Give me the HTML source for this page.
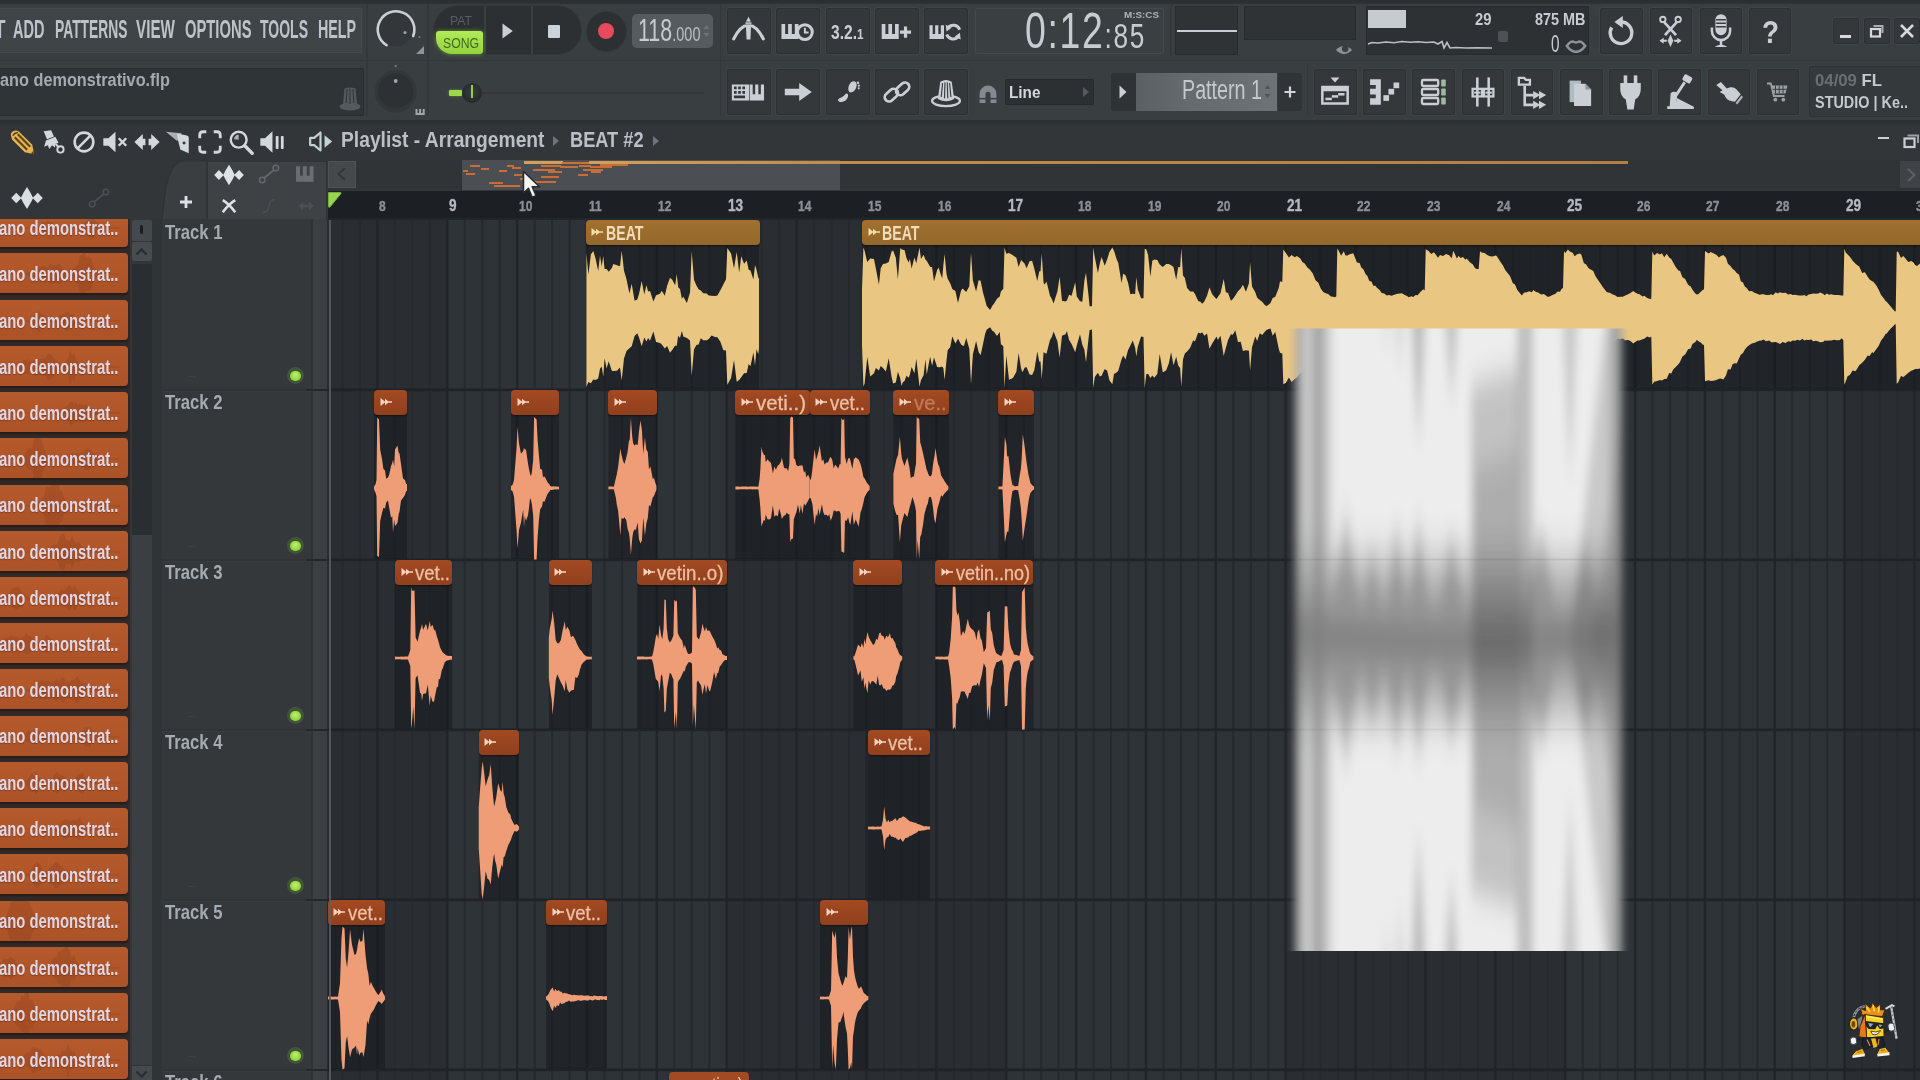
<!DOCTYPE html>
<html lang="en"><head><meta charset="utf-8"><title>FL Studio - Playlist</title>
<style>
html,body{margin:0;padding:0;background:#2e3338;}
body{width:1920px;height:1080px;overflow:hidden;position:relative;font-family:"Liberation Sans",sans-serif;}
#root{position:absolute;left:0;top:0;width:1920px;height:1080px;overflow:hidden;background:#34383b;filter:blur(0.55px);}
.b{position:absolute;display:block;box-sizing:border-box;}
.t{position:absolute;display:block;white-space:nowrap;transform-origin:0 0;}
.tbtn{background:#34383b;border-radius:3px;box-shadow:inset 0 0 0 1px #2d3134, 0 0 0 1px #3f4447;}
.pk{background:linear-gradient(#b65a2c,#ab5227);box-shadow:0 2px 2px rgba(40,15,5,.6);overflow:hidden;}
.ch{border-radius:4px;overflow:hidden;box-shadow:0 1px 1.5px rgba(0,0,0,.45);}
.ch .ca{position:absolute;left:5.5px;top:7.5px;}
</style></head><body><div id="root">
<!-- playlist header -->
<div class="b" style="left:0.0px;top:119.0px;width:1920.0px;height:101.0px;background:#323639;"></div>
<div class="b" style="left:0.0px;top:119.0px;width:1920.0px;height:5.5px;background:linear-gradient(#2a2e31,#2d3134 60%,#323639);"></div>
<svg class="b" style="left:7.5px;top:127.8px" width="28" height="28" viewBox="0 0 30 30" fill="#d3d8dc" stroke="none" color="#d3d8dc"><path d="M3.5 9.5 Q2 5.5 5.5 3.5 Q9.5 1.5 12.5 4.5 L26 18 L28 28 L18 26 L4.5 12.5 Z" fill="#e6b352"/><path d="M7.2 9.8 L20.5 23.2 M10.5 6.8 L23.8 20" stroke="#5c4418" stroke-width="2.3" fill="none"/><path d="M5.2 8.2 Q7 4.6 10.6 5" stroke="#5c4418" stroke-width="1.6" fill="none"/><path d="M28 28 L24.3 27.2 L27.2 24.3Z" fill="#5c4418"/></svg>
<svg class="b" style="left:38.5px;top:127.8px" width="28" height="28" viewBox="0 0 30 30" fill="#d3d8dc" stroke="none" color="#d3d8dc"><path d="M5 3.5 L13 2.5 L16 9 L8.5 12Z"/><path d="M7.5 13.5 L17.5 9.5 L21 16 L18 16.5 L17 21 L14 18.5 L11 22.5 L9.5 18.5 L5.5 20Z"/><circle cx="23" cy="23" r="3.4" fill="none" stroke="currentColor" stroke-width="2"/><path d="M18 17 L21 21" fill="none" stroke="currentColor" stroke-width="2"/></svg>
<svg class="b" style="left:69.5px;top:127.8px" width="28" height="28" viewBox="0 0 30 30" fill="#d3d8dc" stroke="none" color="#d3d8dc"><circle cx="15" cy="15" r="10" fill="none" stroke="currentColor" stroke-width="2.8"/><path d="M8.5 21.5 L21.5 8.5" fill="none" stroke="currentColor" stroke-width="2.8"/></svg>
<svg class="b" style="left:101.0px;top:127.8px" width="28" height="28" viewBox="0 0 30 30" fill="#d3d8dc" stroke="none" color="#d3d8dc"><path d="M2.5 11 H8 L15.5 4 V26 L8 19 H2.5Z"/><path d="M19 11 L27 19 M27 11 L19 19" fill="none" stroke="currentColor" stroke-width="2.6"/></svg>
<svg class="b" style="left:132.5px;top:127.8px" width="28" height="28" viewBox="0 0 30 30" fill="#d3d8dc" stroke="none" color="#d3d8dc"><path d="M1.5 15 L10.5 6.5 V11.5 H19.5 V6.5 L28.5 15 L19.5 23.5 V18.5 H10.5 V23.5Z"/><rect x="13.3" y="8" width="3.4" height="14" fill="#34383b"/></svg>
<svg class="b" style="left:163.5px;top:127.8px" width="28" height="28" viewBox="0 0 30 30" fill="#d3d8dc" stroke="none" color="#d3d8dc"><path d="M2 4 L19 5.5 L14 14Z" fill="#aab0b5"/><path d="M14 6 L24.5 8 Q26.5 8.5 26.5 10.5 V27 L17.5 23 L15 13Z"/><circle cx="21.5" cy="16" r="1.6" fill="#34383b"/></svg>
<svg class="b" style="left:195.5px;top:127.8px" width="28" height="28" viewBox="0 0 30 30" fill="#d3d8dc" stroke="none" color="#d3d8dc"><path d="M4 11 V7.5 Q4 4 7.5 4 H11 M19 4 H22.5 Q26 4 26 7.5 V11 M26 19 V22.5 Q26 26 22.5 26 H19 M11 26 H7.5 Q4 26 4 22.5 V19" fill="none" stroke="currentColor" stroke-width="3"/></svg>
<svg class="b" style="left:226.5px;top:127.8px" width="28" height="28" viewBox="0 0 30 30" fill="#d3d8dc" stroke="none" color="#d3d8dc"><circle cx="12.5" cy="12.5" r="8.5" fill="none" stroke="currentColor" stroke-width="2.6"/><path d="M19 19 L27 27" fill="none" stroke="currentColor" stroke-width="3.6" stroke-linecap="round"/><path d="M7.5 12 A5.2 5.2 0 0 1 12.5 7.3 L12.5 12.5Z" fill="#aab0b5"/></svg>
<svg class="b" style="left:257.5px;top:127.8px" width="28" height="28" viewBox="0 0 30 30" fill="#d3d8dc" stroke="none" color="#d3d8dc"><path d="M2.5 11 H7.5 L15.5 3.5 V26.5 L7.5 19 H2.5Z"/><rect x="19" y="8.5" width="3" height="14" rx="1"/><rect x="24.5" y="8.5" width="3" height="14" rx="1"/></svg>
<svg class="b" style="left:306.5px;top:128.3px" width="27" height="27" viewBox="0 0 30 30" fill="#c3d0d4" stroke="none" color="#c3d0d4"><path d="M3.5 11 H8 L15 5 V25 L8 19 H3.5Z" fill="none" stroke="currentColor" stroke-width="2.4" stroke-linejoin="round"/><path d="M19.5 8 L28 15 L19.5 22Z"/></svg>
<span class="t" style="left:340.5px;top:129.8px;font-size:21.5px;line-height:21.5px;color:#bac0c6;transform:scaleX(0.895);font-weight:bold;">Playlist - Arrangement</span>
<svg class="b" style="left:551px;top:134px" width="10" height="14"><path d="M2 2 L8 7 L2 12Z" fill="#6f757a"/></svg>
<span class="t" style="left:569.5px;top:129.8px;font-size:21.5px;line-height:21.5px;color:#bac0c6;transform:scaleX(0.847);font-weight:bold;">BEAT #2</span>
<svg class="b" style="left:651px;top:134px" width="10" height="14"><path d="M2 2 L8 7 L2 12Z" fill="#6f757a"/></svg>
<div class="b" style="left:1878.0px;top:136.5px;width:11.0px;height:2.6px;background:#c9cfd4;"></div>
<svg class="b" style="left:1901px;top:131px" width="20" height="20" viewBox="0 0 20 20"><path d="M6.5 4.5 H17 V12" fill="none" stroke="#9aa0a5" stroke-width="2"/><rect x="3.5" y="7.5" width="10" height="8.5" fill="none" stroke="#c9cfd4" stroke-width="2.2"/></svg>
<svg class="b" style="left:10.7px;top:181.6px" width="32" height="32" viewBox="0 0 30 30" fill="#d9dee2" stroke="none" color="#d9dee2"><path d="M15 4.8 Q18.5 10 20.8 15 Q18.5 20 15 25.2 Q11.5 20 9.2 15 Q11.5 10 15 4.8Z M4.9 10 L9.8 15 L4.9 20 L0.2 15Z M25.1 10 L29.8 15 L25.1 20 L20.2 15Z"/></svg>
<svg class="b" style="left:86.5px;top:185.5px" width="24" height="24" viewBox="0 0 30 30" fill="#4b5054" stroke="none" color="#4b5054"><circle cx="6.5" cy="22.5" r="3.4" fill="none" stroke="currentColor" stroke-width="2"/><circle cx="23.5" cy="7.5" r="3.4" fill="none" stroke="currentColor" stroke-width="2"/><path d="M9 20 L21 10" fill="none" stroke="currentColor" stroke-width="2.2"/></svg>
<svg class="b" style="left:160px;top:158px" width="50" height="64" viewBox="160 158 50 64"><path d="M162 222 L163.5 205 Q166 178 174 166 Q178 160.5 186 160.5 H207 V222Z" fill="#3a3e41" stroke="#2e3235" stroke-width="1.3"/></svg>
<svg class="b" style="left:176.0px;top:192.0px" width="20" height="20" viewBox="0 0 30 30" fill="#dde2e6" stroke="none" color="#dde2e6"><path d="M15 6 V24 M6 15 H24" fill="none" stroke="currentColor" stroke-width="4.2"/></svg>
<div class="b" style="left:207.0px;top:160.5px;width:120.0px;height:59.0px;background:#3e4245;box-shadow:inset 0 0 0 1px #303437"></div>
<svg class="b" style="left:214.0px;top:159.5px" width="30" height="30" viewBox="0 0 30 30" fill="#dde2e6" stroke="none" color="#dde2e6"><path d="M15 4.8 Q18.5 10 20.8 15 Q18.5 20 15 25.2 Q11.5 20 9.2 15 Q11.5 10 15 4.8Z M4.9 10 L9.8 15 L4.9 20 L0.2 15Z M25.1 10 L29.8 15 L25.1 20 L20.2 15Z"/></svg>
<svg class="b" style="left:257.0px;top:162.0px" width="24" height="24" viewBox="0 0 30 30" fill="#63686c" stroke="none" color="#63686c"><circle cx="6.5" cy="22.5" r="3.4" fill="none" stroke="currentColor" stroke-width="2"/><circle cx="23.5" cy="7.5" r="3.4" fill="none" stroke="currentColor" stroke-width="2"/><path d="M9 20 L21 10" fill="none" stroke="currentColor" stroke-width="2.2"/></svg>
<svg class="b" style="left:293.0px;top:160.5px" width="26" height="26" viewBox="0 0 30 30" fill="#696e72" stroke="none" color="#696e72"><path d="M3 6 h4.6 v11 h3.2 v-11 h4.6 v11 h3.2 v-11 h4.6 v18 h-20.2z" transform="translate(0.5 0)"/></svg>
<svg class="b" style="left:218.0px;top:194.5px" width="22" height="22" viewBox="0 0 30 30" fill="#dde2e6" stroke="none" color="#dde2e6"><path d="M6.5 7 Q15 12 23.5 23.5 M23.5 7 Q15 12 6.5 23.5" fill="none" stroke="currentColor" stroke-width="3.6"/></svg>
<svg class="b" style="left:258.5px;top:195.5px" width="20" height="20" viewBox="0 0 30 30" fill="#4b5054" stroke="none" color="#4b5054"><path d="M6 25 Q14 24 15 15 Q16 6 24 5" fill="none" stroke="currentColor" stroke-width="2.2"/></svg>
<svg class="b" style="left:297.0px;top:197.0px" width="18" height="18" viewBox="0 0 30 30" fill="#4b5054" stroke="none" color="#4b5054"><path d="M2 15 L10 8 V12.8 H20 V8 L28 15 L20 22 V17.2 H10 V22Z"/></svg>
<div class="b" style="left:327.5px;top:159.5px;width:1593.0px;height:30.5px;background:#303437;"></div>
<div class="b" style="left:327.5px;top:160.5px;width:28.5px;height:27.0px;background:#45494c;box-shadow:inset 0 0 0 1px #4e5255"></div>
<svg class="b" style="left:334px;top:165px" width="16" height="18" viewBox="0 0 16 18"><path d="M11 3 L4.5 9 L11 15" fill="none" stroke="#33373a" stroke-width="2.2"/></svg>
<div class="b" style="left:462.0px;top:160.0px;width:378.0px;height:29.5px;background:#4b4f53;"></div>
<div class="b" style="left:1900.0px;top:161.0px;width:20.0px;height:27.0px;background:#3f4346;"></div>
<svg class="b" style="left:1903px;top:166px" width="16" height="18" viewBox="0 0 16 18"><path d="M5 3 L11.5 9 L5 15" fill="none" stroke="#5d6165" stroke-width="2.2"/></svg>
<div class="b" style="left:523.5px;top:161.0px;width:39.0px;height:3.0px;background:#d2a05c;"></div>
<div class="b" style="left:562.0px;top:161.5px;width:27.0px;height:2.4px;background:#c8742f;"></div>
<div class="b" style="left:589.0px;top:161.0px;width:1039.0px;height:3.0px;background:linear-gradient(90deg,#d2a05c,#bf8c4a 25%,#b07f42);"></div>
<div class="b" style="left:470.0px;top:165.0px;width:10.0px;height:2.4px;background:#c86d35;"></div>
<div class="b" style="left:481.0px;top:167.5px;width:8.0px;height:2.4px;background:#c86d35;"></div>
<div class="b" style="left:466.0px;top:173.0px;width:9.0px;height:2.4px;background:#c86d35;"></div>
<div class="b" style="left:463.0px;top:169.5px;width:5.0px;height:2.4px;background:#c86d35;"></div>
<div class="b" style="left:489.0px;top:181.5px;width:14.0px;height:2.4px;background:#c86d35;"></div>
<div class="b" style="left:494.0px;top:184.5px;width:26.0px;height:2.4px;background:#c86d35;"></div>
<div class="b" style="left:507.0px;top:164.5px;width:7.0px;height:2.4px;background:#c86d35;"></div>
<div class="b" style="left:499.0px;top:169.5px;width:8.0px;height:2.4px;background:#c86d35;"></div>
<div class="b" style="left:512.0px;top:167.0px;width:9.0px;height:2.4px;background:#c86d35;"></div>
<div class="b" style="left:514.0px;top:173.5px;width:8.0px;height:2.4px;background:#c86d35;"></div>
<div class="b" style="left:541.0px;top:165.0px;width:20.0px;height:2.4px;background:#c86d35;"></div>
<div class="b" style="left:533.0px;top:168.5px;width:22.0px;height:2.4px;background:#c86d35;"></div>
<div class="b" style="left:548.0px;top:170.5px;width:14.0px;height:2.4px;background:#c86d35;"></div>
<div class="b" style="left:541.0px;top:176.0px;width:18.0px;height:2.4px;background:#c86d35;"></div>
<div class="b" style="left:579.0px;top:164.5px;width:12.0px;height:2.4px;background:#c86d35;"></div>
<div class="b" style="left:590.0px;top:165.5px;width:22.0px;height:2.4px;background:#c86d35;"></div>
<div class="b" style="left:583.0px;top:168.5px;width:20.0px;height:2.4px;background:#c86d35;"></div>
<div class="b" style="left:591.0px;top:170.5px;width:10.0px;height:2.4px;background:#c86d35;"></div>
<div class="b" style="left:578.0px;top:174.0px;width:10.0px;height:2.4px;background:#c86d35;"></div>
<div class="b" style="left:534.0px;top:181.0px;width:22.0px;height:2.4px;background:#c86d35;"></div>
<div class="b" style="left:520.0px;top:178.0px;width:8.0px;height:2.4px;background:#c86d35;"></div>
<div class="b" style="left:560.0px;top:166.0px;width:18.0px;height:2.4px;background:#c86d35;"></div>
<div class="b" style="left:600.0px;top:163.8px;width:28.0px;height:2.4px;background:#c86d35;"></div>
<!-- left -->
<div class="b" style="left:0.0px;top:219.0px;width:130.0px;height:861.0px;background:#2f2b2b;"></div>
<div class="b pk" style="left:-4px;top:219.0px;width:132px;height:28.2px;border-radius:0 0 4px 0"><svg class="b" style="left:4px;top:-11.8px" width="124" height="40"><path d="M0.0 20.5 L2.0 20.5 L4.0 20.3 L6.0 20.5 L8.0 20.3 L10.0 20.3 L12.0 20.5 L14.0 20.5 L16.0 20.3 L18.0 20.2 L20.0 20.2 L22.0 20.5 L24.0 20.3 L26.0 20.4 L28.0 20.4 L30.0 20.3 L32.0 20.4 L34.0 20.2 L36.0 20.1 L38.0 19.0 L40.0 18.6 L42.0 16.2 L44.0 15.1 L46.0 15.7 L48.0 13.6 L50.0 15.8 L52.0 14.5 L54.0 17.9 L56.0 18.9 L58.0 19.8 L60.0 19.8 L62.0 20.0 L64.0 20.2 L66.0 20.2 L68.0 20.4 L70.0 20.3 L72.0 20.2 L74.0 20.4 L76.0 20.1 L78.0 19.4 L80.0 18.2 L82.0 17.1 L84.0 15.5 L86.0 15.1 L88.0 12.2 L90.0 12.1 L92.0 10.1 L94.0 11.0 L96.0 15.1 L98.0 17.6 L100.0 18.6 L102.0 19.2 L104.0 19.7 L106.0 20.2 L108.0 20.1 L110.0 20.3 L112.0 20.4 L114.0 20.3 L116.0 20.3 L118.0 20.3 L120.0 20.5 L120.0 21.5 L118.0 21.7 L116.0 21.7 L114.0 21.7 L112.0 21.6 L110.0 21.7 L108.0 21.9 L106.0 21.8 L104.0 22.3 L102.0 22.8 L100.0 23.4 L98.0 24.4 L96.0 26.9 L94.0 31.0 L92.0 31.9 L90.0 29.9 L88.0 29.8 L86.0 26.9 L84.0 26.5 L82.0 24.9 L80.0 23.8 L78.0 22.6 L76.0 21.9 L74.0 21.6 L72.0 21.8 L70.0 21.7 L68.0 21.6 L66.0 21.8 L64.0 21.8 L62.0 22.0 L60.0 22.2 L58.0 22.2 L56.0 23.1 L54.0 24.1 L52.0 27.5 L50.0 26.2 L48.0 28.4 L46.0 26.3 L44.0 26.9 L42.0 25.8 L40.0 23.4 L38.0 23.0 L36.0 21.9 L34.0 21.8 L32.0 21.6 L30.0 21.7 L28.0 21.6 L26.0 21.6 L24.0 21.7 L22.0 21.5 L20.0 21.8 L18.0 21.8 L16.0 21.7 L14.0 21.5 L12.0 21.5 L10.0 21.7 L8.0 21.7 L6.0 21.5 L4.0 21.7 L2.0 21.5 L0.0 21.5Z" fill="#97441e" fill-opacity="0.45"/></svg></div>
<span class="t" style="left:-1.5px;top:217.0px;font-size:21px;line-height:21px;color:#e2d6e3;transform:scaleX(0.706);font-weight:bold;text-shadow:0 1px 1px rgba(90,40,20,.5);">ano demonstrat..</span>
<div class="b pk" style="left:-4px;top:253.4px;width:132px;height:40.0px;border-radius:0 4px 4px 0"><svg class="b" style="left:4px;top:0.0px" width="124" height="40"><path d="M0.0 20.5 L2.0 20.5 L4.0 20.4 L6.0 20.4 L8.0 20.5 L10.0 20.3 L12.0 20.5 L14.0 20.3 L16.0 20.4 L18.0 20.6 L20.0 20.4 L22.0 20.4 L24.0 20.1 L26.0 19.9 L28.0 19.6 L30.0 18.3 L32.0 18.2 L34.0 15.8 L36.0 16.3 L38.0 16.1 L40.0 12.8 L42.0 14.0 L44.0 11.8 L46.0 14.5 L48.0 14.8 L50.0 10.5 L52.0 12.2 L54.0 12.0 L56.0 12.7 L58.0 10.4 L60.0 11.0 L62.0 14.9 L64.0 16.8 L66.0 16.8 L68.0 18.3 L70.0 17.6 L72.0 17.1 L74.0 14.7 L76.0 12.7 L78.0 11.6 L80.0 2.1 L82.0 2.1 L84.0 -3.7 L86.0 5.1 L88.0 3.3 L90.0 3.8 L92.0 7.8 L94.0 15.8 L96.0 16.4 L98.0 18.3 L100.0 19.3 L102.0 20.0 L104.0 20.1 L106.0 20.3 L108.0 20.3 L110.0 20.4 L112.0 20.4 L114.0 20.4 L116.0 20.3 L118.0 20.2 L120.0 20.5 L120.0 21.5 L118.0 21.8 L116.0 21.7 L114.0 21.6 L112.0 21.6 L110.0 21.6 L108.0 21.7 L106.0 21.7 L104.0 21.9 L102.0 22.0 L100.0 22.7 L98.0 23.7 L96.0 25.6 L94.0 26.2 L92.0 34.2 L90.0 38.2 L88.0 38.7 L86.0 36.9 L84.0 45.7 L82.0 39.9 L80.0 39.9 L78.0 30.4 L76.0 29.3 L74.0 27.3 L72.0 24.9 L70.0 24.4 L68.0 23.7 L66.0 25.2 L64.0 25.2 L62.0 27.1 L60.0 31.0 L58.0 31.6 L56.0 29.3 L54.0 30.0 L52.0 29.8 L50.0 31.5 L48.0 27.2 L46.0 27.5 L44.0 30.2 L42.0 28.0 L40.0 29.2 L38.0 25.9 L36.0 25.7 L34.0 26.2 L32.0 23.8 L30.0 23.7 L28.0 22.4 L26.0 22.1 L24.0 21.9 L22.0 21.6 L20.0 21.6 L18.0 21.4 L16.0 21.6 L14.0 21.7 L12.0 21.5 L10.0 21.7 L8.0 21.5 L6.0 21.6 L4.0 21.6 L2.0 21.5 L0.0 21.5Z" fill="#97441e" fill-opacity="0.45"/></svg></div>
<span class="t" style="left:-1.5px;top:263.2px;font-size:21px;line-height:21px;color:#e2d6e3;transform:scaleX(0.706);font-weight:bold;text-shadow:0 1px 1px rgba(90,40,20,.5);">ano demonstrat..</span>
<div class="b pk" style="left:-4px;top:299.6px;width:132px;height:40.0px;border-radius:0 4px 4px 0"><svg class="b" style="left:4px;top:0.0px" width="124" height="40"><path d="M0.0 20.4 L2.0 20.4 L4.0 20.3 L6.0 20.4 L8.0 20.3 L10.0 20.3 L12.0 20.5 L14.0 20.3 L16.0 20.4 L18.0 20.4 L20.0 20.5 L22.0 20.6 L24.0 20.5 L26.0 20.3 L28.0 19.8 L30.0 18.9 L32.0 17.4 L34.0 15.5 L36.0 13.1 L38.0 11.8 L40.0 11.3 L42.0 14.9 L44.0 14.8 L46.0 16.8 L48.0 19.2 L50.0 20.1 L52.0 20.2 L54.0 19.9 L56.0 19.1 L58.0 18.9 L60.0 15.5 L62.0 14.6 L64.0 14.1 L66.0 12.0 L68.0 11.7 L70.0 14.0 L72.0 13.9 L74.0 15.5 L76.0 18.1 L78.0 19.8 L80.0 20.2 L82.0 20.2 L84.0 20.3 L86.0 20.4 L88.0 20.3 L90.0 20.2 L92.0 20.4 L94.0 20.5 L96.0 20.5 L98.0 20.5 L100.0 20.4 L102.0 20.4 L104.0 20.5 L106.0 20.3 L108.0 20.4 L110.0 20.6 L112.0 20.5 L114.0 20.4 L116.0 20.3 L118.0 20.5 L120.0 20.3 L120.0 21.7 L118.0 21.5 L116.0 21.7 L114.0 21.6 L112.0 21.5 L110.0 21.4 L108.0 21.6 L106.0 21.7 L104.0 21.5 L102.0 21.6 L100.0 21.6 L98.0 21.5 L96.0 21.5 L94.0 21.5 L92.0 21.6 L90.0 21.8 L88.0 21.7 L86.0 21.6 L84.0 21.7 L82.0 21.8 L80.0 21.8 L78.0 22.2 L76.0 23.9 L74.0 26.5 L72.0 28.1 L70.0 28.0 L68.0 30.3 L66.0 30.0 L64.0 27.9 L62.0 27.4 L60.0 26.5 L58.0 23.1 L56.0 22.9 L54.0 22.1 L52.0 21.8 L50.0 21.9 L48.0 22.8 L46.0 25.2 L44.0 27.2 L42.0 27.1 L40.0 30.7 L38.0 30.2 L36.0 28.9 L34.0 26.5 L32.0 24.6 L30.0 23.1 L28.0 22.2 L26.0 21.7 L24.0 21.5 L22.0 21.4 L20.0 21.5 L18.0 21.6 L16.0 21.6 L14.0 21.7 L12.0 21.5 L10.0 21.7 L8.0 21.7 L6.0 21.6 L4.0 21.7 L2.0 21.6 L0.0 21.6Z" fill="#97441e" fill-opacity="0.45"/></svg></div>
<span class="t" style="left:-1.5px;top:309.5px;font-size:21px;line-height:21px;color:#e2d6e3;transform:scaleX(0.706);font-weight:bold;text-shadow:0 1px 1px rgba(90,40,20,.5);">ano demonstrat..</span>
<div class="b pk" style="left:-4px;top:345.9px;width:132px;height:40.0px;border-radius:0 4px 4px 0"><svg class="b" style="left:4px;top:0.0px" width="124" height="40"><path d="M0.0 20.5 L2.0 20.2 L4.0 20.5 L6.0 20.3 L8.0 20.3 L10.0 20.1 L12.0 19.4 L14.0 19.2 L16.0 18.3 L18.0 16.8 L20.0 15.8 L22.0 15.9 L24.0 14.0 L26.0 14.3 L28.0 13.1 L30.0 15.5 L32.0 15.1 L34.0 14.3 L36.0 12.5 L38.0 13.3 L40.0 13.1 L42.0 13.3 L44.0 12.4 L46.0 12.3 L48.0 7.3 L50.0 8.6 L52.0 9.8 L54.0 13.1 L56.0 14.0 L58.0 16.8 L60.0 17.3 L62.0 18.2 L64.0 16.7 L66.0 15.0 L68.0 12.8 L70.0 3.7 L72.0 10.1 L74.0 6.9 L76.0 12.2 L78.0 17.8 L80.0 19.0 L82.0 19.7 L84.0 20.1 L86.0 20.4 L88.0 20.3 L90.0 20.3 L92.0 20.5 L94.0 20.4 L96.0 20.4 L98.0 20.4 L100.0 20.3 L102.0 20.4 L104.0 20.3 L106.0 20.6 L108.0 20.4 L110.0 20.6 L112.0 20.3 L114.0 20.3 L116.0 20.4 L118.0 20.4 L120.0 20.4 L120.0 21.6 L118.0 21.6 L116.0 21.6 L114.0 21.7 L112.0 21.7 L110.0 21.4 L108.0 21.6 L106.0 21.4 L104.0 21.7 L102.0 21.6 L100.0 21.7 L98.0 21.6 L96.0 21.6 L94.0 21.6 L92.0 21.5 L90.0 21.7 L88.0 21.7 L86.0 21.6 L84.0 21.9 L82.0 22.3 L80.0 23.0 L78.0 24.2 L76.0 29.8 L74.0 35.1 L72.0 31.9 L70.0 38.3 L68.0 29.2 L66.0 27.0 L64.0 25.3 L62.0 23.8 L60.0 24.7 L58.0 25.2 L56.0 28.0 L54.0 28.9 L52.0 32.2 L50.0 33.4 L48.0 34.7 L46.0 29.7 L44.0 29.6 L42.0 28.7 L40.0 28.9 L38.0 28.7 L36.0 29.5 L34.0 27.7 L32.0 26.9 L30.0 26.5 L28.0 28.9 L26.0 27.7 L24.0 28.0 L22.0 26.1 L20.0 26.2 L18.0 25.2 L16.0 23.7 L14.0 22.8 L12.0 22.6 L10.0 21.9 L8.0 21.7 L6.0 21.7 L4.0 21.5 L2.0 21.8 L0.0 21.5Z" fill="#97441e" fill-opacity="0.45"/></svg></div>
<span class="t" style="left:-1.5px;top:355.7px;font-size:21px;line-height:21px;color:#e2d6e3;transform:scaleX(0.706);font-weight:bold;text-shadow:0 1px 1px rgba(90,40,20,.5);">ano demonstrat..</span>
<div class="b pk" style="left:-4px;top:392.1px;width:132px;height:40.0px;border-radius:0 4px 4px 0"><svg class="b" style="left:4px;top:0.0px" width="124" height="40"><path d="M0.0 20.6 L2.0 20.5 L4.0 20.3 L6.0 20.5 L8.0 20.3 L10.0 20.5 L12.0 20.3 L14.0 20.3 L16.0 20.4 L18.0 20.4 L20.0 20.5 L22.0 20.4 L24.0 20.4 L26.0 20.4 L28.0 20.4 L30.0 20.4 L32.0 20.5 L34.0 20.5 L36.0 20.4 L38.0 20.5 L40.0 20.4 L42.0 20.3 L44.0 20.3 L46.0 20.5 L48.0 20.4 L50.0 20.2 L52.0 20.3 L54.0 19.8 L56.0 20.0 L58.0 19.0 L60.0 19.3 L62.0 17.3 L64.0 15.5 L66.0 14.8 L68.0 13.0 L70.0 10.2 L72.0 8.5 L74.0 12.7 L76.0 10.2 L78.0 13.2 L80.0 11.1 L82.0 12.8 L84.0 13.2 L86.0 11.5 L88.0 15.3 L90.0 16.0 L92.0 17.5 L94.0 16.6 L96.0 18.7 L98.0 19.6 L100.0 19.5 L102.0 19.8 L104.0 20.1 L106.0 20.3 L108.0 20.3 L110.0 20.3 L112.0 20.5 L114.0 20.3 L116.0 20.3 L118.0 20.3 L120.0 20.3 L120.0 21.7 L118.0 21.7 L116.0 21.7 L114.0 21.7 L112.0 21.5 L110.0 21.7 L108.0 21.7 L106.0 21.7 L104.0 21.9 L102.0 22.2 L100.0 22.5 L98.0 22.4 L96.0 23.3 L94.0 25.4 L92.0 24.5 L90.0 26.0 L88.0 26.7 L86.0 30.5 L84.0 28.8 L82.0 29.2 L80.0 30.9 L78.0 28.8 L76.0 31.8 L74.0 29.3 L72.0 33.5 L70.0 31.8 L68.0 29.0 L66.0 27.2 L64.0 26.5 L62.0 24.7 L60.0 22.7 L58.0 23.0 L56.0 22.0 L54.0 22.2 L52.0 21.7 L50.0 21.8 L48.0 21.6 L46.0 21.5 L44.0 21.7 L42.0 21.7 L40.0 21.6 L38.0 21.5 L36.0 21.6 L34.0 21.5 L32.0 21.5 L30.0 21.6 L28.0 21.6 L26.0 21.6 L24.0 21.6 L22.0 21.6 L20.0 21.5 L18.0 21.6 L16.0 21.6 L14.0 21.7 L12.0 21.7 L10.0 21.5 L8.0 21.7 L6.0 21.5 L4.0 21.7 L2.0 21.5 L0.0 21.4Z" fill="#97441e" fill-opacity="0.45"/></svg></div>
<span class="t" style="left:-1.5px;top:401.9px;font-size:21px;line-height:21px;color:#e2d6e3;transform:scaleX(0.706);font-weight:bold;text-shadow:0 1px 1px rgba(90,40,20,.5);">ano demonstrat..</span>
<div class="b pk" style="left:-4px;top:438.3px;width:132px;height:40.0px;border-radius:0 4px 4px 0"><svg class="b" style="left:4px;top:0.0px" width="124" height="40"><path d="M0.0 20.5 L2.0 20.4 L4.0 20.4 L6.0 20.4 L8.0 20.3 L10.0 20.2 L12.0 20.4 L14.0 20.0 L16.0 20.0 L18.0 19.4 L20.0 18.8 L22.0 18.2 L24.0 17.6 L26.0 13.8 L28.0 10.8 L30.0 9.9 L32.0 10.8 L34.0 1.7 L36.0 -0.2 L38.0 -1.8 L40.0 -0.4 L42.0 4.2 L44.0 10.6 L46.0 15.6 L48.0 17.4 L50.0 18.8 L52.0 19.4 L54.0 19.9 L56.0 20.0 L58.0 20.2 L60.0 20.0 L62.0 19.5 L64.0 19.0 L66.0 18.0 L68.0 17.3 L70.0 17.6 L72.0 15.7 L74.0 15.4 L76.0 15.0 L78.0 15.4 L80.0 15.5 L82.0 13.8 L84.0 12.1 L86.0 10.9 L88.0 9.5 L90.0 11.3 L92.0 14.8 L94.0 15.0 L96.0 17.0 L98.0 16.5 L100.0 18.9 L102.0 19.4 L104.0 20.1 L106.0 20.2 L108.0 20.2 L110.0 20.3 L112.0 20.6 L114.0 20.4 L116.0 20.5 L118.0 20.2 L120.0 20.5 L120.0 21.5 L118.0 21.8 L116.0 21.5 L114.0 21.6 L112.0 21.4 L110.0 21.7 L108.0 21.8 L106.0 21.8 L104.0 21.9 L102.0 22.6 L100.0 23.1 L98.0 25.5 L96.0 25.0 L94.0 27.0 L92.0 27.2 L90.0 30.7 L88.0 32.5 L86.0 31.1 L84.0 29.9 L82.0 28.2 L80.0 26.5 L78.0 26.6 L76.0 27.0 L74.0 26.6 L72.0 26.3 L70.0 24.4 L68.0 24.7 L66.0 24.0 L64.0 23.0 L62.0 22.5 L60.0 22.0 L58.0 21.8 L56.0 22.0 L54.0 22.1 L52.0 22.6 L50.0 23.2 L48.0 24.6 L46.0 26.4 L44.0 31.4 L42.0 37.8 L40.0 42.4 L38.0 43.8 L36.0 42.2 L34.0 40.3 L32.0 31.2 L30.0 32.1 L28.0 31.2 L26.0 28.2 L24.0 24.4 L22.0 23.8 L20.0 23.2 L18.0 22.6 L16.0 22.0 L14.0 22.0 L12.0 21.6 L10.0 21.8 L8.0 21.7 L6.0 21.6 L4.0 21.6 L2.0 21.6 L0.0 21.5Z" fill="#97441e" fill-opacity="0.45"/></svg></div>
<span class="t" style="left:-1.5px;top:448.1px;font-size:21px;line-height:21px;color:#e2d6e3;transform:scaleX(0.706);font-weight:bold;text-shadow:0 1px 1px rgba(90,40,20,.5);">ano demonstrat..</span>
<div class="b pk" style="left:-4px;top:484.5px;width:132px;height:40.0px;border-radius:0 4px 4px 0"><svg class="b" style="left:4px;top:0.0px" width="124" height="40"><path d="M0.0 20.5 L2.0 20.5 L4.0 20.4 L6.0 20.3 L8.0 20.3 L10.0 20.5 L12.0 20.4 L14.0 20.5 L16.0 20.5 L18.0 20.5 L20.0 20.3 L22.0 20.5 L24.0 20.5 L26.0 20.5 L28.0 20.3 L30.0 20.0 L32.0 19.6 L34.0 19.5 L36.0 18.3 L38.0 17.7 L40.0 16.4 L42.0 13.3 L44.0 11.6 L46.0 2.3 L48.0 1.6 L50.0 2.4 L52.0 -0.4 L54.0 -7.3 L56.0 -5.5 L58.0 -7.5 L60.0 5.7 L62.0 5.6 L64.0 12.7 L66.0 15.1 L68.0 17.8 L70.0 19.3 L72.0 20.0 L74.0 19.8 L76.0 20.0 L78.0 20.0 L80.0 19.4 L82.0 18.5 L84.0 18.2 L86.0 16.4 L88.0 16.4 L90.0 13.8 L92.0 14.2 L94.0 16.2 L96.0 16.9 L98.0 16.5 L100.0 16.9 L102.0 17.4 L104.0 18.3 L106.0 19.1 L108.0 19.8 L110.0 20.0 L112.0 20.4 L114.0 20.2 L116.0 20.6 L118.0 20.2 L120.0 20.5 L120.0 21.5 L118.0 21.8 L116.0 21.4 L114.0 21.8 L112.0 21.6 L110.0 22.0 L108.0 22.2 L106.0 22.9 L104.0 23.7 L102.0 24.6 L100.0 25.1 L98.0 25.5 L96.0 25.1 L94.0 25.8 L92.0 27.8 L90.0 28.2 L88.0 25.6 L86.0 25.6 L84.0 23.8 L82.0 23.5 L80.0 22.6 L78.0 22.0 L76.0 22.0 L74.0 22.2 L72.0 22.0 L70.0 22.7 L68.0 24.2 L66.0 26.9 L64.0 29.3 L62.0 36.4 L60.0 36.3 L58.0 49.5 L56.0 47.5 L54.0 49.3 L52.0 42.4 L50.0 39.6 L48.0 40.4 L46.0 39.7 L44.0 30.4 L42.0 28.7 L40.0 25.6 L38.0 24.3 L36.0 23.7 L34.0 22.5 L32.0 22.4 L30.0 22.0 L28.0 21.7 L26.0 21.5 L24.0 21.5 L22.0 21.5 L20.0 21.7 L18.0 21.5 L16.0 21.5 L14.0 21.5 L12.0 21.6 L10.0 21.5 L8.0 21.7 L6.0 21.7 L4.0 21.6 L2.0 21.5 L0.0 21.5Z" fill="#97441e" fill-opacity="0.45"/></svg></div>
<span class="t" style="left:-1.5px;top:494.3px;font-size:21px;line-height:21px;color:#e2d6e3;transform:scaleX(0.706);font-weight:bold;text-shadow:0 1px 1px rgba(90,40,20,.5);">ano demonstrat..</span>
<div class="b pk" style="left:-4px;top:530.7px;width:132px;height:40.0px;border-radius:0 4px 4px 0"><svg class="b" style="left:4px;top:0.0px" width="124" height="40"><path d="M0.0 20.4 L2.0 20.4 L4.0 20.5 L6.0 20.5 L8.0 20.6 L10.0 20.3 L12.0 20.2 L14.0 20.3 L16.0 20.5 L18.0 20.3 L20.0 20.5 L22.0 20.5 L24.0 20.4 L26.0 20.5 L28.0 20.5 L30.0 20.2 L32.0 20.6 L34.0 20.5 L36.0 20.4 L38.0 20.5 L40.0 20.4 L42.0 20.2 L44.0 19.6 L46.0 19.8 L48.0 18.9 L50.0 16.5 L52.0 15.0 L54.0 12.2 L56.0 14.4 L58.0 10.7 L60.0 4.5 L62.0 2.9 L64.0 2.5 L66.0 9.2 L68.0 9.1 L70.0 10.7 L72.0 4.4 L74.0 9.7 L76.0 12.3 L78.0 11.0 L80.0 11.5 L82.0 15.6 L84.0 16.5 L86.0 17.1 L88.0 17.6 L90.0 18.8 L92.0 19.1 L94.0 19.9 L96.0 20.4 L98.0 20.1 L100.0 20.1 L102.0 20.5 L104.0 20.2 L106.0 20.3 L108.0 20.5 L110.0 20.4 L112.0 20.5 L114.0 20.5 L116.0 20.5 L118.0 20.2 L120.0 20.3 L120.0 21.7 L118.0 21.8 L116.0 21.5 L114.0 21.5 L112.0 21.5 L110.0 21.6 L108.0 21.5 L106.0 21.7 L104.0 21.8 L102.0 21.5 L100.0 21.9 L98.0 21.9 L96.0 21.6 L94.0 22.1 L92.0 22.9 L90.0 23.2 L88.0 24.4 L86.0 24.9 L84.0 25.5 L82.0 26.4 L80.0 30.5 L78.0 31.0 L76.0 29.7 L74.0 32.3 L72.0 37.6 L70.0 31.3 L68.0 32.9 L66.0 32.8 L64.0 39.5 L62.0 39.1 L60.0 37.5 L58.0 31.3 L56.0 27.6 L54.0 29.8 L52.0 27.0 L50.0 25.5 L48.0 23.1 L46.0 22.2 L44.0 22.4 L42.0 21.8 L40.0 21.6 L38.0 21.5 L36.0 21.6 L34.0 21.5 L32.0 21.4 L30.0 21.8 L28.0 21.5 L26.0 21.5 L24.0 21.6 L22.0 21.5 L20.0 21.5 L18.0 21.7 L16.0 21.5 L14.0 21.7 L12.0 21.8 L10.0 21.7 L8.0 21.4 L6.0 21.5 L4.0 21.5 L2.0 21.6 L0.0 21.6Z" fill="#97441e" fill-opacity="0.45"/></svg></div>
<span class="t" style="left:-1.5px;top:540.6px;font-size:21px;line-height:21px;color:#e2d6e3;transform:scaleX(0.706);font-weight:bold;text-shadow:0 1px 1px rgba(90,40,20,.5);">ano demonstrat..</span>
<div class="b pk" style="left:-4px;top:577.0px;width:132px;height:40.0px;border-radius:0 4px 4px 0"><svg class="b" style="left:4px;top:0.0px" width="124" height="40"><path d="M0.0 20.3 L2.0 20.1 L4.0 19.1 L6.0 18.4 L8.0 17.4 L10.0 15.8 L12.0 11.6 L14.0 10.9 L16.0 10.0 L18.0 10.3 L20.0 11.6 L22.0 16.5 L24.0 16.7 L26.0 18.8 L28.0 19.4 L30.0 20.0 L32.0 20.3 L34.0 20.2 L36.0 20.6 L38.0 20.3 L40.0 20.4 L42.0 20.3 L44.0 20.4 L46.0 20.2 L48.0 19.8 L50.0 20.0 L52.0 19.9 L54.0 19.3 L56.0 17.1 L58.0 16.0 L60.0 15.1 L62.0 11.6 L64.0 13.9 L66.0 11.9 L68.0 8.7 L70.0 8.0 L72.0 13.1 L74.0 8.8 L76.0 10.4 L78.0 14.6 L80.0 15.4 L82.0 17.3 L84.0 18.2 L86.0 18.5 L88.0 19.3 L90.0 19.8 L92.0 20.3 L94.0 20.1 L96.0 20.5 L98.0 20.2 L100.0 20.5 L102.0 20.4 L104.0 20.5 L106.0 20.6 L108.0 20.3 L110.0 20.3 L112.0 20.5 L114.0 20.4 L116.0 20.6 L118.0 20.3 L120.0 20.5 L120.0 21.5 L118.0 21.7 L116.0 21.4 L114.0 21.6 L112.0 21.5 L110.0 21.7 L108.0 21.7 L106.0 21.4 L104.0 21.5 L102.0 21.6 L100.0 21.5 L98.0 21.8 L96.0 21.5 L94.0 21.9 L92.0 21.7 L90.0 22.2 L88.0 22.7 L86.0 23.5 L84.0 23.8 L82.0 24.7 L80.0 26.6 L78.0 27.4 L76.0 31.6 L74.0 33.2 L72.0 28.9 L70.0 34.0 L68.0 33.3 L66.0 30.1 L64.0 28.1 L62.0 30.4 L60.0 26.9 L58.0 26.0 L56.0 24.9 L54.0 22.7 L52.0 22.1 L50.0 22.0 L48.0 22.2 L46.0 21.8 L44.0 21.6 L42.0 21.7 L40.0 21.6 L38.0 21.7 L36.0 21.4 L34.0 21.8 L32.0 21.7 L30.0 22.0 L28.0 22.6 L26.0 23.2 L24.0 25.3 L22.0 25.5 L20.0 30.4 L18.0 31.7 L16.0 32.0 L14.0 31.1 L12.0 30.4 L10.0 26.2 L8.0 24.6 L6.0 23.6 L4.0 22.9 L2.0 21.9 L0.0 21.7Z" fill="#97441e" fill-opacity="0.45"/></svg></div>
<span class="t" style="left:-1.5px;top:586.8px;font-size:21px;line-height:21px;color:#e2d6e3;transform:scaleX(0.706);font-weight:bold;text-shadow:0 1px 1px rgba(90,40,20,.5);">ano demonstrat..</span>
<div class="b pk" style="left:-4px;top:623.2px;width:132px;height:40.0px;border-radius:0 4px 4px 0"><svg class="b" style="left:4px;top:0.0px" width="124" height="40"><path d="M0.0 18.5 L2.0 17.9 L4.0 16.3 L6.0 14.4 L8.0 15.5 L10.0 13.1 L12.0 12.0 L14.0 14.4 L16.0 13.8 L18.0 13.9 L20.0 16.4 L22.0 14.6 L24.0 13.8 L26.0 9.9 L28.0 12.3 L30.0 12.4 L32.0 14.1 L34.0 16.5 L36.0 19.2 L38.0 19.1 L40.0 18.5 L42.0 15.8 L44.0 16.3 L46.0 11.4 L48.0 12.5 L50.0 15.8 L52.0 15.0 L54.0 18.3 L56.0 19.5 L58.0 19.9 L60.0 20.2 L62.0 20.2 L64.0 20.5 L66.0 20.3 L68.0 20.5 L70.0 20.5 L72.0 20.3 L74.0 20.4 L76.0 20.6 L78.0 20.6 L80.0 20.6 L82.0 20.5 L84.0 20.2 L86.0 20.5 L88.0 20.3 L90.0 20.5 L92.0 20.5 L94.0 20.6 L96.0 20.4 L98.0 20.4 L100.0 20.5 L102.0 20.2 L104.0 20.4 L106.0 20.4 L108.0 20.3 L110.0 20.5 L112.0 20.5 L114.0 20.4 L116.0 20.6 L118.0 20.3 L120.0 20.5 L120.0 21.5 L118.0 21.7 L116.0 21.4 L114.0 21.6 L112.0 21.5 L110.0 21.5 L108.0 21.7 L106.0 21.6 L104.0 21.6 L102.0 21.8 L100.0 21.5 L98.0 21.6 L96.0 21.6 L94.0 21.4 L92.0 21.5 L90.0 21.5 L88.0 21.7 L86.0 21.5 L84.0 21.8 L82.0 21.5 L80.0 21.4 L78.0 21.4 L76.0 21.4 L74.0 21.6 L72.0 21.7 L70.0 21.5 L68.0 21.5 L66.0 21.7 L64.0 21.5 L62.0 21.8 L60.0 21.8 L58.0 22.1 L56.0 22.5 L54.0 23.7 L52.0 27.0 L50.0 26.2 L48.0 29.5 L46.0 30.6 L44.0 25.7 L42.0 26.2 L40.0 23.5 L38.0 22.9 L36.0 22.8 L34.0 25.5 L32.0 27.9 L30.0 29.6 L28.0 29.7 L26.0 32.1 L24.0 28.2 L22.0 27.4 L20.0 25.6 L18.0 28.1 L16.0 28.2 L14.0 27.6 L12.0 30.0 L10.0 28.9 L8.0 26.5 L6.0 27.6 L4.0 25.7 L2.0 24.1 L0.0 23.5Z" fill="#97441e" fill-opacity="0.45"/></svg></div>
<span class="t" style="left:-1.5px;top:633.0px;font-size:21px;line-height:21px;color:#e2d6e3;transform:scaleX(0.706);font-weight:bold;text-shadow:0 1px 1px rgba(90,40,20,.5);">ano demonstrat..</span>
<div class="b pk" style="left:-4px;top:669.4px;width:132px;height:40.0px;border-radius:0 4px 4px 0"><svg class="b" style="left:4px;top:0.0px" width="124" height="40"><path d="M0.0 20.5 L2.0 20.4 L4.0 20.6 L6.0 20.4 L8.0 20.6 L10.0 20.3 L12.0 20.2 L14.0 20.3 L16.0 20.5 L18.0 20.5 L20.0 20.4 L22.0 20.5 L24.0 20.4 L26.0 20.2 L28.0 19.7 L30.0 19.7 L32.0 18.0 L34.0 16.9 L36.0 16.7 L38.0 14.5 L40.0 11.6 L42.0 12.2 L44.0 11.3 L46.0 12.5 L48.0 11.6 L50.0 12.9 L52.0 13.0 L54.0 13.3 L56.0 9.0 L58.0 11.4 L60.0 11.6 L62.0 8.7 L64.0 8.4 L66.0 13.8 L68.0 11.9 L70.0 12.9 L72.0 10.7 L74.0 11.3 L76.0 8.2 L78.0 6.9 L80.0 11.5 L82.0 13.0 L84.0 14.2 L86.0 15.4 L88.0 18.1 L90.0 18.4 L92.0 19.6 L94.0 20.0 L96.0 20.0 L98.0 20.0 L100.0 20.5 L102.0 20.4 L104.0 20.6 L106.0 20.6 L108.0 20.3 L110.0 20.3 L112.0 20.3 L114.0 20.5 L116.0 20.3 L118.0 20.2 L120.0 20.2 L120.0 21.8 L118.0 21.8 L116.0 21.7 L114.0 21.5 L112.0 21.7 L110.0 21.7 L108.0 21.7 L106.0 21.4 L104.0 21.4 L102.0 21.6 L100.0 21.5 L98.0 22.0 L96.0 22.0 L94.0 22.0 L92.0 22.4 L90.0 23.6 L88.0 23.9 L86.0 26.6 L84.0 27.8 L82.0 29.0 L80.0 30.5 L78.0 35.1 L76.0 33.8 L74.0 30.7 L72.0 31.3 L70.0 29.1 L68.0 30.1 L66.0 28.2 L64.0 33.6 L62.0 33.3 L60.0 30.4 L58.0 30.6 L56.0 33.0 L54.0 28.7 L52.0 29.0 L50.0 29.1 L48.0 30.4 L46.0 29.5 L44.0 30.7 L42.0 29.8 L40.0 30.4 L38.0 27.5 L36.0 25.3 L34.0 25.1 L32.0 24.0 L30.0 22.3 L28.0 22.3 L26.0 21.8 L24.0 21.6 L22.0 21.5 L20.0 21.6 L18.0 21.5 L16.0 21.5 L14.0 21.7 L12.0 21.8 L10.0 21.7 L8.0 21.4 L6.0 21.6 L4.0 21.4 L2.0 21.6 L0.0 21.5Z" fill="#97441e" fill-opacity="0.45"/></svg></div>
<span class="t" style="left:-1.5px;top:679.2px;font-size:21px;line-height:21px;color:#e2d6e3;transform:scaleX(0.706);font-weight:bold;text-shadow:0 1px 1px rgba(90,40,20,.5);">ano demonstrat..</span>
<div class="b pk" style="left:-4px;top:715.6px;width:132px;height:40.0px;border-radius:0 4px 4px 0"><svg class="b" style="left:4px;top:0.0px" width="124" height="40"><path d="M0.0 20.3 L2.0 20.4 L4.0 20.5 L6.0 20.4 L8.0 20.3 L10.0 20.3 L12.0 20.4 L14.0 20.2 L16.0 20.1 L18.0 19.8 L20.0 19.6 L22.0 19.6 L24.0 18.1 L26.0 17.0 L28.0 15.3 L30.0 15.5 L32.0 16.2 L34.0 14.3 L36.0 13.8 L38.0 15.0 L40.0 15.5 L42.0 14.7 L44.0 17.3 L46.0 17.2 L48.0 18.7 L50.0 19.1 L52.0 19.7 L54.0 20.1 L56.0 20.2 L58.0 20.3 L60.0 20.2 L62.0 20.5 L64.0 20.4 L66.0 20.2 L68.0 20.1 L70.0 20.2 L72.0 19.8 L74.0 19.3 L76.0 18.7 L78.0 16.9 L80.0 17.8 L82.0 15.0 L84.0 12.8 L86.0 10.6 L88.0 11.9 L90.0 10.1 L92.0 15.6 L94.0 14.0 L96.0 16.4 L98.0 18.3 L100.0 18.1 L102.0 19.4 L104.0 19.9 L106.0 20.1 L108.0 20.3 L110.0 20.6 L112.0 20.3 L114.0 20.4 L116.0 20.3 L118.0 20.5 L120.0 20.3 L120.0 21.7 L118.0 21.5 L116.0 21.7 L114.0 21.6 L112.0 21.7 L110.0 21.4 L108.0 21.7 L106.0 21.9 L104.0 22.1 L102.0 22.6 L100.0 23.9 L98.0 23.7 L96.0 25.6 L94.0 28.0 L92.0 26.4 L90.0 31.9 L88.0 30.1 L86.0 31.4 L84.0 29.2 L82.0 27.0 L80.0 24.2 L78.0 25.1 L76.0 23.3 L74.0 22.7 L72.0 22.2 L70.0 21.8 L68.0 21.9 L66.0 21.8 L64.0 21.6 L62.0 21.5 L60.0 21.8 L58.0 21.7 L56.0 21.8 L54.0 21.9 L52.0 22.3 L50.0 22.9 L48.0 23.3 L46.0 24.8 L44.0 24.7 L42.0 27.3 L40.0 26.5 L38.0 27.0 L36.0 28.2 L34.0 27.7 L32.0 25.8 L30.0 26.5 L28.0 26.7 L26.0 25.0 L24.0 23.9 L22.0 22.4 L20.0 22.4 L18.0 22.2 L16.0 21.9 L14.0 21.8 L12.0 21.6 L10.0 21.7 L8.0 21.7 L6.0 21.6 L4.0 21.5 L2.0 21.6 L0.0 21.7Z" fill="#97441e" fill-opacity="0.45"/></svg></div>
<span class="t" style="left:-1.5px;top:725.4px;font-size:21px;line-height:21px;color:#e2d6e3;transform:scaleX(0.706);font-weight:bold;text-shadow:0 1px 1px rgba(90,40,20,.5);">ano demonstrat..</span>
<div class="b pk" style="left:-4px;top:761.8px;width:132px;height:40.0px;border-radius:0 4px 4px 0"><svg class="b" style="left:4px;top:0.0px" width="124" height="40"><path d="M0.0 20.4 L2.0 20.5 L4.0 20.4 L6.0 20.5 L8.0 20.5 L10.0 20.3 L12.0 20.3 L14.0 20.3 L16.0 20.3 L18.0 20.3 L20.0 20.2 L22.0 19.8 L24.0 19.5 L26.0 18.5 L28.0 16.6 L30.0 14.3 L32.0 10.8 L34.0 14.0 L36.0 9.8 L38.0 12.4 L40.0 17.2 L42.0 16.4 L44.0 18.8 L46.0 18.5 L48.0 17.4 L50.0 16.1 L52.0 16.3 L54.0 12.7 L56.0 11.0 L58.0 9.9 L60.0 13.4 L62.0 13.6 L64.0 14.7 L66.0 16.1 L68.0 18.6 L70.0 18.6 L72.0 19.3 L74.0 17.5 L76.0 15.0 L78.0 12.5 L80.0 11.9 L82.0 9.7 L84.0 12.9 L86.0 17.5 L88.0 18.9 L90.0 20.3 L92.0 20.5 L94.0 20.5 L96.0 20.3 L98.0 20.5 L100.0 20.2 L102.0 20.4 L104.0 20.5 L106.0 20.6 L108.0 20.3 L110.0 20.6 L112.0 20.5 L114.0 20.3 L116.0 20.5 L118.0 20.4 L120.0 20.3 L120.0 21.7 L118.0 21.6 L116.0 21.5 L114.0 21.7 L112.0 21.5 L110.0 21.4 L108.0 21.7 L106.0 21.4 L104.0 21.5 L102.0 21.6 L100.0 21.8 L98.0 21.5 L96.0 21.7 L94.0 21.5 L92.0 21.5 L90.0 21.7 L88.0 23.1 L86.0 24.5 L84.0 29.1 L82.0 32.3 L80.0 30.1 L78.0 29.5 L76.0 27.0 L74.0 24.5 L72.0 22.7 L70.0 23.4 L68.0 23.4 L66.0 25.9 L64.0 27.3 L62.0 28.4 L60.0 28.6 L58.0 32.1 L56.0 31.0 L54.0 29.3 L52.0 25.7 L50.0 25.9 L48.0 24.6 L46.0 23.5 L44.0 23.2 L42.0 25.6 L40.0 24.8 L38.0 29.6 L36.0 32.2 L34.0 28.0 L32.0 31.2 L30.0 27.7 L28.0 25.4 L26.0 23.5 L24.0 22.5 L22.0 22.2 L20.0 21.8 L18.0 21.7 L16.0 21.7 L14.0 21.7 L12.0 21.7 L10.0 21.7 L8.0 21.5 L6.0 21.5 L4.0 21.6 L2.0 21.5 L0.0 21.6Z" fill="#97441e" fill-opacity="0.45"/></svg></div>
<span class="t" style="left:-1.5px;top:771.7px;font-size:21px;line-height:21px;color:#e2d6e3;transform:scaleX(0.706);font-weight:bold;text-shadow:0 1px 1px rgba(90,40,20,.5);">ano demonstrat..</span>
<div class="b pk" style="left:-4px;top:808.1px;width:132px;height:40.0px;border-radius:0 4px 4px 0"><svg class="b" style="left:4px;top:0.0px" width="124" height="40"><path d="M0.0 20.6 L2.0 20.6 L4.0 20.5 L6.0 20.5 L8.0 20.2 L10.0 20.5 L12.0 20.5 L14.0 20.5 L16.0 20.4 L18.0 20.5 L20.0 20.3 L22.0 20.4 L24.0 20.5 L26.0 20.4 L28.0 20.5 L30.0 20.5 L32.0 20.4 L34.0 20.4 L36.0 20.5 L38.0 20.3 L40.0 20.3 L42.0 20.5 L44.0 20.6 L46.0 20.4 L48.0 20.5 L50.0 20.2 L52.0 19.9 L54.0 19.5 L56.0 18.5 L58.0 18.1 L60.0 17.2 L62.0 12.7 L64.0 11.7 L66.0 11.1 L68.0 12.7 L70.0 13.0 L72.0 12.6 L74.0 11.0 L76.0 13.3 L78.0 11.1 L80.0 9.6 L82.0 13.9 L84.0 16.4 L86.0 16.7 L88.0 17.8 L90.0 18.7 L92.0 19.8 L94.0 20.3 L96.0 20.3 L98.0 20.4 L100.0 20.5 L102.0 20.3 L104.0 20.3 L106.0 20.5 L108.0 20.5 L110.0 20.5 L112.0 20.5 L114.0 20.6 L116.0 20.5 L118.0 20.5 L120.0 20.5 L120.0 21.5 L118.0 21.5 L116.0 21.5 L114.0 21.4 L112.0 21.5 L110.0 21.5 L108.0 21.5 L106.0 21.5 L104.0 21.7 L102.0 21.7 L100.0 21.5 L98.0 21.6 L96.0 21.7 L94.0 21.7 L92.0 22.2 L90.0 23.3 L88.0 24.2 L86.0 25.3 L84.0 25.6 L82.0 28.1 L80.0 32.4 L78.0 30.9 L76.0 28.7 L74.0 31.0 L72.0 29.4 L70.0 29.0 L68.0 29.3 L66.0 30.9 L64.0 30.3 L62.0 29.3 L60.0 24.8 L58.0 23.9 L56.0 23.5 L54.0 22.5 L52.0 22.1 L50.0 21.8 L48.0 21.5 L46.0 21.6 L44.0 21.4 L42.0 21.5 L40.0 21.7 L38.0 21.7 L36.0 21.5 L34.0 21.6 L32.0 21.6 L30.0 21.5 L28.0 21.5 L26.0 21.6 L24.0 21.5 L22.0 21.6 L20.0 21.7 L18.0 21.5 L16.0 21.6 L14.0 21.5 L12.0 21.5 L10.0 21.5 L8.0 21.8 L6.0 21.5 L4.0 21.5 L2.0 21.4 L0.0 21.4Z" fill="#97441e" fill-opacity="0.45"/></svg></div>
<span class="t" style="left:-1.5px;top:817.9px;font-size:21px;line-height:21px;color:#e2d6e3;transform:scaleX(0.706);font-weight:bold;text-shadow:0 1px 1px rgba(90,40,20,.5);">ano demonstrat..</span>
<div class="b pk" style="left:-4px;top:854.3px;width:132px;height:40.0px;border-radius:0 4px 4px 0"><svg class="b" style="left:4px;top:0.0px" width="124" height="40"><path d="M0.0 20.4 L2.0 20.4 L4.0 20.4 L6.0 20.4 L8.0 20.3 L10.0 20.4 L12.0 20.3 L14.0 20.3 L16.0 20.5 L18.0 20.3 L20.0 20.4 L22.0 20.4 L24.0 20.2 L26.0 20.2 L28.0 19.5 L30.0 18.4 L32.0 14.0 L34.0 10.7 L36.0 8.9 L38.0 8.2 L40.0 10.6 L42.0 13.6 L44.0 17.5 L46.0 16.9 L48.0 16.6 L50.0 13.6 L52.0 12.3 L54.0 9.2 L56.0 7.6 L58.0 8.2 L60.0 11.1 L62.0 12.6 L64.0 15.8 L66.0 16.4 L68.0 18.0 L70.0 19.7 L72.0 20.0 L74.0 20.2 L76.0 20.5 L78.0 20.2 L80.0 20.6 L82.0 20.4 L84.0 20.5 L86.0 20.5 L88.0 20.5 L90.0 20.4 L92.0 20.5 L94.0 20.4 L96.0 20.4 L98.0 20.4 L100.0 20.5 L102.0 20.4 L104.0 20.3 L106.0 20.6 L108.0 20.4 L110.0 20.4 L112.0 20.4 L114.0 20.6 L116.0 20.5 L118.0 20.5 L120.0 20.3 L120.0 21.7 L118.0 21.5 L116.0 21.5 L114.0 21.4 L112.0 21.6 L110.0 21.6 L108.0 21.6 L106.0 21.4 L104.0 21.7 L102.0 21.6 L100.0 21.5 L98.0 21.6 L96.0 21.6 L94.0 21.6 L92.0 21.5 L90.0 21.6 L88.0 21.5 L86.0 21.5 L84.0 21.5 L82.0 21.6 L80.0 21.4 L78.0 21.8 L76.0 21.5 L74.0 21.8 L72.0 22.0 L70.0 22.3 L68.0 24.0 L66.0 25.6 L64.0 26.2 L62.0 29.4 L60.0 30.9 L58.0 33.8 L56.0 34.4 L54.0 32.8 L52.0 29.7 L50.0 28.4 L48.0 25.4 L46.0 25.1 L44.0 24.5 L42.0 28.4 L40.0 31.4 L38.0 33.8 L36.0 33.1 L34.0 31.3 L32.0 28.0 L30.0 23.6 L28.0 22.5 L26.0 21.8 L24.0 21.8 L22.0 21.6 L20.0 21.6 L18.0 21.7 L16.0 21.5 L14.0 21.7 L12.0 21.7 L10.0 21.6 L8.0 21.7 L6.0 21.6 L4.0 21.6 L2.0 21.6 L0.0 21.6Z" fill="#97441e" fill-opacity="0.45"/></svg></div>
<span class="t" style="left:-1.5px;top:864.1px;font-size:21px;line-height:21px;color:#e2d6e3;transform:scaleX(0.706);font-weight:bold;text-shadow:0 1px 1px rgba(90,40,20,.5);">ano demonstrat..</span>
<div class="b pk" style="left:-4px;top:900.5px;width:132px;height:40.0px;border-radius:0 4px 4px 0"><svg class="b" style="left:4px;top:0.0px" width="124" height="40"><path d="M0.0 19.7 L2.0 18.8 L4.0 18.1 L6.0 16.7 L8.0 9.7 L10.0 4.9 L12.0 -2.8 L14.0 -6.1 L16.0 -8.6 L18.0 -3.9 L20.0 -18.3 L22.0 -10.8 L24.0 -13.8 L26.0 -7.6 L28.0 -2.3 L30.0 4.5 L32.0 7.9 L34.0 13.7 L36.0 15.3 L38.0 17.8 L40.0 18.9 L42.0 19.3 L44.0 19.8 L46.0 20.2 L48.0 20.3 L50.0 20.5 L52.0 20.3 L54.0 20.4 L56.0 20.4 L58.0 20.3 L60.0 20.4 L62.0 20.3 L64.0 20.5 L66.0 20.3 L68.0 20.2 L70.0 20.4 L72.0 20.3 L74.0 20.4 L76.0 20.3 L78.0 20.4 L80.0 20.5 L82.0 20.2 L84.0 20.3 L86.0 20.2 L88.0 20.5 L90.0 20.5 L92.0 20.4 L94.0 20.4 L96.0 20.6 L98.0 20.6 L100.0 20.4 L102.0 20.6 L104.0 20.5 L106.0 20.2 L108.0 20.2 L110.0 20.3 L112.0 20.5 L114.0 20.2 L116.0 20.4 L118.0 20.3 L120.0 20.5 L120.0 21.5 L118.0 21.7 L116.0 21.6 L114.0 21.8 L112.0 21.5 L110.0 21.7 L108.0 21.8 L106.0 21.8 L104.0 21.5 L102.0 21.4 L100.0 21.6 L98.0 21.4 L96.0 21.4 L94.0 21.6 L92.0 21.6 L90.0 21.5 L88.0 21.5 L86.0 21.8 L84.0 21.7 L82.0 21.8 L80.0 21.5 L78.0 21.6 L76.0 21.7 L74.0 21.6 L72.0 21.7 L70.0 21.6 L68.0 21.8 L66.0 21.7 L64.0 21.5 L62.0 21.7 L60.0 21.6 L58.0 21.7 L56.0 21.6 L54.0 21.6 L52.0 21.7 L50.0 21.5 L48.0 21.7 L46.0 21.8 L44.0 22.2 L42.0 22.7 L40.0 23.1 L38.0 24.2 L36.0 26.7 L34.0 28.3 L32.0 34.1 L30.0 37.5 L28.0 44.3 L26.0 49.6 L24.0 55.8 L22.0 52.8 L20.0 60.3 L18.0 45.9 L16.0 50.6 L14.0 48.1 L12.0 44.8 L10.0 37.1 L8.0 32.3 L6.0 25.3 L4.0 23.9 L2.0 23.2 L0.0 22.3Z" fill="#97441e" fill-opacity="0.45"/></svg></div>
<span class="t" style="left:-1.5px;top:910.3px;font-size:21px;line-height:21px;color:#e2d6e3;transform:scaleX(0.706);font-weight:bold;text-shadow:0 1px 1px rgba(90,40,20,.5);">ano demonstrat..</span>
<div class="b pk" style="left:-4px;top:946.7px;width:132px;height:40.0px;border-radius:0 4px 4px 0"><svg class="b" style="left:4px;top:0.0px" width="124" height="40"><path d="M0.0 17.4 L2.0 15.8 L4.0 11.6 L6.0 11.9 L8.0 12.6 L10.0 9.4 L12.0 11.1 L14.0 11.9 L16.0 15.9 L18.0 17.3 L20.0 19.2 L22.0 19.8 L24.0 20.4 L26.0 20.3 L28.0 20.5 L30.0 20.4 L32.0 20.5 L34.0 20.3 L36.0 20.4 L38.0 20.4 L40.0 20.3 L42.0 20.0 L44.0 19.8 L46.0 18.7 L48.0 17.5 L50.0 16.6 L52.0 13.5 L54.0 10.0 L56.0 11.5 L58.0 5.5 L60.0 4.6 L62.0 2.4 L64.0 1.4 L66.0 -5.0 L68.0 -0.9 L70.0 6.0 L72.0 10.5 L74.0 7.6 L76.0 12.7 L78.0 16.4 L80.0 17.2 L82.0 18.8 L84.0 18.7 L86.0 20.0 L88.0 20.1 L90.0 20.5 L92.0 20.2 L94.0 20.4 L96.0 20.6 L98.0 20.4 L100.0 20.3 L102.0 20.4 L104.0 20.4 L106.0 20.2 L108.0 20.4 L110.0 20.4 L112.0 20.3 L114.0 20.3 L116.0 20.4 L118.0 20.5 L120.0 20.4 L120.0 21.6 L118.0 21.5 L116.0 21.6 L114.0 21.7 L112.0 21.7 L110.0 21.6 L108.0 21.6 L106.0 21.8 L104.0 21.6 L102.0 21.6 L100.0 21.7 L98.0 21.6 L96.0 21.4 L94.0 21.6 L92.0 21.8 L90.0 21.5 L88.0 21.9 L86.0 22.0 L84.0 23.3 L82.0 23.2 L80.0 24.8 L78.0 25.6 L76.0 29.3 L74.0 34.4 L72.0 31.5 L70.0 36.0 L68.0 42.9 L66.0 47.0 L64.0 40.6 L62.0 39.6 L60.0 37.4 L58.0 36.5 L56.0 30.5 L54.0 32.0 L52.0 28.5 L50.0 25.4 L48.0 24.5 L46.0 23.3 L44.0 22.2 L42.0 22.0 L40.0 21.7 L38.0 21.6 L36.0 21.6 L34.0 21.7 L32.0 21.5 L30.0 21.6 L28.0 21.5 L26.0 21.7 L24.0 21.6 L22.0 22.2 L20.0 22.8 L18.0 24.7 L16.0 26.1 L14.0 30.1 L12.0 30.9 L10.0 32.6 L8.0 29.4 L6.0 30.1 L4.0 30.4 L2.0 26.2 L0.0 24.6Z" fill="#97441e" fill-opacity="0.45"/></svg></div>
<span class="t" style="left:-1.5px;top:956.5px;font-size:21px;line-height:21px;color:#e2d6e3;transform:scaleX(0.706);font-weight:bold;text-shadow:0 1px 1px rgba(90,40,20,.5);">ano demonstrat..</span>
<div class="b pk" style="left:-4px;top:992.9px;width:132px;height:40.0px;border-radius:0 4px 4px 0"><svg class="b" style="left:4px;top:0.0px" width="124" height="40"><path d="M0.0 20.2 L2.0 20.4 L4.0 20.1 L6.0 19.7 L8.0 19.5 L10.0 18.2 L12.0 17.5 L14.0 14.1 L16.0 9.9 L18.0 7.9 L20.0 7.3 L22.0 2.0 L24.0 3.7 L26.0 -3.3 L28.0 -3.5 L30.0 7.8 L32.0 5.9 L34.0 11.5 L36.0 14.6 L38.0 17.2 L40.0 18.4 L42.0 19.1 L44.0 20.1 L46.0 20.1 L48.0 20.5 L50.0 20.2 L52.0 20.4 L54.0 20.3 L56.0 20.5 L58.0 20.4 L60.0 20.5 L62.0 20.5 L64.0 20.5 L66.0 20.4 L68.0 20.5 L70.0 20.4 L72.0 20.6 L74.0 20.4 L76.0 20.6 L78.0 20.4 L80.0 20.6 L82.0 20.2 L84.0 20.3 L86.0 20.4 L88.0 20.5 L90.0 20.6 L92.0 20.4 L94.0 20.4 L96.0 20.2 L98.0 20.4 L100.0 20.3 L102.0 20.2 L104.0 20.4 L106.0 20.6 L108.0 20.3 L110.0 20.5 L112.0 20.4 L114.0 20.5 L116.0 20.3 L118.0 20.3 L120.0 20.5 L120.0 21.5 L118.0 21.7 L116.0 21.7 L114.0 21.5 L112.0 21.6 L110.0 21.5 L108.0 21.7 L106.0 21.4 L104.0 21.6 L102.0 21.8 L100.0 21.7 L98.0 21.6 L96.0 21.8 L94.0 21.6 L92.0 21.6 L90.0 21.4 L88.0 21.5 L86.0 21.6 L84.0 21.7 L82.0 21.8 L80.0 21.4 L78.0 21.6 L76.0 21.4 L74.0 21.6 L72.0 21.4 L70.0 21.6 L68.0 21.5 L66.0 21.6 L64.0 21.5 L62.0 21.5 L60.0 21.5 L58.0 21.6 L56.0 21.5 L54.0 21.7 L52.0 21.6 L50.0 21.8 L48.0 21.5 L46.0 21.9 L44.0 21.9 L42.0 22.9 L40.0 23.6 L38.0 24.8 L36.0 27.4 L34.0 30.5 L32.0 36.1 L30.0 34.2 L28.0 45.5 L26.0 45.3 L24.0 38.3 L22.0 40.0 L20.0 34.7 L18.0 34.1 L16.0 32.1 L14.0 27.9 L12.0 24.5 L10.0 23.8 L8.0 22.5 L6.0 22.3 L4.0 21.9 L2.0 21.6 L0.0 21.8Z" fill="#97441e" fill-opacity="0.45"/></svg></div>
<span class="t" style="left:-1.5px;top:1002.8px;font-size:21px;line-height:21px;color:#e2d6e3;transform:scaleX(0.706);font-weight:bold;text-shadow:0 1px 1px rgba(90,40,20,.5);">ano demonstrat..</span>
<div class="b pk" style="left:-4px;top:1039.2px;width:132px;height:40.0px;border-radius:0 4px 4px 0"><svg class="b" style="left:4px;top:0.0px" width="124" height="40"><path d="M0.0 20.4 L2.0 20.3 L4.0 20.3 L6.0 20.2 L8.0 20.3 L10.0 20.2 L12.0 20.0 L14.0 19.9 L16.0 20.0 L18.0 19.2 L20.0 18.8 L22.0 17.4 L24.0 16.8 L26.0 14.3 L28.0 13.9 L30.0 12.0 L32.0 8.4 L34.0 8.3 L36.0 8.3 L38.0 11.0 L40.0 9.6 L42.0 13.3 L44.0 14.6 L46.0 17.5 L48.0 18.2 L50.0 19.1 L52.0 18.7 L54.0 18.1 L56.0 17.1 L58.0 14.8 L60.0 15.9 L62.0 11.4 L64.0 12.3 L66.0 11.4 L68.0 3.9 L70.0 10.2 L72.0 12.7 L74.0 12.2 L76.0 17.5 L78.0 18.1 L80.0 19.3 L82.0 20.0 L84.0 20.1 L86.0 20.2 L88.0 20.3 L90.0 20.4 L92.0 20.5 L94.0 20.5 L96.0 20.5 L98.0 20.4 L100.0 20.3 L102.0 20.3 L104.0 20.3 L106.0 20.3 L108.0 20.3 L110.0 20.3 L112.0 20.5 L114.0 20.5 L116.0 20.3 L118.0 20.3 L120.0 20.3 L120.0 21.7 L118.0 21.7 L116.0 21.7 L114.0 21.5 L112.0 21.5 L110.0 21.7 L108.0 21.7 L106.0 21.7 L104.0 21.7 L102.0 21.7 L100.0 21.7 L98.0 21.6 L96.0 21.5 L94.0 21.5 L92.0 21.5 L90.0 21.6 L88.0 21.7 L86.0 21.8 L84.0 21.9 L82.0 22.0 L80.0 22.7 L78.0 23.9 L76.0 24.5 L74.0 29.8 L72.0 29.3 L70.0 31.8 L68.0 38.1 L66.0 30.6 L64.0 29.7 L62.0 30.6 L60.0 26.1 L58.0 27.2 L56.0 24.9 L54.0 23.9 L52.0 23.3 L50.0 22.9 L48.0 23.8 L46.0 24.5 L44.0 27.4 L42.0 28.7 L40.0 32.4 L38.0 31.0 L36.0 33.7 L34.0 33.7 L32.0 33.6 L30.0 30.0 L28.0 28.1 L26.0 27.7 L24.0 25.2 L22.0 24.6 L20.0 23.2 L18.0 22.8 L16.0 22.0 L14.0 22.1 L12.0 22.0 L10.0 21.8 L8.0 21.7 L6.0 21.8 L4.0 21.7 L2.0 21.7 L0.0 21.6Z" fill="#97441e" fill-opacity="0.45"/></svg></div>
<span class="t" style="left:-1.5px;top:1049.0px;font-size:21px;line-height:21px;color:#e2d6e3;transform:scaleX(0.706);font-weight:bold;text-shadow:0 1px 1px rgba(90,40,20,.5);">ano demonstrat..</span>
<div class="b" style="left:130.0px;top:219.0px;width:22.0px;height:861.0px;background:#33373a;"></div>
<div class="b" style="left:131.5px;top:220.0px;width:20.0px;height:20.5px;background:#45494c;border-radius:2px"></div>
<div class="b" style="left:139.5px;top:225.0px;width:3.2px;height:9.0px;background:#1a1c1e;border-radius:2px"></div>
<div class="b" style="left:131.5px;top:241.8px;width:20.0px;height:19.5px;background:#484c4f;border-radius:2px"></div>
<svg class="b" style="left:134px;top:245.5px" width="15" height="12" viewBox="0 0 15 12"><path d="M2.5 8.5 L7.5 3.5 L12.5 8.5" fill="none" stroke="#2a2d30" stroke-width="2.4"/></svg>
<div class="b" style="left:131.5px;top:264.0px;width:20.0px;height:271.0px;background:#2a2e31;"></div>
<div class="b" style="left:131.5px;top:535.0px;width:20.0px;height:530.0px;background:#3b3f42;"></div>
<div class="b" style="left:131.5px;top:1066.0px;width:20.0px;height:14.0px;background:#45494c;"></div>
<svg class="b" style="left:134px;top:1068px" width="15" height="12" viewBox="0 0 15 12"><path d="M2.5 3.5 L7.5 8.5 L12.5 3.5" fill="none" stroke="#2a2d30" stroke-width="2.4"/></svg>
<div class="b" style="left:152.0px;top:219.0px;width:10.0px;height:861.0px;background:#2f3437;"></div>
<div class="b" style="left:161.5px;top:219.0px;width:151.0px;height:861.0px;background:#35383b;"></div>
<div class="b" style="left:312.0px;top:219.0px;width:16.0px;height:861.0px;background:#3b3f42;"></div>
<div class="b" style="left:311.0px;top:219.0px;width:1.5px;height:861.0px;background:#2e3235;"></div>
<div class="b" style="left:326.5px;top:219.0px;width:1.5px;height:861.0px;background:#2a2d30;"></div>
<span class="t" style="left:164.5px;top:221.4px;font-size:21px;line-height:21px;color:#a4abb1;transform:scaleX(0.794);font-weight:bold;">Track 1</span>
<div class="b" style="left:287.9px;top:368.3px;width:15px;height:15px;border-radius:50%;background:#3d5a2c;box-shadow:0 0 0 1px #4a4f4c"></div>
<div class="b" style="left:290.2px;top:370.6px;width:10.4px;height:10.4px;border-radius:50%;background:radial-gradient(circle at 50% 40%,#c0f070,#8ed03c 70%,#78b832)"></div>
<span class="t" style="left:188.0px;top:370.4px;font-size:9px;line-height:9px;color:#4a4f53;transform:scaleX(1.000);">...</span>
<div class="b" style="left:161.5px;top:388.5px;width:150.0px;height:2.2px;background:#2e3134;opacity:.6"></div>
<div class="b" style="left:306.0px;top:388.5px;width:22.0px;height:2.4px;background:#24272a;"></div>
<div class="b" style="left:161.5px;top:390.7px;width:150.0px;height:1.2px;background:#3c3f42;opacity:.6"></div>
<span class="t" style="left:164.5px;top:391.4px;font-size:21px;line-height:21px;color:#a4abb1;transform:scaleX(0.794);font-weight:bold;">Track 2</span>
<div class="b" style="left:287.9px;top:538.3px;width:15px;height:15px;border-radius:50%;background:#3d5a2c;box-shadow:0 0 0 1px #4a4f4c"></div>
<div class="b" style="left:290.2px;top:540.6px;width:10.4px;height:10.4px;border-radius:50%;background:radial-gradient(circle at 50% 40%,#c0f070,#8ed03c 70%,#78b832)"></div>
<span class="t" style="left:188.0px;top:540.4px;font-size:9px;line-height:9px;color:#4a4f53;transform:scaleX(1.000);">...</span>
<div class="b" style="left:161.5px;top:558.5px;width:150.0px;height:2.2px;background:#2e3134;opacity:.6"></div>
<div class="b" style="left:306.0px;top:558.5px;width:22.0px;height:2.4px;background:#24272a;"></div>
<div class="b" style="left:161.5px;top:560.7px;width:150.0px;height:1.2px;background:#3c3f42;opacity:.6"></div>
<span class="t" style="left:164.5px;top:561.4px;font-size:21px;line-height:21px;color:#a4abb1;transform:scaleX(0.794);font-weight:bold;">Track 3</span>
<div class="b" style="left:287.9px;top:708.3px;width:15px;height:15px;border-radius:50%;background:#3d5a2c;box-shadow:0 0 0 1px #4a4f4c"></div>
<div class="b" style="left:290.2px;top:710.6px;width:10.4px;height:10.4px;border-radius:50%;background:radial-gradient(circle at 50% 40%,#c0f070,#8ed03c 70%,#78b832)"></div>
<span class="t" style="left:188.0px;top:710.4px;font-size:9px;line-height:9px;color:#4a4f53;transform:scaleX(1.000);">...</span>
<div class="b" style="left:161.5px;top:728.5px;width:150.0px;height:2.2px;background:#2e3134;opacity:.6"></div>
<div class="b" style="left:306.0px;top:728.5px;width:22.0px;height:2.4px;background:#24272a;"></div>
<div class="b" style="left:161.5px;top:730.7px;width:150.0px;height:1.2px;background:#3c3f42;opacity:.6"></div>
<span class="t" style="left:164.5px;top:731.4px;font-size:21px;line-height:21px;color:#a4abb1;transform:scaleX(0.794);font-weight:bold;">Track 4</span>
<div class="b" style="left:287.9px;top:878.3px;width:15px;height:15px;border-radius:50%;background:#3d5a2c;box-shadow:0 0 0 1px #4a4f4c"></div>
<div class="b" style="left:290.2px;top:880.6px;width:10.4px;height:10.4px;border-radius:50%;background:radial-gradient(circle at 50% 40%,#c0f070,#8ed03c 70%,#78b832)"></div>
<span class="t" style="left:188.0px;top:880.4px;font-size:9px;line-height:9px;color:#4a4f53;transform:scaleX(1.000);">...</span>
<div class="b" style="left:161.5px;top:898.5px;width:150.0px;height:2.2px;background:#2e3134;opacity:.6"></div>
<div class="b" style="left:306.0px;top:898.5px;width:22.0px;height:2.4px;background:#24272a;"></div>
<div class="b" style="left:161.5px;top:900.7px;width:150.0px;height:1.2px;background:#3c3f42;opacity:.6"></div>
<span class="t" style="left:164.5px;top:901.4px;font-size:21px;line-height:21px;color:#a4abb1;transform:scaleX(0.794);font-weight:bold;">Track 5</span>
<div class="b" style="left:287.9px;top:1048.3px;width:15px;height:15px;border-radius:50%;background:#3d5a2c;box-shadow:0 0 0 1px #4a4f4c"></div>
<div class="b" style="left:290.2px;top:1050.6px;width:10.4px;height:10.4px;border-radius:50%;background:radial-gradient(circle at 50% 40%,#c0f070,#8ed03c 70%,#78b832)"></div>
<span class="t" style="left:188.0px;top:1050.4px;font-size:9px;line-height:9px;color:#4a4f53;transform:scaleX(1.000);">...</span>
<div class="b" style="left:161.5px;top:1068.5px;width:150.0px;height:2.2px;background:#2e3134;opacity:.6"></div>
<div class="b" style="left:306.0px;top:1068.5px;width:22.0px;height:2.4px;background:#24272a;"></div>
<div class="b" style="left:161.5px;top:1070.7px;width:150.0px;height:1.2px;background:#3c3f42;opacity:.6"></div>
<span class="t" style="left:164.5px;top:1071.4px;font-size:21px;line-height:21px;color:#a4abb1;transform:scaleX(0.794);font-weight:bold;">Track 6</span>
<span class="t" style="left:188.0px;top:1220.4px;font-size:9px;line-height:9px;color:#4a4f53;transform:scaleX(1.000);">...</span>
<!-- grid -->
<svg class="b" style="left:328px;top:220px" width="1592" height="860" viewBox="328 220 1592 860"><rect x="328" y="220" width="1592" height="860" fill="#2e3338"/><rect x="328.0" y="220" width="119.3" height="860" fill="#000" fill-opacity="0.085"/><rect x="726.8" y="220" width="279.5" height="860" fill="#000" fill-opacity="0.085"/><rect x="1285.7" y="220" width="279.5" height="860" fill="#000" fill-opacity="0.085"/><rect x="1844.7" y="220" width="75.3" height="860" fill="#000" fill-opacity="0.085"/><rect x="341.46" y="220" width="2" height="860" fill="#262a2e"/><rect x="358.93" y="220" width="2" height="860" fill="#262a2e"/><rect x="393.87" y="220" width="2" height="860" fill="#262a2e"/><rect x="411.33" y="220" width="2" height="860" fill="#262a2e"/><rect x="428.80" y="220" width="2" height="860" fill="#262a2e"/><rect x="463.74" y="220" width="2" height="860" fill="#262a2e"/><rect x="481.20" y="220" width="2" height="860" fill="#262a2e"/><rect x="498.67" y="220" width="2" height="860" fill="#262a2e"/><rect x="533.61" y="220" width="2" height="860" fill="#262a2e"/><rect x="551.08" y="220" width="2" height="860" fill="#262a2e"/><rect x="568.54" y="220" width="2" height="860" fill="#262a2e"/><rect x="603.48" y="220" width="2" height="860" fill="#262a2e"/><rect x="620.94" y="220" width="2" height="860" fill="#262a2e"/><rect x="638.41" y="220" width="2" height="860" fill="#262a2e"/><rect x="673.35" y="220" width="2" height="860" fill="#262a2e"/><rect x="690.82" y="220" width="2" height="860" fill="#262a2e"/><rect x="708.28" y="220" width="2" height="860" fill="#262a2e"/><rect x="743.22" y="220" width="2" height="860" fill="#262a2e"/><rect x="760.68" y="220" width="2" height="860" fill="#262a2e"/><rect x="778.15" y="220" width="2" height="860" fill="#262a2e"/><rect x="813.09" y="220" width="2" height="860" fill="#262a2e"/><rect x="830.56" y="220" width="2" height="860" fill="#262a2e"/><rect x="848.02" y="220" width="2" height="860" fill="#262a2e"/><rect x="882.96" y="220" width="2" height="860" fill="#262a2e"/><rect x="900.42" y="220" width="2" height="860" fill="#262a2e"/><rect x="917.89" y="220" width="2" height="860" fill="#262a2e"/><rect x="952.83" y="220" width="2" height="860" fill="#262a2e"/><rect x="970.30" y="220" width="2" height="860" fill="#262a2e"/><rect x="987.76" y="220" width="2" height="860" fill="#262a2e"/><rect x="1022.70" y="220" width="2" height="860" fill="#262a2e"/><rect x="1040.16" y="220" width="2" height="860" fill="#262a2e"/><rect x="1057.63" y="220" width="2" height="860" fill="#262a2e"/><rect x="1092.57" y="220" width="2" height="860" fill="#262a2e"/><rect x="1110.03" y="220" width="2" height="860" fill="#262a2e"/><rect x="1127.50" y="220" width="2" height="860" fill="#262a2e"/><rect x="1162.44" y="220" width="2" height="860" fill="#262a2e"/><rect x="1179.90" y="220" width="2" height="860" fill="#262a2e"/><rect x="1197.37" y="220" width="2" height="860" fill="#262a2e"/><rect x="1232.31" y="220" width="2" height="860" fill="#262a2e"/><rect x="1249.78" y="220" width="2" height="860" fill="#262a2e"/><rect x="1267.24" y="220" width="2" height="860" fill="#262a2e"/><rect x="1302.18" y="220" width="2" height="860" fill="#262a2e"/><rect x="1319.64" y="220" width="2" height="860" fill="#262a2e"/><rect x="1337.11" y="220" width="2" height="860" fill="#262a2e"/><rect x="1372.05" y="220" width="2" height="860" fill="#262a2e"/><rect x="1389.51" y="220" width="2" height="860" fill="#262a2e"/><rect x="1406.98" y="220" width="2" height="860" fill="#262a2e"/><rect x="1441.92" y="220" width="2" height="860" fill="#262a2e"/><rect x="1459.39" y="220" width="2" height="860" fill="#262a2e"/><rect x="1476.85" y="220" width="2" height="860" fill="#262a2e"/><rect x="1511.79" y="220" width="2" height="860" fill="#262a2e"/><rect x="1529.26" y="220" width="2" height="860" fill="#262a2e"/><rect x="1546.72" y="220" width="2" height="860" fill="#262a2e"/><rect x="1581.66" y="220" width="2" height="860" fill="#262a2e"/><rect x="1599.12" y="220" width="2" height="860" fill="#262a2e"/><rect x="1616.59" y="220" width="2" height="860" fill="#262a2e"/><rect x="1651.53" y="220" width="2" height="860" fill="#262a2e"/><rect x="1668.99" y="220" width="2" height="860" fill="#262a2e"/><rect x="1686.46" y="220" width="2" height="860" fill="#262a2e"/><rect x="1721.40" y="220" width="2" height="860" fill="#262a2e"/><rect x="1738.87" y="220" width="2" height="860" fill="#262a2e"/><rect x="1756.33" y="220" width="2" height="860" fill="#262a2e"/><rect x="1791.27" y="220" width="2" height="860" fill="#262a2e"/><rect x="1808.74" y="220" width="2" height="860" fill="#262a2e"/><rect x="1826.20" y="220" width="2" height="860" fill="#262a2e"/><rect x="1861.14" y="220" width="2" height="860" fill="#262a2e"/><rect x="1878.61" y="220" width="2" height="860" fill="#262a2e"/><rect x="1896.07" y="220" width="2" height="860" fill="#262a2e"/><rect x="376.20" y="220" width="2.4" height="860" fill="#212529"/><rect x="446.07" y="220" width="2.4" height="860" fill="#212529"/><rect x="515.94" y="220" width="2.4" height="860" fill="#212529"/><rect x="585.81" y="220" width="2.4" height="860" fill="#212529"/><rect x="655.68" y="220" width="2.4" height="860" fill="#212529"/><rect x="725.55" y="220" width="2.4" height="860" fill="#212529"/><rect x="795.42" y="220" width="2.4" height="860" fill="#212529"/><rect x="865.29" y="220" width="2.4" height="860" fill="#212529"/><rect x="935.16" y="220" width="2.4" height="860" fill="#212529"/><rect x="1005.03" y="220" width="2.4" height="860" fill="#212529"/><rect x="1074.90" y="220" width="2.4" height="860" fill="#212529"/><rect x="1144.77" y="220" width="2.4" height="860" fill="#212529"/><rect x="1214.64" y="220" width="2.4" height="860" fill="#212529"/><rect x="1284.51" y="220" width="2.4" height="860" fill="#212529"/><rect x="1354.38" y="220" width="2.4" height="860" fill="#212529"/><rect x="1424.25" y="220" width="2.4" height="860" fill="#212529"/><rect x="1494.12" y="220" width="2.4" height="860" fill="#212529"/><rect x="1563.99" y="220" width="2.4" height="860" fill="#212529"/><rect x="1633.86" y="220" width="2.4" height="860" fill="#212529"/><rect x="1703.73" y="220" width="2.4" height="860" fill="#212529"/><rect x="1773.60" y="220" width="2.4" height="860" fill="#212529"/><rect x="1843.47" y="220" width="2.4" height="860" fill="#212529"/><rect x="1913.34" y="220" width="2.4" height="860" fill="#212529"/><rect x="328" y="388.5" width="1592" height="2.6" fill="#1f2226"/><rect x="328" y="558.5" width="1592" height="2.6" fill="#1f2226"/><rect x="328" y="728.5" width="1592" height="2.6" fill="#1f2226"/><rect x="328" y="898.5" width="1592" height="2.6" fill="#1f2226"/><rect x="328" y="1068.5" width="1592" height="2.6" fill="#1f2226"/><rect x="586.4" y="244" width="172.6" height="145" fill="#14161a" fill-opacity="0.5"/><rect x="862.0" y="244" width="1059.0" height="145" fill="#14161a" fill-opacity="0.5"/><rect x="374.0" y="414" width="33.0" height="145" fill="#14161a" fill-opacity="0.5"/><rect x="511.0" y="414" width="48.0" height="145" fill="#14161a" fill-opacity="0.5"/><rect x="608.4" y="414" width="48.6" height="145" fill="#14161a" fill-opacity="0.5"/><rect x="735.4" y="414" width="74.2" height="145" fill="#14161a" fill-opacity="0.5"/><rect x="809.6" y="414" width="60.4" height="145" fill="#14161a" fill-opacity="0.5"/><rect x="893.4" y="414" width="55.6" height="145" fill="#14161a" fill-opacity="0.5"/><rect x="998.4" y="414" width="35.6" height="145" fill="#14161a" fill-opacity="0.5"/><rect x="395.0" y="584" width="57.2" height="145" fill="#14161a" fill-opacity="0.5"/><rect x="548.8" y="584" width="43.2" height="145" fill="#14161a" fill-opacity="0.5"/><rect x="637.0" y="584" width="90.0" height="145" fill="#14161a" fill-opacity="0.5"/><rect x="853.4" y="584" width="48.8" height="145" fill="#14161a" fill-opacity="0.5"/><rect x="935.4" y="584" width="98.1" height="145" fill="#14161a" fill-opacity="0.5"/><rect x="478.7" y="754" width="40.3" height="145" fill="#14161a" fill-opacity="0.5"/><rect x="868.0" y="754" width="62.0" height="145" fill="#14161a" fill-opacity="0.5"/><rect x="327.5" y="924" width="57.5" height="145" fill="#14161a" fill-opacity="0.5"/><rect x="546.0" y="924" width="61.0" height="145" fill="#14161a" fill-opacity="0.5"/><rect x="820.0" y="924" width="48.3" height="145" fill="#14161a" fill-opacity="0.5"/><path d="M586.4 253.0 L588.4 274.5 L590.9 254.6 L593.3 251.0 L595.6 258.8 L598.2 271.0 L600.0 255.8 L601.7 266.4 L603.3 256.2 L604.6 269.1 L606.6 269.1 L608.7 271.8 L611.8 268.1 L613.3 264.1 L617.0 265.2 L620.0 266.3 L621.7 250.7 L624.0 270.7 L626.5 279.3 L629.4 293.4 L631.7 283.8 L634.6 300.7 L637.3 299.4 L639.0 293.9 L641.7 281.0 L644.3 294.5 L646.4 285.3 L648.1 291.4 L650.0 291.1 L653.4 301.5 L656.1 295.3 L660.0 293.7 L661.8 290.8 L664.8 295.8 L667.1 285.8 L670.0 277.8 L672.2 279.7 L675.2 285.2 L676.7 273.9 L678.2 287.3 L680.0 288.9 L681.9 298.8 L683.3 296.8 L686.9 302.9 L690.0 292.4 L691.7 251.0 L694.0 279.7 L696.4 285.4 L698.6 289.2 L700.8 290.4 L703.3 293.3 L706.7 293.5 L708.8 295.5 L711.5 295.7 L715.0 296.0 L717.4 295.5 L720.5 290.0 L723.3 284.4 L726.0 279.2 L727.3 248.0 L731.1 253.4 L734.0 268.3 L736.7 252.0 L739.2 272.5 L741.2 256.3 L744.1 263.7 L746.7 260.6 L748.7 269.8 L750.5 270.5 L753.4 279.5 L755.0 265.0 L756.5 269.6 L758.3 277.7 L759.0 278.8 L759.0 347.9 L758.3 354.2 L756.5 349.3 L755.0 365.3 L753.4 352.4 L750.5 366.3 L748.7 363.9 L746.7 372.9 L744.1 373.2 L741.2 377.2 L739.2 380.1 L736.7 381.7 L734.0 360.1 L731.1 377.9 L727.3 384.8 L726.0 350.4 L723.3 350.2 L720.5 342.1 L717.4 337.2 L715.0 337.1 L711.5 335.6 L708.8 338.9 L706.7 340.3 L703.3 340.3 L700.8 338.2 L698.6 344.4 L696.4 345.1 L694.0 349.6 L691.7 375.8 L690.0 340.6 L686.9 337.9 L683.3 336.6 L681.9 330.9 L680.0 338.0 L678.2 335.7 L676.7 346.0 L675.2 345.5 L672.2 350.0 L670.0 352.8 L667.1 346.1 L664.8 348.4 L661.8 344.5 L660.0 343.0 L656.1 342.1 L653.4 331.4 L650.0 340.8 L648.1 338.0 L646.4 341.6 L644.3 337.6 L641.7 346.2 L639.0 337.4 L637.3 333.3 L634.6 336.0 L631.7 346.3 L629.4 348.2 L626.5 351.0 L624.0 358.4 L621.7 380.4 L620.0 367.6 L617.0 370.8 L613.3 371.0 L611.8 370.7 L608.7 361.3 L606.6 368.6 L604.6 358.2 L603.3 376.7 L601.7 366.4 L600.0 368.8 L598.2 378.5 L595.6 379.9 L593.3 379.5 L590.9 383.3 L588.4 382.1 L586.4 386.9Z" fill="#e9c682"/><path d="M862.0 289.1 L863.4 247.6 L864.6 250.7 L867.3 262.0 L870.2 258.4 L874.0 259.0 L875.9 268.7 L878.9 284.8 L880.7 268.2 L883.0 263.9 L885.9 263.5 L888.7 262.0 L891.6 251.4 L893.1 250.6 L895.8 257.8 L897.9 279.3 L900.3 247.9 L901.5 249.2 L902.8 249.7 L904.5 250.0 L906.5 257.9 L908.6 262.5 L909.9 259.1 L911.6 268.6 L914.4 257.6 L916.3 263.2 L919.5 247.5 L921.0 259.0 L923.6 254.8 L925.5 259.8 L926.7 260.7 L930.1 266.8 L932.1 267.3 L934.0 281.5 L937.1 269.9 L938.6 267.5 L940.1 272.6 L942.2 278.4 L943.4 265.1 L944.6 253.9 L946.5 274.0 L947.7 278.7 L950.3 283.4 L952.3 289.1 L955.4 290.9 L958.0 302.9 L961.1 290.4 L962.6 288.6 L964.1 289.9 L966.2 291.9 L969.3 286.2 L971.0 252.4 L972.9 280.4 L976.1 291.4 L978.6 280.3 L980.6 280.8 L983.0 292.6 L985.1 299.9 L986.6 305.7 L990.1 310.1 L992.5 305.6 L993.8 304.0 L997.0 298.7 L999.7 296.4 L1000.9 291.4 L1003.3 288.7 L1004.5 247.5 L1006.3 253.7 L1009.0 253.1 L1012.9 255.3 L1016.4 257.8 L1018.6 266.9 L1021.1 260.1 L1022.5 261.5 L1024.6 263.4 L1026.5 268.3 L1029.6 261.2 L1032.1 260.7 L1034.3 268.8 L1037.3 281.0 L1039.3 271.2 L1040.5 271.3 L1041.7 253.4 L1043.6 282.9 L1044.7 284.6 L1046.5 281.6 L1050.0 295.8 L1051.8 298.9 L1053.6 303.4 L1057.4 291.6 L1059.6 276.8 L1062.0 300.7 L1065.6 301.6 L1066.9 300.5 L1069.1 294.8 L1071.6 295.8 L1075.2 282.2 L1076.8 296.6 L1080.0 301.2 L1082.3 301.8 L1084.4 280.4 L1086.0 272.8 L1088.5 295.2 L1089.6 306.2 L1092.0 306.3 L1093.2 247.5 L1094.8 257.3 L1097.9 273.1 L1099.9 263.0 L1101.6 257.1 L1104.7 265.7 L1107.2 259.2 L1109.4 252.0 L1112.3 247.5 L1114.0 250.7 L1116.9 259.9 L1118.3 263.1 L1121.5 283.1 L1123.2 273.7 L1125.5 275.2 L1128.0 282.6 L1130.4 294.2 L1132.7 293.7 L1135.1 294.1 L1136.3 277.3 L1137.8 289.5 L1141.1 298.3 L1143.5 298.3 L1144.7 248.8 L1146.3 249.3 L1148.1 255.0 L1150.4 276.8 L1152.3 260.7 L1154.3 259.4 L1157.3 260.0 L1159.7 264.4 L1162.8 267.1 L1166.2 264.0 L1168.8 263.9 L1171.1 265.3 L1173.5 267.1 L1176.2 279.7 L1178.2 267.1 L1180.1 267.2 L1181.3 248.0 L1183.0 275.4 L1184.8 277.8 L1187.1 288.0 L1190.2 291.6 L1193.2 291.5 L1195.0 294.1 L1198.2 301.0 L1200.4 301.7 L1202.2 303.7 L1204.3 301.6 L1207.1 295.6 L1209.4 287.6 L1212.2 294.3 L1215.0 297.4 L1216.5 299.1 L1217.8 296.9 L1220.5 293.2 L1223.7 279.0 L1225.9 292.2 L1228.1 293.1 L1230.9 300.8 L1232.9 299.1 L1235.3 295.5 L1238.0 291.3 L1240.7 288.6 L1242.9 284.8 L1245.9 291.8 L1248.9 283.6 L1250.1 262.1 L1252.0 286.6 L1255.2 292.1 L1257.2 297.8 L1259.8 299.9 L1262.2 301.7 L1265.0 305.2 L1266.9 305.9 L1270.5 303.0 L1272.7 298.0 L1275.3 296.7 L1278.8 287.8 L1280.0 281.3 L1282.3 282.0 L1283.3 249.6 L1286.0 253.2 L1288.9 257.6 L1291.6 254.9 L1294.7 257.2 L1296.7 256.0 L1300.1 258.2 L1302.6 262.2 L1304.5 263.2 L1307.4 267.4 L1310.0 269.8 L1312.8 273.4 L1315.5 280.2 L1318.2 282.6 L1320.9 288.8 L1323.3 292.1 L1325.6 293.3 L1328.2 293.9 L1330.8 296.5 L1333.1 296.7 L1335.0 297.3 L1336.3 296.2 L1337.3 248.5 L1338.5 250.3 L1341.1 255.8 L1343.8 251.3 L1345.5 255.4 L1347.4 255.5 L1349.7 254.2 L1353.3 253.3 L1357.0 262.4 L1359.6 263.0 L1361.3 267.4 L1363.3 269.3 L1365.7 274.2 L1367.4 276.0 L1369.3 281.1 L1371.5 281.4 L1373.3 285.7 L1375.4 285.8 L1377.1 287.9 L1379.4 289.7 L1381.7 292.9 L1384.2 293.6 L1386.7 295.6 L1388.8 294.9 L1391.8 295.7 L1393.4 295.1 L1395.7 294.2 L1397.8 293.8 L1400.0 293.5 L1401.9 293.3 L1404.8 294.9 L1407.0 295.9 L1408.7 297.3 L1411.3 296.3 L1413.3 296.9 L1415.6 295.0 L1417.7 295.3 L1420.3 291.9 L1423.3 289.3 L1424.7 290.5 L1425.7 249.3 L1428.5 251.0 L1431.3 254.0 L1433.9 252.3 L1436.1 254.9 L1438.0 257.7 L1440.0 255.1 L1443.0 256.1 L1446.1 254.0 L1449.2 255.3 L1451.7 258.3 L1453.3 250.7 L1456.9 258.4 L1458.6 255.8 L1460.4 257.9 L1462.9 257.0 L1465.5 259.7 L1466.7 258.5 L1469.9 262.2 L1472.9 264.4 L1475.1 268.3 L1476.7 268.9 L1478.7 269.1 L1480.0 251.2 L1481.5 252.4 L1484.6 253.1 L1486.8 254.8 L1489.9 256.2 L1492.9 256.6 L1495.4 255.6 L1496.7 256.1 L1500.6 262.0 L1503.0 265.4 L1505.2 270.0 L1507.4 272.8 L1510.0 276.1 L1512.9 283.2 L1515.0 284.4 L1517.3 290.0 L1520.0 293.3 L1521.8 295.4 L1524.1 292.5 L1526.2 292.6 L1529.0 291.2 L1531.9 292.2 L1533.3 290.0 L1536.0 291.9 L1538.1 292.5 L1541.1 294.6 L1543.9 294.0 L1545.9 295.5 L1548.0 296.9 L1550.0 296.3 L1553.0 294.7 L1555.1 294.0 L1557.7 291.4 L1560.0 291.7 L1561.7 288.7 L1563.0 288.0 L1564.0 250.7 L1565.2 253.2 L1567.9 249.5 L1569.8 251.6 L1572.6 252.8 L1574.7 256.3 L1577.1 254.3 L1580.0 253.6 L1581.4 254.8 L1583.8 262.9 L1586.2 264.4 L1588.4 268.1 L1591.1 269.8 L1593.3 270.9 L1595.4 275.9 L1597.5 279.2 L1599.8 282.6 L1602.8 287.0 L1606.7 292.0 L1608.2 292.5 L1609.9 292.8 L1612.7 294.6 L1615.0 295.3 L1617.5 297.0 L1620.0 296.7 L1622.8 296.8 L1625.2 295.4 L1628.2 294.3 L1630.4 293.0 L1633.3 291.0 L1635.6 292.8 L1637.5 293.8 L1639.6 294.3 L1642.5 296.5 L1644.3 295.8 L1647.2 297.9 L1650.0 298.9 L1651.3 298.4 L1652.3 251.5 L1654.2 255.5 L1657.1 252.9 L1660.0 254.6 L1661.9 253.2 L1664.3 257.2 L1666.7 253.7 L1669.2 257.4 L1671.3 259.1 L1673.2 262.5 L1675.7 267.0 L1678.6 270.8 L1680.0 270.7 L1682.4 277.3 L1685.2 278.9 L1688.1 284.8 L1690.7 286.5 L1692.4 289.5 L1695.1 293.3 L1696.7 294.4 L1698.2 294.2 L1701.3 291.3 L1703.3 289.6 L1704.0 289.6 L1705.0 250.9 L1708.7 253.4 L1710.7 252.1 L1713.3 253.2 L1716.3 254.7 L1719.0 257.5 L1720.9 256.1 L1723.3 255.0 L1726.0 257.8 L1727.9 263.8 L1730.5 266.1 L1732.7 269.1 L1734.7 270.4 L1736.7 272.9 L1739.0 274.5 L1740.8 281.3 L1743.0 282.4 L1744.8 286.4 L1746.7 288.1 L1749.1 291.2 L1751.8 291.1 L1754.8 293.1 L1756.7 293.4 L1760.0 294.9 L1761.1 294.3 L1763.6 294.2 L1766.0 295.0 L1769.1 295.1 L1771.3 294.2 L1773.0 295.2 L1775.7 292.3 L1777.6 293.5 L1780.0 292.2 L1782.6 293.1 L1785.6 292.8 L1788.1 294.4 L1790.7 294.0 L1792.7 295.0 L1795.2 294.8 L1797.2 295.2 L1800.0 295.4 L1802.4 295.5 L1804.3 294.9 L1806.3 296.3 L1808.5 294.4 L1811.3 294.1 L1813.2 293.6 L1815.9 293.8 L1818.5 293.6 L1820.0 292.6 L1823.0 293.8 L1824.8 295.2 L1826.7 293.6 L1829.2 294.8 L1831.2 294.3 L1834.2 295.0 L1836.5 294.9 L1838.7 294.9 L1840.0 295.2 L1841.5 295.5 L1843.3 295.5 L1844.3 248.7 L1845.9 252.7 L1847.7 254.6 L1849.6 256.5 L1852.7 260.7 L1855.3 263.5 L1856.7 264.8 L1859.2 266.4 L1862.2 272.9 L1864.9 272.2 L1867.7 276.7 L1869.6 279.5 L1872.2 281.2 L1873.3 281.8 L1876.4 285.6 L1878.6 289.6 L1881.1 294.9 L1883.3 297.7 L1885.6 300.9 L1886.7 301.7 L1890.3 306.0 L1892.9 309.3 L1895.0 311.5 L1895.7 311.3 L1896.7 251.8 L1898.1 251.7 L1901.0 258.0 L1903.4 256.1 L1906.7 260.0 L1908.4 262.1 L1911.2 261.0 L1913.4 262.4 L1915.2 264.9 L1917.0 266.1 L1920.0 263.4 L1920.0 368.6 L1917.0 369.1 L1915.2 369.1 L1913.4 369.9 L1911.2 370.8 L1908.4 372.8 L1906.7 374.3 L1903.4 376.9 L1901.0 376.0 L1898.1 382.6 L1896.7 383.8 L1895.7 324.2 L1895.0 324.2 L1892.9 326.4 L1890.3 329.0 L1886.7 333.6 L1885.6 334.1 L1883.3 337.8 L1881.1 340.6 L1878.6 346.1 L1876.4 349.1 L1873.3 353.3 L1872.2 351.9 L1869.6 355.9 L1867.7 355.4 L1864.9 359.7 L1862.2 362.8 L1859.2 365.2 L1856.7 369.4 L1855.3 371.2 L1852.7 370.5 L1849.6 375.2 L1847.7 376.1 L1845.9 381.1 L1844.3 384.7 L1843.3 339.9 L1841.5 338.2 L1840.0 340.0 L1838.7 340.3 L1836.5 340.3 L1834.2 339.8 L1831.2 340.6 L1829.2 340.4 L1826.7 340.7 L1824.8 340.6 L1823.0 341.9 L1820.0 342.3 L1818.5 341.4 L1815.9 340.7 L1813.2 341.2 L1811.3 339.6 L1808.5 339.9 L1806.3 339.7 L1804.3 340.5 L1802.4 338.8 L1800.0 340.6 L1797.2 339.7 L1795.2 340.7 L1792.7 340.4 L1790.7 341.7 L1788.1 341.3 L1785.6 342.9 L1782.6 342.1 L1780.0 343.9 L1777.6 342.7 L1775.7 342.0 L1773.0 342.3 L1771.3 342.3 L1769.1 340.6 L1766.0 341.2 L1763.6 339.5 L1761.1 340.7 L1760.0 340.5 L1756.7 341.8 L1754.8 342.8 L1751.8 343.6 L1749.1 345.3 L1746.7 347.3 L1744.8 349.7 L1743.0 353.0 L1740.8 354.8 L1739.0 358.6 L1736.7 363.4 L1734.7 363.3 L1732.7 364.0 L1730.5 369.6 L1727.9 369.3 L1726.0 375.5 L1723.3 379.6 L1720.9 378.6 L1719.0 378.7 L1716.3 380.0 L1713.3 380.8 L1710.7 380.9 L1708.7 380.3 L1705.0 381.3 L1704.0 344.4 L1703.3 345.3 L1701.3 343.1 L1698.2 341.0 L1696.7 340.1 L1695.1 342.3 L1692.4 344.0 L1690.7 348.5 L1688.1 349.3 L1685.2 354.4 L1682.4 356.5 L1680.0 361.9 L1678.6 363.9 L1675.7 367.0 L1673.2 369.5 L1671.3 373.4 L1669.2 373.1 L1666.7 378.8 L1664.3 379.0 L1661.9 380.6 L1660.0 380.1 L1657.1 381.0 L1654.2 381.7 L1652.3 384.6 L1651.3 336.6 L1650.0 337.4 L1647.2 336.6 L1644.3 338.8 L1642.5 339.2 L1639.6 340.6 L1637.5 340.5 L1635.6 341.8 L1633.3 343.6 L1630.4 341.0 L1628.2 340.1 L1625.2 340.3 L1622.8 338.4 L1620.0 339.0 L1617.5 338.6 L1615.0 340.7 L1612.7 341.7 L1609.9 341.2 L1608.2 340.5 L1606.7 343.3 L1602.8 348.4 L1599.8 351.9 L1597.5 355.6 L1595.4 360.7 L1593.3 361.8 L1591.1 366.1 L1588.4 367.9 L1586.2 372.1 L1583.8 374.9 L1581.4 377.4 L1580.0 378.2 L1577.1 380.8 L1574.7 381.9 L1572.6 379.5 L1569.8 381.0 L1567.9 380.7 L1565.2 381.7 L1564.0 382.3 L1563.0 346.6 L1561.7 346.1 L1560.0 344.1 L1557.7 342.6 L1555.1 340.7 L1553.0 340.5 L1550.0 338.3 L1548.0 338.7 L1545.9 339.7 L1543.9 339.9 L1541.1 342.0 L1538.1 342.7 L1536.0 343.0 L1533.3 345.2 L1531.9 343.8 L1529.0 343.0 L1526.2 342.7 L1524.1 342.3 L1521.8 341.1 L1520.0 342.1 L1517.3 345.8 L1515.0 349.3 L1512.9 352.1 L1510.0 358.9 L1507.4 361.8 L1505.2 364.3 L1503.0 366.2 L1500.6 371.6 L1496.7 376.2 L1495.4 375.9 L1492.9 377.6 L1489.9 379.3 L1486.8 379.2 L1484.6 382.2 L1481.5 380.6 L1480.0 383.9 L1478.7 364.3 L1476.7 364.7 L1475.1 366.4 L1472.9 368.4 L1469.9 372.9 L1466.7 374.0 L1465.5 373.8 L1462.9 377.4 L1460.4 379.5 L1458.6 379.9 L1456.9 375.2 L1453.3 383.3 L1451.7 378.4 L1449.2 379.0 L1446.1 373.3 L1443.0 376.0 L1440.0 375.3 L1438.0 376.2 L1436.1 377.1 L1433.9 380.8 L1431.3 379.8 L1428.5 380.7 L1425.7 383.6 L1424.7 345.4 L1423.3 344.7 L1420.3 342.7 L1417.7 340.9 L1415.6 339.6 L1413.3 338.7 L1411.3 338.3 L1408.7 337.6 L1407.0 339.1 L1404.8 339.2 L1401.9 340.7 L1400.0 341.6 L1397.8 340.8 L1395.7 339.5 L1393.4 340.6 L1391.8 340.2 L1388.8 339.4 L1386.7 339.9 L1384.2 340.7 L1381.7 342.7 L1379.4 344.4 L1377.1 345.9 L1375.4 348.0 L1373.3 349.7 L1371.5 353.0 L1369.3 355.1 L1367.4 358.4 L1365.7 358.7 L1363.3 365.5 L1361.3 366.4 L1359.6 371.3 L1357.0 368.7 L1353.3 379.7 L1349.7 377.7 L1347.4 379.0 L1345.5 375.4 L1343.8 379.1 L1341.1 379.7 L1338.5 383.4 L1337.3 384.3 L1336.3 338.7 L1335.0 338.4 L1333.1 338.8 L1330.8 340.3 L1328.2 341.0 L1325.6 341.6 L1323.3 342.6 L1320.9 344.7 L1318.2 351.7 L1315.5 355.8 L1312.8 361.3 L1310.0 366.4 L1307.4 369.2 L1304.5 368.6 L1302.6 373.0 L1300.1 373.3 L1296.7 377.7 L1294.7 379.0 L1291.6 382.0 L1288.9 377.4 L1286.0 382.7 L1283.3 384.3 L1282.3 353.4 L1280.0 352.7 L1278.8 349.0 L1275.3 332.0 L1272.7 335.8 L1270.5 328.6 L1266.9 329.7 L1265.0 331.4 L1262.2 335.1 L1259.8 333.2 L1257.2 340.9 L1255.2 336.5 L1252.0 347.6 L1250.1 370.6 L1248.9 350.7 L1245.9 350.2 L1242.9 351.1 L1240.7 341.8 L1238.0 341.9 L1235.3 330.3 L1232.9 334.8 L1230.9 334.2 L1228.1 340.1 L1225.9 347.7 L1223.7 356.1 L1220.5 335.7 L1217.8 339.9 L1216.5 336.5 L1215.0 338.9 L1212.2 343.6 L1209.4 348.7 L1207.1 333.5 L1204.3 335.8 L1202.2 332.2 L1200.4 333.6 L1198.2 332.6 L1195.0 341.5 L1193.2 340.3 L1190.2 347.8 L1187.1 351.6 L1184.8 353.5 L1183.0 359.4 L1181.3 386.7 L1180.1 368.0 L1178.2 365.6 L1176.2 356.8 L1173.5 365.3 L1171.1 352.3 L1168.8 363.5 L1166.2 370.3 L1162.8 372.6 L1159.7 354.0 L1157.3 374.0 L1154.3 377.7 L1152.3 375.4 L1150.4 378.1 L1148.1 373.8 L1146.3 374.3 L1144.7 388.3 L1143.5 337.1 L1141.1 336.4 L1137.8 346.7 L1136.3 356.4 L1135.1 347.4 L1132.7 340.6 L1130.4 345.4 L1128.0 350.2 L1125.5 359.5 L1123.2 355.6 L1121.5 359.4 L1118.3 370.7 L1116.9 372.3 L1114.0 374.1 L1112.3 384.2 L1109.4 380.2 L1107.2 370.8 L1104.7 369.1 L1101.6 375.8 L1099.9 376.4 L1097.9 372.7 L1094.8 376.9 L1093.2 388.1 L1092.0 329.5 L1089.6 329.9 L1088.5 339.1 L1086.0 362.2 L1084.4 349.7 L1082.3 344.8 L1080.0 334.2 L1076.8 345.6 L1075.2 352.3 L1071.6 343.9 L1069.1 339.9 L1066.9 331.0 L1065.6 334.2 L1062.0 335.8 L1059.6 357.5 L1057.4 341.3 L1053.6 331.6 L1051.8 336.9 L1050.0 340.0 L1046.5 353.7 L1044.7 353.1 L1043.6 352.1 L1041.7 379.2 L1040.5 361.4 L1039.3 361.7 L1037.3 351.5 L1034.3 370.3 L1032.1 375.1 L1029.6 374.5 L1026.5 367.1 L1024.6 367.8 L1022.5 372.3 L1021.1 368.6 L1018.6 353.0 L1016.4 371.7 L1012.9 378.0 L1009.0 379.8 L1006.3 355.5 L1004.5 388.2 L1003.3 346.3 L1000.9 344.3 L999.7 332.1 L997.0 335.9 L993.8 331.6 L992.5 331.1 L990.1 327.2 L986.6 329.8 L985.1 333.9 L983.0 344.2 L980.6 355.2 L978.6 351.9 L976.1 341.0 L972.9 354.3 L971.0 384.3 L969.3 348.8 L966.2 337.9 L964.1 345.7 L962.6 345.7 L961.1 344.5 L958.0 338.7 L955.4 343.6 L952.3 336.6 L950.3 347.1 L947.7 350.3 L946.5 360.4 L944.6 380.1 L943.4 368.3 L942.2 366.6 L940.1 367.2 L938.6 367.3 L937.1 367.1 L934.0 357.5 L932.1 365.7 L930.1 356.8 L926.7 374.7 L925.5 359.3 L923.6 375.3 L921.0 380.1 L919.5 386.7 L916.3 358.8 L914.4 373.3 L911.6 366.9 L909.9 374.4 L908.6 377.7 L906.5 375.8 L904.5 381.1 L902.8 382.3 L901.5 386.1 L900.3 378.6 L897.9 371.7 L895.8 382.6 L893.1 383.6 L891.6 377.0 L888.7 358.3 L885.9 371.4 L883.0 368.1 L880.7 365.9 L878.9 370.6 L875.9 367.9 L874.0 373.3 L870.2 376.6 L867.3 356.9 L864.6 383.7 L863.4 386.4 L862.0 345.3Z" fill="#e9c682"/><path d="M374.0 486.8 L375.6 484.0 L376.5 480.1 L377.2 417.5 L379.0 419.4 L380.2 450.0 L382.0 459.0 L383.4 469.1 L385.0 470.6 L386.2 478.8 L388.0 477.4 L389.1 475.1 L391.0 466.3 L392.3 462.7 L393.0 459.8 L394.2 466.5 L395.0 449.6 L397.5 445.4 L398.7 452.7 L399.5 453.3 L401.0 464.1 L403.0 478.6 L405.0 480.0 L406.2 483.9 L407.0 484.1 L407.0 490.9 L406.2 490.9 L405.0 495.0 L403.0 498.0 L401.0 500.5 L399.5 511.8 L398.7 514.1 L397.5 522.7 L395.0 526.3 L394.2 519.5 L393.0 532.5 L392.3 516.3 L391.0 517.8 L389.1 506.9 L388.0 500.5 L386.2 502.4 L385.0 508.6 L383.4 507.7 L382.0 513.1 L380.2 521.0 L379.0 557.0 L377.2 555.9 L376.5 496.3 L375.6 493.1 L374.0 489.2Z" fill="#ef9d76"/><path d="M511.0 486.0 L512.5 485.1 L514.0 480.3 L516.5 448.5 L517.5 426.8 L519.0 443.5 L521.0 453.8 L523.2 451.0 L524.0 447.8 L524.8 449.6 L526.0 449.5 L528.0 463.6 L529.0 469.0 L530.1 474.1 L531.0 476.3 L531.9 471.9 L533.2 459.7 L534.1 417.1 L536.6 419.5 L537.6 439.6 L539.0 456.6 L540.2 469.0 L542.0 469.6 L543.0 477.6 L544.0 476.3 L545.0 477.2 L546.7 480.6 L548.0 483.1 L549.2 484.0 L550.2 485.9 L551.0 485.9 L551.7 486.8 L553.1 486.2 L555.0 486.5 L556.5 486.4 L558.1 486.8 L559.0 486.5 L559.0 489.5 L558.1 489.2 L556.5 489.5 L555.0 489.3 L553.1 489.7 L551.7 489.9 L551.0 490.0 L550.2 490.0 L549.2 491.9 L548.0 493.0 L546.7 496.1 L545.0 500.5 L544.0 502.3 L543.0 500.7 L542.0 506.5 L540.2 509.2 L539.0 519.1 L537.6 537.1 L536.6 559.5 L534.1 559.5 L533.2 515.6 L531.9 504.4 L531.0 500.3 L530.1 498.1 L529.0 508.0 L528.0 515.2 L526.0 520.7 L524.8 516.3 L524.0 527.1 L523.2 509.6 L521.0 522.5 L519.0 530.1 L517.5 548.4 L516.5 529.8 L514.0 496.2 L512.5 491.2 L511.0 490.1Z" fill="#ef9d76"/><path d="M608.4 486.5 L609.9 486.6 L611.5 486.6 L613.2 486.8 L613.9 486.5 L615.9 478.1 L616.8 474.3 L618.1 467.0 L620.4 448.6 L621.5 455.1 L623.1 461.0 L624.4 464.1 L626.3 457.5 L627.5 452.3 L629.0 440.4 L629.7 440.3 L630.9 418.0 L632.2 436.3 L633.1 442.9 L634.4 445.4 L636.0 444.3 L637.7 445.0 L638.9 432.0 L640.4 420.5 L641.9 429.7 L643.3 453.7 L644.9 437.6 L646.3 449.5 L647.8 452.0 L649.0 469.5 L650.4 466.3 L652.8 479.3 L653.9 477.7 L655.4 483.0 L656.4 486.0 L656.4 490.0 L655.4 492.3 L653.9 496.3 L652.8 497.2 L650.4 506.6 L649.0 505.0 L647.8 518.0 L646.3 523.5 L644.9 535.4 L643.3 517.5 L641.9 540.6 L640.4 543.5 L638.9 539.0 L637.7 522.5 L636.0 529.7 L634.4 529.5 L633.1 532.6 L632.2 538.7 L630.9 554.7 L629.7 538.6 L629.0 532.9 L627.5 528.5 L626.3 520.3 L624.4 517.3 L623.1 519.1 L621.5 518.0 L620.4 535.2 L618.1 510.8 L616.8 504.8 L615.9 498.0 L613.9 489.5 L613.2 489.2 L611.5 489.3 L609.9 489.2 L608.4 489.4Z" fill="#ef9d76"/><path d="M735.4 486.6 L736.7 486.6 L738.3 486.4 L740.0 486.8 L741.8 486.6 L743.0 486.6 L744.3 486.5 L745.5 486.5 L746.7 486.5 L748.5 486.7 L749.6 486.6 L751.1 486.5 L752.4 486.5 L753.7 486.6 L755.1 486.6 L756.9 486.7 L758.4 486.5 L759.6 478.9 L760.4 468.5 L761.4 446.6 L762.1 450.8 L763.9 454.9 L765.0 455.1 L765.7 462.3 L767.5 459.3 L769.4 461.5 L771.0 463.0 L772.9 473.5 L774.4 466.4 L775.9 469.8 L777.8 465.6 L779.2 464.4 L781.0 461.5 L781.9 457.6 L784.0 467.7 L785.4 468.4 L786.8 468.2 L788.1 471.2 L789.4 464.2 L790.2 418.5 L791.1 416.5 L793.0 417.4 L793.8 458.5 L795.0 459.0 L796.4 465.1 L798.0 466.3 L799.7 465.5 L800.9 465.6 L802.4 465.2 L804.0 472.5 L805.2 471.1 L806.4 477.4 L808.1 474.4 L809.6 478.3 L809.6 498.0 L808.1 500.7 L806.4 503.7 L805.2 505.8 L804.0 503.3 L802.4 514.0 L800.9 505.1 L799.7 513.4 L798.0 504.7 L796.4 512.2 L795.0 515.8 L793.8 519.3 L793.0 538.4 L791.1 539.2 L790.2 542.4 L789.4 514.3 L788.1 514.3 L786.8 512.6 L785.4 515.2 L784.0 515.5 L781.9 519.0 L781.0 514.8 L779.2 508.5 L777.8 516.2 L775.9 514.9 L774.4 517.1 L772.9 505.2 L771.0 518.2 L769.4 519.6 L767.5 519.2 L765.7 514.5 L765.0 520.9 L763.9 519.8 L762.1 524.4 L761.4 526.4 L760.4 508.4 L759.6 499.6 L758.4 489.5 L756.9 489.2 L755.1 489.4 L753.7 489.2 L752.4 489.4 L751.1 489.2 L749.6 489.3 L748.5 489.2 L746.7 489.4 L745.5 489.2 L744.3 489.3 L743.0 489.2 L741.8 489.3 L740.0 489.2 L738.3 489.4 L736.7 489.4 L735.4 489.5Z" fill="#ef9d76"/><path d="M809.6 478.0 L810.7 480.3 L811.6 475.6 L812.4 469.1 L814.6 449.2 L816.0 460.0 L817.1 456.7 L818.5 451.5 L819.6 445.3 L821.9 461.3 L823.2 459.3 L824.6 464.5 L826.3 462.6 L828.0 462.4 L829.2 459.2 L830.6 456.7 L832.3 459.9 L833.7 468.6 L835.0 464.7 L836.2 465.8 L838.4 468.4 L839.5 464.6 L840.6 463.9 L841.4 417.9 L842.7 420.2 L844.2 419.0 L845.0 456.7 L846.7 464.1 L848.1 458.6 L849.6 457.9 L850.4 460.4 L852.4 468.7 L853.8 459.3 L855.7 457.2 L857.2 458.6 L858.6 459.5 L860.6 464.2 L861.6 468.1 L863.4 476.9 L864.6 478.6 L866.6 482.3 L867.8 484.1 L869.6 486.0 L869.6 489.9 L867.8 491.5 L866.6 493.6 L864.6 497.0 L863.4 502.7 L861.6 509.7 L860.6 512.0 L858.6 526.8 L857.2 523.0 L855.7 519.5 L853.8 524.9 L852.4 511.5 L850.4 524.5 L849.6 523.5 L848.1 517.3 L846.7 520.8 L845.0 520.5 L844.2 552.9 L842.7 552.1 L841.4 551.5 L840.6 513.7 L839.5 511.3 L838.4 511.0 L836.2 511.4 L835.0 510.8 L833.7 510.5 L832.3 516.7 L830.6 520.8 L829.2 514.1 L828.0 516.4 L826.3 514.5 L824.6 515.3 L823.2 511.8 L821.9 504.3 L819.6 515.6 L818.5 508.2 L817.1 516.7 L816.0 514.0 L814.6 524.9 L812.4 504.0 L811.6 501.3 L810.7 498.0 L809.6 497.7Z" fill="#ef9d76"/><path d="M893.4 473.5 L894.9 466.5 L896.4 459.2 L898.1 454.8 L899.9 436.8 L901.2 452.8 L901.9 458.2 L904.4 466.1 L905.8 462.1 L907.4 457.5 L909.6 468.2 L910.8 478.0 L912.4 476.7 L913.9 476.4 L915.2 468.0 L916.0 463.8 L916.7 416.5 L917.7 418.2 L919.2 418.8 L920.2 442.2 L921.4 446.2 L923.1 453.5 L924.4 459.6 L926.4 468.8 L927.8 472.5 L929.0 475.8 L930.9 476.6 L931.9 473.7 L933.1 463.9 L933.9 459.0 L934.6 455.4 L935.4 447.9 L937.5 461.2 L938.4 465.0 L939.4 466.9 L941.1 475.3 L942.5 477.8 L943.4 478.9 L944.3 480.8 L946.3 483.8 L948.4 486.6 L948.4 489.5 L946.3 491.5 L944.3 493.7 L943.4 495.0 L942.5 496.7 L941.1 495.2 L939.4 501.9 L938.4 505.2 L937.5 508.2 L935.4 523.6 L934.6 520.6 L933.9 516.6 L933.1 508.3 L931.9 500.4 L930.9 497.1 L929.0 497.3 L927.8 503.5 L926.4 506.7 L924.4 514.3 L923.1 524.5 L921.4 534.2 L920.2 537.1 L919.2 559.5 L917.7 540.0 L916.7 559.5 L916.0 511.5 L915.2 506.5 L913.9 501.4 L912.4 497.1 L910.8 503.4 L909.6 507.5 L907.4 517.1 L905.8 514.9 L904.4 513.0 L901.9 522.5 L901.2 525.8 L899.9 542.2 L898.1 515.0 L896.4 514.7 L894.9 510.0 L893.4 503.7Z" fill="#ef9d76"/><path d="M998.4 486.5 L999.8 486.6 L1001.3 486.5 L1002.4 486.6 L1003.9 457.4 L1004.9 437.0 L1006.4 444.2 L1007.2 456.6 L1008.4 455.9 L1010.4 474.0 L1011.2 478.9 L1012.4 485.1 L1013.8 485.6 L1015.0 486.5 L1016.7 485.9 L1018.1 486.1 L1019.8 474.7 L1020.9 468.6 L1021.7 458.3 L1022.8 434.2 L1024.4 444.4 L1026.4 460.9 L1028.4 474.4 L1029.4 478.6 L1030.4 483.1 L1032.4 485.5 L1034.0 486.5 L1034.0 489.5 L1032.4 490.5 L1030.4 493.0 L1029.4 496.5 L1028.4 501.9 L1026.4 516.5 L1024.4 529.5 L1022.8 540.7 L1021.7 519.4 L1020.9 508.3 L1019.8 500.3 L1018.1 490.0 L1016.7 490.2 L1015.0 489.8 L1013.8 490.4 L1012.4 490.9 L1011.2 499.0 L1010.4 506.8 L1008.4 531.7 L1007.2 531.5 L1006.4 534.5 L1004.9 542.2 L1003.9 518.7 L1002.4 489.5 L1001.3 489.3 L999.8 489.2 L998.4 489.5Z" fill="#ef9d76"/><path d="M395.0 656.5 L396.5 656.8 L398.3 656.7 L400.2 656.8 L401.5 656.6 L403.3 656.8 L404.9 656.5 L406.6 656.6 L408.0 656.5 L408.8 654.4 L410.3 649.9 L411.2 586.5 L411.9 590.7 L413.2 590.7 L414.5 590.2 L415.6 637.3 L417.5 641.7 L420.0 630.7 L421.2 627.5 L422.0 623.9 L423.1 629.8 L424.2 627.7 L426.0 623.7 L427.8 630.5 L429.7 621.1 L430.7 627.0 L432.3 625.0 L433.0 626.0 L434.2 630.7 L435.0 629.3 L437.0 636.7 L438.0 639.8 L438.8 642.4 L440.0 647.3 L441.7 650.7 L442.9 652.5 L444.7 653.9 L446.2 655.3 L447.0 655.6 L448.2 655.9 L449.4 655.8 L451.1 656.1 L452.0 655.9 L452.0 660.1 L451.1 659.5 L449.4 660.1 L448.2 660.2 L447.0 660.6 L446.2 660.9 L444.7 662.2 L442.9 667.9 L441.7 670.5 L440.0 679.3 L438.8 678.9 L438.0 687.4 L437.0 686.4 L435.0 695.9 L434.2 701.0 L433.0 702.2 L432.3 701.0 L430.7 695.5 L429.7 706.0 L427.8 684.5 L426.0 693.4 L424.2 693.5 L423.1 694.2 L422.0 700.8 L421.2 693.8 L420.0 692.8 L417.5 675.2 L415.6 678.3 L414.5 729.5 L413.2 706.6 L411.9 724.6 L411.2 728.2 L410.3 665.9 L408.8 661.9 L408.0 659.5 L406.6 659.5 L404.9 659.5 L403.3 659.5 L401.5 659.5 L400.2 659.2 L398.3 659.3 L396.5 659.3 L395.0 659.4Z" fill="#ef9d76"/><path d="M548.8 637.8 L549.8 628.6 L551.7 619.0 L552.5 610.4 L554.3 624.1 L555.7 639.9 L557.2 642.9 L558.7 643.4 L560.8 640.3 L562.8 629.5 L564.8 621.3 L565.7 630.1 L567.4 626.8 L569.4 630.6 L571.0 637.3 L572.9 635.8 L573.8 636.9 L575.4 640.1 L577.1 644.3 L578.8 647.4 L579.9 649.5 L581.6 650.9 L583.5 654.0 L585.2 655.4 L586.8 656.5 L587.8 656.5 L588.8 656.7 L590.8 656.8 L591.8 656.5 L591.8 659.5 L590.8 659.2 L588.8 659.4 L587.8 659.4 L586.8 659.5 L585.2 660.7 L583.5 662.2 L581.6 664.4 L579.9 669.7 L578.8 674.4 L577.1 678.1 L575.4 676.9 L573.8 689.9 L572.9 690.0 L571.0 690.5 L569.4 692.7 L567.4 689.6 L565.7 680.0 L564.8 691.2 L562.8 686.1 L560.8 682.3 L558.7 677.5 L557.2 674.3 L555.7 680.3 L554.3 696.4 L552.5 715.0 L551.7 700.0 L549.8 686.8 L548.8 678.1Z" fill="#ef9d76"/><path d="M637.0 656.5 L638.7 656.5 L640.4 656.5 L641.9 656.5 L643.4 656.5 L644.8 656.8 L646.8 656.7 L648.1 656.8 L649.3 656.7 L650.6 656.5 L652.0 656.5 L653.2 652.2 L654.0 647.9 L655.8 637.1 L657.0 633.7 L658.3 638.9 L659.5 624.6 L661.1 635.3 L662.3 639.2 L663.6 628.4 L664.4 599.4 L665.8 600.0 L666.8 628.0 L668.1 639.1 L669.8 642.5 L671.3 640.6 L672.4 637.9 L673.4 635.6 L674.2 599.7 L675.9 601.7 L676.9 600.2 L677.8 633.1 L678.9 635.5 L680.0 637.8 L682.1 640.6 L683.9 648.2 L684.8 644.6 L685.7 647.7 L687.6 652.9 L688.5 654.0 L690.4 653.7 L692.0 652.3 L692.8 586.8 L693.9 586.5 L695.8 589.5 L696.8 636.7 L698.1 638.6 L699.0 639.6 L700.9 632.9 L702.6 623.4 L703.4 627.2 L704.9 631.4 L706.0 627.0 L707.5 630.9 L709.0 630.3 L710.0 631.4 L712.3 636.5 L714.1 639.4 L715.8 643.7 L717.2 648.4 L718.3 647.3 L719.7 650.1 L721.0 650.2 L722.5 654.3 L724.0 655.0 L725.0 655.7 L726.3 655.9 L727.0 656.0 L727.0 660.0 L726.3 660.1 L725.0 660.1 L724.0 660.9 L722.5 662.8 L721.0 665.2 L719.7 666.4 L718.3 672.7 L717.2 673.3 L715.8 679.1 L714.1 671.9 L712.3 682.2 L710.0 691.5 L709.0 690.4 L707.5 685.1 L706.0 693.4 L704.9 684.3 L703.4 689.8 L702.6 695.0 L700.9 685.3 L699.0 682.2 L698.1 680.5 L696.8 682.3 L695.8 729.5 L693.9 705.1 L692.8 725.9 L692.0 663.7 L690.4 662.2 L688.5 662.2 L687.6 663.7 L685.7 667.0 L684.8 671.6 L683.9 670.6 L682.1 674.5 L680.0 679.1 L678.9 679.9 L677.8 683.1 L676.9 729.1 L675.9 712.1 L674.2 728.6 L673.4 679.5 L672.4 677.2 L671.3 674.3 L669.8 672.7 L668.1 681.6 L666.8 689.1 L665.8 710.9 L664.4 712.5 L663.6 688.3 L662.3 676.1 L661.1 674.2 L659.5 691.6 L658.3 682.0 L657.0 680.2 L655.8 679.0 L654.0 668.2 L653.2 663.7 L652.0 659.4 L650.6 659.2 L649.3 659.3 L648.1 659.2 L646.8 659.4 L644.8 659.2 L643.4 659.4 L641.9 659.2 L640.4 659.5 L638.7 659.5 L637.0 659.5Z" fill="#ef9d76"/><path d="M853.4 656.5 L854.4 656.1 L855.3 653.5 L856.4 649.9 L858.1 644.4 L860.5 647.3 L861.8 643.0 L863.4 647.8 L864.4 638.4 L865.3 644.4 L867.4 632.1 L868.7 636.7 L870.4 640.4 L871.3 641.8 L873.1 645.0 L874.4 644.0 L876.4 638.5 L877.7 640.1 L879.1 633.6 L880.4 632.5 L881.7 635.8 L883.4 636.0 L884.9 639.7 L886.2 635.6 L888.0 637.2 L889.9 633.2 L891.2 638.8 L892.4 637.8 L893.9 640.8 L895.4 643.2 L896.1 647.1 L897.4 649.2 L899.4 654.2 L900.3 655.0 L902.2 656.5 L902.2 659.4 L900.3 662.2 L899.4 666.7 L897.4 673.7 L896.1 676.6 L895.4 681.4 L893.9 684.9 L892.4 685.6 L891.2 688.6 L889.9 689.7 L888.0 689.4 L886.2 691.1 L884.9 688.6 L883.4 688.7 L881.7 684.1 L880.4 685.6 L879.1 685.0 L877.7 675.4 L876.4 684.5 L874.4 682.2 L873.1 681.1 L871.3 681.8 L870.4 684.7 L868.7 680.6 L867.4 693.4 L865.3 682.8 L864.4 688.7 L863.4 677.2 L861.8 681.8 L860.5 670.4 L858.1 675.6 L856.4 668.1 L855.3 663.5 L854.4 660.0 L853.4 659.6Z" fill="#ef9d76"/><path d="M935.4 656.5 L936.6 656.8 L938.3 656.6 L939.9 656.7 L941.4 656.6 L942.6 656.8 L944.4 656.7 L946.2 656.6 L948.1 656.5 L949.2 652.2 L950.7 638.9 L952.1 617.0 L952.8 586.8 L954.4 586.5 L955.5 587.5 L956.4 609.8 L957.3 615.5 L958.4 612.4 L959.8 621.4 L960.9 636.2 L963.1 631.0 L964.6 634.1 L966.4 625.5 L967.8 618.8 L969.1 625.0 L970.4 627.4 L972.0 629.3 L973.4 630.3 L975.0 633.1 L976.4 640.2 L977.6 631.9 L979.1 629.3 L980.5 637.9 L981.9 640.8 L983.8 652.3 L986.0 648.0 L987.2 612.2 L988.3 611.9 L989.8 610.6 L990.8 629.2 L992.2 633.1 L993.7 644.9 L995.9 652.5 L996.7 653.4 L998.6 654.8 L1000.4 655.7 L1001.4 656.0 L1002.2 653.9 L1003.6 649.9 L1004.8 606.3 L1007.3 606.6 L1008.4 628.8 L1010.0 643.3 L1011.6 649.2 L1012.8 651.0 L1013.8 654.2 L1014.7 654.8 L1016.6 655.1 L1018.0 655.5 L1019.4 656.1 L1021.0 649.8 L1022.0 592.3 L1024.7 587.3 L1025.8 627.1 L1026.9 638.4 L1027.8 644.2 L1029.5 651.3 L1030.4 654.1 L1031.4 654.8 L1033.4 656.4 L1033.4 659.5 L1031.4 661.0 L1030.4 661.8 L1029.5 665.9 L1027.8 671.8 L1026.9 676.7 L1025.8 688.3 L1024.7 729.5 L1022.0 729.5 L1021.0 666.3 L1019.4 660.0 L1018.0 660.6 L1016.6 660.8 L1014.7 661.6 L1013.8 662.0 L1012.8 664.1 L1011.6 668.0 L1010.0 672.5 L1008.4 683.9 L1007.3 705.5 L1004.8 706.6 L1003.6 665.8 L1002.2 660.4 L1001.4 660.0 L1000.4 660.4 L998.6 661.8 L996.7 662.1 L995.9 663.8 L993.7 670.2 L992.2 682.7 L990.8 687.9 L989.8 720.9 L988.3 705.3 L987.2 720.6 L986.0 667.9 L983.8 663.3 L981.9 674.5 L980.5 680.0 L979.1 686.9 L977.6 682.5 L976.4 685.4 L975.0 685.3 L973.4 685.5 L972.0 686.5 L970.4 692.9 L969.1 692.7 L967.8 699.0 L966.4 695.7 L964.6 691.8 L963.1 691.2 L960.9 691.7 L959.8 697.0 L958.4 700.4 L957.3 703.7 L956.4 703.0 L955.5 729.5 L954.4 727.0 L952.8 729.5 L952.1 697.9 L950.7 677.7 L949.2 666.7 L948.1 659.5 L946.2 659.4 L944.4 659.4 L942.6 659.2 L941.4 659.5 L939.9 659.5 L938.3 659.3 L936.6 659.2 L935.4 659.5Z" fill="#ef9d76"/><path d="M478.7 807.6 L480.1 788.8 L481.7 768.2 L482.7 761.2 L484.2 773.0 L485.7 786.3 L487.4 780.0 L489.2 775.1 L490.7 763.9 L492.2 786.2 L493.3 798.5 L494.1 806.4 L495.2 802.2 L496.2 797.4 L498.2 783.2 L500.2 789.9 L501.7 792.1 L502.7 781.7 L503.6 793.4 L504.7 797.1 L506.3 807.0 L508.2 812.3 L510.4 814.8 L511.1 818.3 L512.3 821.0 L514.5 825.1 L515.7 824.5 L516.7 824.1 L517.6 825.1 L519.0 826.5 L519.0 829.4 L517.6 831.0 L516.7 831.8 L515.7 831.2 L514.5 831.0 L512.3 835.4 L511.1 839.3 L510.4 841.0 L508.2 845.2 L506.3 851.0 L504.7 856.5 L503.6 857.1 L502.7 867.2 L501.7 864.5 L500.2 870.4 L498.2 878.8 L496.2 864.3 L495.2 861.2 L494.1 853.6 L493.3 858.7 L492.2 868.0 L490.7 884.6 L489.2 880.1 L487.4 878.5 L485.7 871.2 L484.2 886.1 L482.7 899.5 L481.7 894.1 L480.1 869.1 L478.7 848.2Z" fill="#ef9d76"/><path d="M868.0 826.6 L869.9 826.8 L871.8 826.5 L873.6 826.6 L874.8 826.7 L876.3 826.8 L877.8 826.6 L879.3 826.8 L880.5 826.6 L881.5 826.5 L883.0 819.7 L884.2 806.2 L885.5 818.2 L886.9 822.4 L888.3 819.8 L889.7 822.3 L891.2 820.8 L892.0 821.3 L892.7 820.5 L895.0 818.4 L895.8 818.6 L896.9 821.0 L899.0 818.3 L900.2 817.9 L901.8 817.4 L903.0 816.2 L905.4 817.5 L907.0 818.9 L908.5 820.2 L909.9 821.4 L911.0 821.4 L913.1 822.2 L914.4 822.8 L916.0 822.8 L917.0 823.7 L918.7 824.2 L920.3 824.8 L922.0 825.4 L923.4 825.9 L924.6 826.6 L925.8 825.9 L927.1 826.4 L928.9 826.5 L930.0 826.5 L930.0 829.5 L928.9 829.5 L927.1 829.4 L925.8 830.0 L924.6 830.2 L923.4 830.4 L922.0 830.6 L920.3 831.0 L918.7 830.7 L917.0 832.6 L916.0 832.9 L914.4 833.7 L913.1 834.6 L911.0 835.8 L909.9 835.8 L908.5 837.3 L907.0 837.8 L905.4 838.0 L903.0 842.0 L901.8 840.4 L900.2 838.2 L899.0 840.2 L896.9 839.2 L895.8 837.6 L895.0 838.0 L892.7 836.4 L892.0 837.1 L891.2 836.6 L889.7 833.9 L888.3 836.9 L886.9 837.3 L885.5 839.9 L884.2 850.2 L883.0 836.4 L881.5 829.4 L880.5 829.3 L879.3 829.2 L877.8 829.5 L876.3 829.2 L874.8 829.5 L873.6 829.5 L871.8 829.5 L869.9 829.2 L868.0 829.5Z" fill="#ef9d76"/><path d="M327.5 996.4 L329.2 996.8 L331.0 996.5 L332.2 996.8 L334.2 996.7 L335.4 996.6 L337.0 996.7 L338.0 996.5 L340.0 983.2 L341.5 938.3 L342.5 926.5 L344.5 928.6 L345.8 958.8 L347.1 967.6 L348.5 952.1 L350.1 929.6 L352.0 944.8 L354.5 954.9 L356.0 954.0 L357.0 950.3 L357.7 945.2 L359.2 938.3 L360.5 942.0 L361.5 940.9 L362.4 941.3 L363.5 928.8 L365.5 954.7 L367.1 968.4 L368.3 973.4 L369.6 986.0 L370.9 981.8 L372.5 985.8 L373.9 988.0 L375.5 991.1 L377.6 994.3 L378.5 994.9 L380.8 991.5 L381.5 989.6 L383.0 993.1 L385.0 996.5 L385.0 999.5 L383.0 1002.2 L381.5 1004.0 L380.8 1002.8 L378.5 1000.9 L377.6 1002.3 L375.5 1006.1 L373.9 1009.4 L372.5 1011.5 L370.9 1013.8 L369.6 1017.9 L368.3 1024.3 L367.1 1020.5 L365.5 1045.1 L363.5 1057.0 L362.4 1052.3 L361.5 1052.6 L360.5 1052.7 L359.2 1055.6 L357.7 1048.0 L357.0 1054.8 L356.0 1045.5 L354.5 1047.4 L352.0 1049.5 L350.1 1057.3 L348.5 1047.6 L347.1 1036.1 L345.8 1042.3 L344.5 1068.3 L342.5 1069.5 L341.5 1059.6 L340.0 1012.3 L338.0 999.5 L337.0 999.5 L335.4 999.2 L334.2 999.4 L332.2 999.5 L331.0 999.5 L329.2 999.2 L327.5 999.5Z" fill="#ef9d76"/><path d="M546.0 996.5 L548.0 995.1 L549.3 992.6 L550.5 989.9 L552.6 987.4 L554.2 991.6 L555.5 988.8 L556.9 991.2 L558.7 989.9 L560.1 991.7 L561.4 991.5 L562.8 993.6 L564.7 992.8 L565.6 993.3 L567.2 993.5 L569.0 994.3 L570.5 994.4 L572.3 995.3 L573.8 994.8 L575.7 995.1 L576.9 995.3 L578.3 995.3 L579.8 995.5 L580.9 995.1 L582.8 995.5 L584.5 995.7 L586.0 995.5 L587.2 995.6 L588.6 995.6 L589.8 996.3 L591.0 996.1 L592.5 996.6 L593.6 995.6 L595.1 995.8 L596.7 996.1 L597.8 996.2 L599.7 996.0 L600.7 996.0 L601.9 996.0 L603.7 996.4 L605.0 996.2 L607.0 996.1 L607.0 1000.1 L605.0 1000.0 L603.7 999.2 L601.9 1000.0 L600.7 999.3 L599.7 1000.2 L597.8 1000.1 L596.7 1000.1 L595.1 999.3 L593.6 1000.2 L592.5 1000.4 L591.0 1000.1 L589.8 999.6 L588.6 1000.5 L587.2 1000.4 L586.0 1000.4 L584.5 1000.1 L582.8 1000.6 L580.9 1000.7 L579.8 1000.8 L578.3 1000.0 L576.9 1000.8 L575.7 1001.0 L573.8 1001.4 L572.3 1001.5 L570.5 1001.8 L569.0 1000.4 L567.2 1001.7 L565.6 1002.1 L564.7 1003.0 L562.8 1003.7 L561.4 1004.0 L560.1 1002.4 L558.7 1006.0 L556.9 1005.3 L555.5 1008.1 L554.2 1005.8 L552.6 1011.2 L550.5 1006.9 L549.3 1003.4 L548.0 1000.9 L546.0 999.5Z" fill="#ef9d76"/><path d="M820.0 996.5 L821.7 996.8 L823.0 996.6 L824.2 996.8 L825.8 996.7 L826.9 996.6 L829.0 996.5 L831.0 990.4 L832.2 930.6 L833.1 933.8 L834.6 938.1 L835.8 931.2 L837.0 957.5 L838.5 973.2 L840.5 980.4 L841.5 983.7 L842.6 985.8 L843.3 983.6 L845.5 976.2 L847.0 978.2 L847.8 958.4 L848.6 926.9 L850.0 939.5 L851.2 929.3 L852.0 926.5 L853.0 957.0 L854.0 970.4 L854.9 976.1 L855.8 980.3 L857.7 986.4 L859.0 989.0 L861.0 986.3 L861.9 988.2 L863.8 993.1 L865.2 993.9 L866.7 995.7 L868.3 996.1 L868.3 1000.0 L866.7 1000.8 L865.2 1002.0 L863.8 1003.2 L861.9 1005.7 L861.0 1008.3 L859.0 1010.4 L857.7 1012.4 L855.8 1018.7 L854.9 1023.2 L854.0 1030.3 L853.0 1036.6 L852.0 1069.5 L851.2 1062.3 L850.0 1068.0 L848.6 1069.5 L847.8 1049.5 L847.0 1033.5 L845.5 1026.8 L843.3 1011.4 L842.6 1015.9 L841.5 1018.5 L840.5 1021.8 L838.5 1022.8 L837.0 1039.3 L835.8 1069.5 L834.6 1063.2 L833.1 1044.6 L832.2 1069.5 L831.0 1005.7 L829.0 999.6 L826.9 999.2 L825.8 999.3 L824.2 999.2 L823.0 999.4 L821.7 999.3 L820.0 999.5Z" fill="#ef9d76"/></svg>
<div class="b ch" style="left:585.5px;top:219.5px;width:174.0px;height:25px;background:linear-gradient(#a0712f,#94672b)"><svg class="ca" viewBox="0 0 12 10" width="12" height="10"><path d="M0.5 1 L5.5 5 L0.5 9 Z M5 1.8 L9.2 5 L5 8.2Z M8.5 4.3 H12 V5.7 H8.5Z" fill="#f5e0a8"/></svg><span class="t" style="left:20.3px;top:2.2px;font-size:21px;line-height:21px;font-weight:bold;color:#f0dcb8;transform:scaleX(0.674)">BEAT</span></div>
<div class="b ch" style="left:862.0px;top:219.5px;width:1063.0px;height:25px;background:linear-gradient(#a0712f,#94672b)"><svg class="ca" viewBox="0 0 12 10" width="12" height="10"><path d="M0.5 1 L5.5 5 L0.5 9 Z M5 1.8 L9.2 5 L5 8.2Z M8.5 4.3 H12 V5.7 H8.5Z" fill="#f5e0a8"/></svg><span class="t" style="left:20.3px;top:2.2px;font-size:21px;line-height:21px;font-weight:bold;color:#f0dcb8;transform:scaleX(0.674)">BEAT</span></div>
<div class="b ch" style="left:374.0px;top:389.5px;width:33.0px;height:25px;background:linear-gradient(#a24a23,#913f1c)"><svg class="ca" viewBox="0 0 12 10" width="12" height="10"><path d="M0.5 1 L5.5 5 L0.5 9 Z M5 1.8 L9.2 5 L5 8.2Z M8.5 4.3 H12 V5.7 H8.5Z" fill="#f7d3bf"/></svg></div>
<div class="b ch" style="left:511.0px;top:389.5px;width:48.0px;height:25px;background:linear-gradient(#a24a23,#913f1c)"><svg class="ca" viewBox="0 0 12 10" width="12" height="10"><path d="M0.5 1 L5.5 5 L0.5 9 Z M5 1.8 L9.2 5 L5 8.2Z M8.5 4.3 H12 V5.7 H8.5Z" fill="#f7d3bf"/></svg></div>
<div class="b ch" style="left:608.4px;top:389.5px;width:48.6px;height:25px;background:linear-gradient(#a24a23,#913f1c)"><svg class="ca" viewBox="0 0 12 10" width="12" height="10"><path d="M0.5 1 L5.5 5 L0.5 9 Z M5 1.8 L9.2 5 L5 8.2Z M8.5 4.3 H12 V5.7 H8.5Z" fill="#f7d3bf"/></svg></div>
<div class="b ch" style="left:735.4px;top:389.5px;width:74.2px;height:25px;background:linear-gradient(#a24a23,#913f1c)"><svg class="ca" viewBox="0 0 12 10" width="12" height="10"><path d="M0.5 1 L5.5 5 L0.5 9 Z M5 1.8 L9.2 5 L5 8.2Z M8.5 4.3 H12 V5.7 H8.5Z" fill="#f7d3bf"/></svg><span class="t" style="left:20.3px;top:2.3px;font-size:21px;line-height:21px;-webkit-text-stroke:0.3px;color:#edc0a6;transform:scaleX(0.974)">veti..)</span></div>
<div class="b ch" style="left:809.6px;top:389.5px;width:60.4px;height:25px;background:linear-gradient(#a24a23,#913f1c)"><svg class="ca" viewBox="0 0 12 10" width="12" height="10"><path d="M0.5 1 L5.5 5 L0.5 9 Z M5 1.8 L9.2 5 L5 8.2Z M8.5 4.3 H12 V5.7 H8.5Z" fill="#f7d3bf"/></svg><span class="t" style="left:20.3px;top:2.3px;font-size:21px;line-height:21px;-webkit-text-stroke:0.3px;color:#edc0a6;transform:scaleX(0.882)">vet..</span></div>
<div class="b ch" style="left:893.4px;top:389.5px;width:55.6px;height:25px;background:linear-gradient(#a24a23,#913f1c)"><svg class="ca" viewBox="0 0 12 10" width="12" height="10"><path d="M0.5 1 L5.5 5 L0.5 9 Z M5 1.8 L9.2 5 L5 8.2Z M8.5 4.3 H12 V5.7 H8.5Z" fill="#f7d3bf"/></svg><span class="t" style="left:20.3px;top:2.3px;font-size:21px;line-height:21px;-webkit-text-stroke:0.3px;color:#c27a59;transform:scaleX(0.966)">ve..</span></div>
<div class="b ch" style="left:998.4px;top:389.5px;width:35.6px;height:25px;background:linear-gradient(#a24a23,#913f1c)"><svg class="ca" viewBox="0 0 12 10" width="12" height="10"><path d="M0.5 1 L5.5 5 L0.5 9 Z M5 1.8 L9.2 5 L5 8.2Z M8.5 4.3 H12 V5.7 H8.5Z" fill="#f7d3bf"/></svg></div>
<div class="b ch" style="left:395.0px;top:559.5px;width:57.2px;height:25px;background:linear-gradient(#a24a23,#913f1c)"><svg class="ca" viewBox="0 0 12 10" width="12" height="10"><path d="M0.5 1 L5.5 5 L0.5 9 Z M5 1.8 L9.2 5 L5 8.2Z M8.5 4.3 H12 V5.7 H8.5Z" fill="#f7d3bf"/></svg><span class="t" style="left:20.3px;top:2.3px;font-size:21px;line-height:21px;-webkit-text-stroke:0.3px;color:#edc0a6;transform:scaleX(0.882)">vet..</span></div>
<div class="b ch" style="left:548.8px;top:559.5px;width:43.2px;height:25px;background:linear-gradient(#a24a23,#913f1c)"><svg class="ca" viewBox="0 0 12 10" width="12" height="10"><path d="M0.5 1 L5.5 5 L0.5 9 Z M5 1.8 L9.2 5 L5 8.2Z M8.5 4.3 H12 V5.7 H8.5Z" fill="#f7d3bf"/></svg></div>
<div class="b ch" style="left:637.0px;top:559.5px;width:90.0px;height:25px;background:linear-gradient(#a24a23,#913f1c)"><svg class="ca" viewBox="0 0 12 10" width="12" height="10"><path d="M0.5 1 L5.5 5 L0.5 9 Z M5 1.8 L9.2 5 L5 8.2Z M8.5 4.3 H12 V5.7 H8.5Z" fill="#f7d3bf"/></svg><span class="t" style="left:20.3px;top:2.3px;font-size:21px;line-height:21px;-webkit-text-stroke:0.3px;color:#edc0a6;transform:scaleX(0.890)">vetin..o)</span></div>
<div class="b ch" style="left:853.4px;top:559.5px;width:48.8px;height:25px;background:linear-gradient(#a24a23,#913f1c)"><svg class="ca" viewBox="0 0 12 10" width="12" height="10"><path d="M0.5 1 L5.5 5 L0.5 9 Z M5 1.8 L9.2 5 L5 8.2Z M8.5 4.3 H12 V5.7 H8.5Z" fill="#f7d3bf"/></svg></div>
<div class="b ch" style="left:935.4px;top:559.5px;width:98.1px;height:25px;background:linear-gradient(#a24a23,#913f1c)"><svg class="ca" viewBox="0 0 12 10" width="12" height="10"><path d="M0.5 1 L5.5 5 L0.5 9 Z M5 1.8 L9.2 5 L5 8.2Z M8.5 4.3 H12 V5.7 H8.5Z" fill="#f7d3bf"/></svg><span class="t" style="left:20.3px;top:2.3px;font-size:21px;line-height:21px;-webkit-text-stroke:0.3px;color:#edc0a6;transform:scaleX(0.857)">vetin..no)</span></div>
<div class="b ch" style="left:478.7px;top:729.5px;width:40.3px;height:25px;background:linear-gradient(#a24a23,#913f1c)"><svg class="ca" viewBox="0 0 12 10" width="12" height="10"><path d="M0.5 1 L5.5 5 L0.5 9 Z M5 1.8 L9.2 5 L5 8.2Z M8.5 4.3 H12 V5.7 H8.5Z" fill="#f7d3bf"/></svg></div>
<div class="b ch" style="left:868.0px;top:729.5px;width:62.0px;height:25px;background:linear-gradient(#a24a23,#913f1c)"><svg class="ca" viewBox="0 0 12 10" width="12" height="10"><path d="M0.5 1 L5.5 5 L0.5 9 Z M5 1.8 L9.2 5 L5 8.2Z M8.5 4.3 H12 V5.7 H8.5Z" fill="#f7d3bf"/></svg><span class="t" style="left:20.3px;top:2.3px;font-size:21px;line-height:21px;-webkit-text-stroke:0.3px;color:#edc0a6;transform:scaleX(0.882)">vet..</span></div>
<div class="b ch" style="left:327.5px;top:899.5px;width:57.5px;height:25px;background:linear-gradient(#a24a23,#913f1c)"><svg class="ca" viewBox="0 0 12 10" width="12" height="10"><path d="M0.5 1 L5.5 5 L0.5 9 Z M5 1.8 L9.2 5 L5 8.2Z M8.5 4.3 H12 V5.7 H8.5Z" fill="#f7d3bf"/></svg><span class="t" style="left:20.3px;top:2.3px;font-size:21px;line-height:21px;-webkit-text-stroke:0.3px;color:#edc0a6;transform:scaleX(0.882)">vet..</span></div>
<div class="b ch" style="left:546.0px;top:899.5px;width:61.0px;height:25px;background:linear-gradient(#a24a23,#913f1c)"><svg class="ca" viewBox="0 0 12 10" width="12" height="10"><path d="M0.5 1 L5.5 5 L0.5 9 Z M5 1.8 L9.2 5 L5 8.2Z M8.5 4.3 H12 V5.7 H8.5Z" fill="#f7d3bf"/></svg><span class="t" style="left:20.3px;top:2.3px;font-size:21px;line-height:21px;-webkit-text-stroke:0.3px;color:#edc0a6;transform:scaleX(0.882)">vet..</span></div>
<div class="b ch" style="left:820.0px;top:899.5px;width:48.3px;height:25px;background:linear-gradient(#a24a23,#913f1c)"><svg class="ca" viewBox="0 0 12 10" width="12" height="10"><path d="M0.5 1 L5.5 5 L0.5 9 Z M5 1.8 L9.2 5 L5 8.2Z M8.5 4.3 H12 V5.7 H8.5Z" fill="#f7d3bf"/></svg></div>
<div class="b ch" style="left:669px;top:1071.5px;width:80px;height:25px;background:#a24a23"></div>
<span class="t" style="left:695.0px;top:1075.1px;font-size:20px;line-height:20px;color:#f3c9b2;transform:scaleX(0.800);">vetin..)</span>
<div class="b" style="left:328.0px;top:191.0px;width:1592.0px;height:27.5px;background:#1c1f24;"></div>
<div class="b" style="left:328.0px;top:218.0px;width:1592.0px;height:1.6px;background:#22262a;"></div>
<span class="t" style="left:378.9px;top:197.8px;font-size:15px;line-height:15px;color:#8a9096;transform:scaleX(0.800);font-weight:bold;-webkit-text-stroke:0.4px;">8</span>
<span class="t" style="left:448.8px;top:196.6px;font-size:17px;line-height:17px;color:#b4bac0;transform:scaleX(0.800);font-weight:bold;-webkit-text-stroke:0.4px;">9</span>
<span class="t" style="left:518.6px;top:197.8px;font-size:15px;line-height:15px;color:#8a9096;transform:scaleX(0.800);font-weight:bold;-webkit-text-stroke:0.4px;">10</span>
<span class="t" style="left:588.5px;top:197.8px;font-size:15px;line-height:15px;color:#8a9096;transform:scaleX(0.800);font-weight:bold;-webkit-text-stroke:0.4px;">11</span>
<span class="t" style="left:658.4px;top:197.8px;font-size:15px;line-height:15px;color:#8a9096;transform:scaleX(0.800);font-weight:bold;-webkit-text-stroke:0.4px;">12</span>
<span class="t" style="left:728.2px;top:196.6px;font-size:17px;line-height:17px;color:#b4bac0;transform:scaleX(0.800);font-weight:bold;-webkit-text-stroke:0.4px;">13</span>
<span class="t" style="left:798.1px;top:197.8px;font-size:15px;line-height:15px;color:#8a9096;transform:scaleX(0.800);font-weight:bold;-webkit-text-stroke:0.4px;">14</span>
<span class="t" style="left:868.0px;top:197.8px;font-size:15px;line-height:15px;color:#8a9096;transform:scaleX(0.800);font-weight:bold;-webkit-text-stroke:0.4px;">15</span>
<span class="t" style="left:937.9px;top:197.8px;font-size:15px;line-height:15px;color:#8a9096;transform:scaleX(0.800);font-weight:bold;-webkit-text-stroke:0.4px;">16</span>
<span class="t" style="left:1007.7px;top:196.6px;font-size:17px;line-height:17px;color:#b4bac0;transform:scaleX(0.800);font-weight:bold;-webkit-text-stroke:0.4px;">17</span>
<span class="t" style="left:1077.6px;top:197.8px;font-size:15px;line-height:15px;color:#8a9096;transform:scaleX(0.800);font-weight:bold;-webkit-text-stroke:0.4px;">18</span>
<span class="t" style="left:1147.5px;top:197.8px;font-size:15px;line-height:15px;color:#8a9096;transform:scaleX(0.800);font-weight:bold;-webkit-text-stroke:0.4px;">19</span>
<span class="t" style="left:1217.3px;top:197.8px;font-size:15px;line-height:15px;color:#8a9096;transform:scaleX(0.800);font-weight:bold;-webkit-text-stroke:0.4px;">20</span>
<span class="t" style="left:1287.2px;top:196.6px;font-size:17px;line-height:17px;color:#b4bac0;transform:scaleX(0.800);font-weight:bold;-webkit-text-stroke:0.4px;">21</span>
<span class="t" style="left:1357.1px;top:197.8px;font-size:15px;line-height:15px;color:#8a9096;transform:scaleX(0.800);font-weight:bold;-webkit-text-stroke:0.4px;">22</span>
<span class="t" style="left:1427.0px;top:197.8px;font-size:15px;line-height:15px;color:#8a9096;transform:scaleX(0.800);font-weight:bold;-webkit-text-stroke:0.4px;">23</span>
<span class="t" style="left:1496.8px;top:197.8px;font-size:15px;line-height:15px;color:#8a9096;transform:scaleX(0.800);font-weight:bold;-webkit-text-stroke:0.4px;">24</span>
<span class="t" style="left:1566.7px;top:196.6px;font-size:17px;line-height:17px;color:#b4bac0;transform:scaleX(0.800);font-weight:bold;-webkit-text-stroke:0.4px;">25</span>
<span class="t" style="left:1636.6px;top:197.8px;font-size:15px;line-height:15px;color:#8a9096;transform:scaleX(0.800);font-weight:bold;-webkit-text-stroke:0.4px;">26</span>
<span class="t" style="left:1706.4px;top:197.8px;font-size:15px;line-height:15px;color:#8a9096;transform:scaleX(0.800);font-weight:bold;-webkit-text-stroke:0.4px;">27</span>
<span class="t" style="left:1776.3px;top:197.8px;font-size:15px;line-height:15px;color:#8a9096;transform:scaleX(0.800);font-weight:bold;-webkit-text-stroke:0.4px;">28</span>
<span class="t" style="left:1846.2px;top:196.6px;font-size:17px;line-height:17px;color:#b4bac0;transform:scaleX(0.800);font-weight:bold;-webkit-text-stroke:0.4px;">29</span>
<span class="t" style="left:1916.0px;top:197.8px;font-size:15px;line-height:15px;color:#8a9096;transform:scaleX(0.800);font-weight:bold;-webkit-text-stroke:0.4px;">30</span>
<svg class="b" style="left:327px;top:191px" width="16" height="18" viewBox="0 0 16 18"><path d="M1.5 1.5 H13.5 Q14.5 1.5 13.8 2.8 L3 16 Q1.5 17 1.5 15 Z" fill="#9bd450" stroke="#6fae3a" stroke-width="1"/></svg>
<div class="b" style="left:329.0px;top:220.0px;width:1.5px;height:860.0px;background:#596064;opacity:.85"></div>
<!-- toolbar -->
<div class="b" style="left:0.0px;top:0.0px;width:1920.0px;height:119.5px;background:#393e41;"></div>
<div class="b" style="left:0.0px;top:0.0px;width:1920.0px;height:4.0px;background:linear-gradient(#2a2e31,#2f3336);"></div>
<div class="b" style="left:0.0px;top:59.5px;width:1920.0px;height:1.5px;background:#33373a;"></div>
<div class="b" style="left:-4.0px;top:7.5px;width:365.5px;height:45.0px;background:#3f4447;border-radius:2px;box-shadow:inset 0 0 0 1px #454a4d"></div>
<span class="t" style="left:-6.5px;top:17.4px;font-size:25.3px;line-height:25.3px;color:#bcc3c9;transform:scaleX(0.744);font-weight:bold;">T</span>
<span class="t" style="left:13.0px;top:17.4px;font-size:25.3px;line-height:25.3px;color:#bcc3c9;transform:scaleX(0.575);font-weight:bold;">ADD</span>
<span class="t" style="left:54.5px;top:17.4px;font-size:25.3px;line-height:25.3px;color:#bcc3c9;transform:scaleX(0.547);font-weight:bold;">PATTERNS</span>
<span class="t" style="left:136.0px;top:17.4px;font-size:25.3px;line-height:25.3px;color:#bcc3c9;transform:scaleX(0.603);font-weight:bold;">VIEW</span>
<span class="t" style="left:184.5px;top:17.4px;font-size:25.3px;line-height:25.3px;color:#bcc3c9;transform:scaleX(0.584);font-weight:bold;">OPTIONS</span>
<span class="t" style="left:260.0px;top:17.4px;font-size:25.3px;line-height:25.3px;color:#bcc3c9;transform:scaleX(0.554);font-weight:bold;">TOOLS</span>
<span class="t" style="left:318.0px;top:17.4px;font-size:25.3px;line-height:25.3px;color:#bcc3c9;transform:scaleX(0.563);font-weight:bold;">HELP</span>
<div class="b" style="left:-4.0px;top:67.5px;width:367.5px;height:48.5px;background:#2f3437;border-radius:2px;box-shadow:inset 0 0 0 1px #292d30"></div>
<span class="t" style="left:0.0px;top:71.5px;font-size:17.5px;line-height:17.5px;color:#a3aab0;transform:scaleX(0.930);font-weight:bold;">ano demonstrativo.flp</span>
<svg class="b" style="left:334.5px;top:83.5px" width="30" height="30" viewBox="0 0 30 30" fill="#54595d" stroke="none" color="#54595d"><path d="M9.5 4.5 Q15 2.5 20.5 4.5 L22 20 Q15 23 8 20Z"/><ellipse cx="15" cy="22.5" rx="10.5" ry="4"/><path d="M12 5 L11.2 19 M15 4.5 V20 M18 5 L18.8 19" stroke="#2f3437" stroke-width="1"/></svg>
<div class="b" style="left:366.0px;top:4.0px;width:1.5px;height:112.0px;background:#34383b;"></div>
<div class="b" style="left:427.0px;top:4.0px;width:1.5px;height:112.0px;background:#34383b;"></div>
<svg class="b" style="left:370px;top:4px" width="60" height="114" viewBox="370 4 60 114"><circle cx="396" cy="29.5" r="17" fill="#33373a"/><path d="M386.5 45.2 A18.3 18.3 0 1 1 413.2 36" fill="none" stroke="#c9cfd4" stroke-width="2.6" stroke-linecap="round"/><circle cx="405" cy="32.5" r="1.6" fill="#9aa0a5"/><path d="M424 46 V54 H416 Z" fill="#8e9499"/><circle cx="419.5" cy="37" r="1" fill="#7a8085"/><circle cx="395.7" cy="91.5" r="21" fill="#33373a"/><circle cx="395.7" cy="91" r="17.5" fill="#2d3134"/><circle cx="395.7" cy="81" r="1.9" fill="#a0a6ab"/><circle cx="395.7" cy="66" r="1.1" fill="#7a8085"/><path d="M415.5 109 h2 v4 h1.6 v-4 h2 v4 h1.6 v-4 h2 v6 h-9.2z" fill="#a0a6ab"/></svg>
<div class="b" style="left:433.5px;top:6.0px;width:147.0px;height:48.0px;background:#2c3033;border-radius:24px;box-shadow:0 0 0 1px #34383b"></div>
<div class="b" style="left:484.0px;top:6.0px;width:1.5px;height:48.0px;background:#3a3e41;"></div>
<div class="b" style="left:531.0px;top:6.0px;width:1.5px;height:48.0px;background:#3a3e41;"></div>
<span class="t" style="left:449.5px;top:13.5px;font-size:13px;line-height:13px;color:#565c61;transform:scaleX(0.942);">PAT</span>
<div class="b" style="left:436.0px;top:31.0px;width:47.0px;height:22.5px;background:linear-gradient(#b4ea58,#93d23c);border-radius:3px 3px 3px 16px;box-shadow:0 0 4px rgba(150,220,60,.55)"></div>
<span class="t" style="left:442.5px;top:34.9px;font-size:15.5px;line-height:15.5px;color:#3f6a1c;transform:scaleX(0.789);">SONG</span>
<svg class="b" style="left:500px;top:20px" width="16" height="22"><path d="M2.5 3.5 L12.8 11 L2.5 18.5Z" fill="#c9cfd4"/></svg>
<div class="b" style="left:548.0px;top:25.0px;width:11.5px;height:12.5px;background:#c9d3da;border-radius:1px"></div>
<div class="b" style="left:586.5px;top:11.5px;width:39.0px;height:39.0px;background:#2c3033;border-radius:50%;box-shadow:0 0 0 1px #34383b"></div>
<div class="b" style="left:598.0px;top:23.0px;width:16.0px;height:16.0px;background:#e64a5c;border-radius:50%"></div>
<div class="b" style="left:632.0px;top:14.0px;width:80.5px;height:33.5px;background:#565b5f;border-radius:5px"></div>
<span class="t" style="left:637.5px;top:14.8px;font-size:31px;line-height:31px;color:#c5cbd0;transform:scaleX(0.692);">118<span style="font-size:21px;color:#b9bfc5;">.000</span></span>
<svg class="b" style="left:702px;top:22px" width="10" height="18"><path d="M1.5 7 L4.5 3 L7.5 7Z M1.5 11 L4.5 15 L7.5 11Z" fill="#6d7277"/></svg>
<div class="b" style="left:719.5px;top:4.0px;width:1.5px;height:112.0px;background:#34383b;"></div>
<div class="b tbtn" style="left:727.0px;top:7.5px;width:43.5px;height:46.5px"></div>
<svg class="b" style="left:730.2px;top:12.5px" width="37" height="37" viewBox="0 0 30 30" fill="#c9cfd4" stroke="none" color="#c9cfd4"><path d="M3 21 Q8 10.5 15 9.5 Q22 10.5 27 21" fill="none" stroke="currentColor" stroke-width="2.6" stroke-linecap="round"/><path d="M15 3 L17.2 7.5 L16.6 21.5 L13.4 21.5 L12.8 7.5Z"/><rect x="11.5" y="7" width="7" height="2.2" fill="#393e41"/><rect x="12.6" y="7.6" width="4.8" height="1.2"/></svg>
<div class="b tbtn" style="left:727.0px;top:68.5px;width:43.5px;height:46.5px"></div>
<svg class="b" style="left:730.2px;top:73.5px" width="37" height="37" viewBox="0 0 30 30" fill="#c9cfd4" stroke="none" color="#c9cfd4"><path d="M1.5 8.5 h14 v13 h-14z M3.2 10.2 v2.2 h2.2 v-2.2z m3.4 0 v2.2 h2.2 v-2.2z m3.4 0 v2.2 h2.2 v-2.2z M3.2 13.8 v2.2 h2.2 v-2.2z m3.4 0 v2.2 h2.2 v-2.2z m3.4 0 v2.2 h2.2 v-2.2z M3.2 17.4 v2.2 h9 v-2.2z" fill-rule="evenodd"/><path d="M16 8.5 h2.4 v8 h2 v-8 h2.6 v8 h2 v-8 h2.6 v13 h-11.6z"/></svg>
<div class="b tbtn" style="left:776.0px;top:7.5px;width:43.5px;height:46.5px"></div>
<svg class="b" style="left:779.2px;top:12.5px" width="37" height="37" viewBox="0 0 30 30" fill="#c9cfd4" stroke="none" color="#c9cfd4"><path d="M2 9 h3 v8 h2.4 v-8 h3 v8 h2.4 v-8 h3 v12 h-13.8z"/><circle cx="21" cy="15.5" r="6" fill="none" stroke="currentColor" stroke-width="2.4"/><path d="M21 12 V15.8 H24" fill="none" stroke="currentColor" stroke-width="1.6"/></svg>
<div class="b tbtn" style="left:776.0px;top:68.5px;width:43.5px;height:46.5px"></div>
<svg class="b" style="left:779.7px;top:74.0px" width="36" height="36" viewBox="0 0 30 30" fill="#c9cfd4" stroke="none" color="#c9cfd4"><path d="M4 12.2 H16 V7.5 L26.5 15 L16 22.5 V17.8 H4Z"/></svg>
<div class="b tbtn" style="left:826.0px;top:7.5px;width:43.5px;height:46.5px"></div>
<svg class="b" style="left:830.7px;top:14.0px" width="34" height="34" viewBox="0 0 30 30" fill="#c9cfd4" stroke="none" color="#c9cfd4"></svg>
<div class="b tbtn" style="left:826.0px;top:68.5px;width:43.5px;height:46.5px"></div>
<svg class="b" style="left:830.7px;top:75.0px" width="34" height="34" viewBox="0 0 30 30" fill="#c9cfd4" stroke="none" color="#c9cfd4"><path d="M19.5 5.5 C23 5 23.5 9.5 21.5 12.5 C19.5 15.5 16.5 16.5 15.5 14 C14.5 11 16.5 6 19.5 5.5Z"/><path d="M14.5 16.5 C16 18 14.5 21.5 12 23 C9.5 24.5 6.5 24 6.2 22.3 C6 20.8 8.5 20.5 10.5 19 C12.5 17.5 13.3 15.5 14.5 16.5Z"/><circle cx="23.8" cy="6.8" r="1.1"/><circle cx="24.6" cy="9.4" r="1"/><circle cx="24.4" cy="11.8" r=".9"/></svg>
<div class="b tbtn" style="left:875.0px;top:7.5px;width:43.5px;height:46.5px"></div>
<svg class="b" style="left:878.2px;top:12.5px" width="37" height="37" viewBox="0 0 30 30" fill="#c9cfd4" stroke="none" color="#c9cfd4"><path d="M3 9 h3 v8 h2.4 v-8 h3 v8 h2.4 v-8 h3 v12 h-13.8z"/><path d="M21 11 h2.6 v3.2 h3.2 v2.6 h-3.2 v3.2 h-2.6 v-3.2 h-3.2 v-2.6 h3.2z"/></svg>
<div class="b tbtn" style="left:875.0px;top:68.5px;width:43.5px;height:46.5px"></div>
<svg class="b" style="left:879.7px;top:75.0px" width="34" height="34" viewBox="0 0 30 30" fill="#c9cfd4" stroke="none" color="#c9cfd4"><rect x="3.5" y="14" width="13" height="7.5" rx="3.7" transform="rotate(-42 10 17.75)" fill="none" stroke="currentColor" stroke-width="2.4"/><rect x="13.5" y="8.5" width="13" height="7.5" rx="3.7" transform="rotate(-42 20 12.25)" fill="none" stroke="currentColor" stroke-width="2.4"/></svg>
<div class="b tbtn" style="left:924.0px;top:7.5px;width:43.5px;height:46.5px"></div>
<svg class="b" style="left:927.2px;top:12.5px" width="37" height="37" viewBox="0 0 30 30" fill="#c9cfd4" stroke="none" color="#c9cfd4"><path d="M2 10 h2.6 v7 h2 v-7 h2.6 v7 h2 v-7 h2.6 v11 h-11.8z"/><path d="M26.5 13.5 A5.5 5.5 0 0 0 17 12" fill="none" stroke="currentColor" stroke-width="2.4"/><path d="M15.2 9.5 L20 12 L15.8 15Z"/><path d="M16 17.5 A5.5 5.5 0 0 0 25.5 19" fill="none" stroke="currentColor" stroke-width="2.4"/><path d="M27.3 21.5 L22.5 19 L26.7 16Z"/></svg>
<div class="b tbtn" style="left:924.0px;top:68.5px;width:43.5px;height:46.5px"></div>
<svg class="b" style="left:926.7px;top:73.0px" width="38" height="38" viewBox="0 0 30 30" fill="#c9cfd4" stroke="none" color="#c9cfd4"><ellipse cx="15" cy="22" rx="11" ry="4.2" fill="none" stroke="currentColor" stroke-width="1.8"/><path d="M10.5 7 Q15 4 19.5 7 L21.5 20.5 Q15 24 8.5 20.5Z"/><path d="M12.3 8 L11.2 19 M14.2 7.4 L13.8 20 M16 7.4 L16.4 20 M17.8 8 L18.9 19" stroke="#393e41" stroke-width=".9"/></svg>
<span class="t" style="left:830.5px;top:21.6px;font-size:20px;line-height:20px;color:#c9cfd4;transform:scaleX(0.779);font-weight:bold;">3.2.<span style="font-size:15px;">1</span></span>
<div class="b" style="left:975.0px;top:7.5px;width:189.0px;height:46.5px;background:#3a3f42;border-radius:3px;box-shadow:inset 0 0 0 1px #44494c"></div>
<span class="t" style="left:1024.5px;top:6.2px;font-size:50px;line-height:50px;color:#c6ccd1;transform:scaleX(0.750);letter-spacing:2.2px;">0:12<span style="font-size:35px;">:85</span></span>
<span class="t" style="left:1124.0px;top:10.5px;font-size:8.5px;line-height:8.5px;color:#aeb4ba;transform:scaleX(1.158);font-weight:bold;">M:S:CS</span>
<div class="b" style="left:1170.0px;top:4.0px;width:1.5px;height:52.0px;background:#34383b;"></div>
<div class="b" style="left:1175.0px;top:6.0px;width:63.0px;height:49.0px;background:#2f3336;box-shadow:inset 0 0 0 1px #292d30"></div>
<div class="b" style="left:1176.5px;top:29.5px;width:60.5px;height:2.0px;background:#c9cfd4;"></div>
<div class="b" style="left:1244.0px;top:6.0px;width:112.0px;height:34.0px;background:#2f3336;box-shadow:inset 0 0 0 1px #292d30"></div>
<svg class="b" style="left:1335.0px;top:41.0px" width="18" height="18" viewBox="0 0 30 30" fill="#8c9297" stroke="none" color="#8c9297"><path d="M1.5 15 Q15 1.5 28.5 15 Q15 28.5 1.5 15Z"/><circle cx="17" cy="13" r="5.5" fill="#393e41"/></svg>
<div class="b" style="left:1366.0px;top:6.0px;width:223.0px;height:48.5px;background:#2d3134;border-radius:2px;box-shadow:inset 0 0 0 1px #272b2e"></div>
<div class="b" style="left:1368.0px;top:9.5px;width:37.5px;height:18.0px;background:#c6cbcf;"></div>
<span class="t" style="left:1474.5px;top:11.2px;font-size:16.5px;line-height:16.5px;color:#c6ccd1;transform:scaleX(0.899);font-weight:bold;">29</span>
<span class="t" style="left:1534.5px;top:11.2px;font-size:16.5px;line-height:16.5px;color:#c6ccd1;transform:scaleX(0.874);font-weight:bold;">875 MB</span>
<span class="t" style="left:1551.0px;top:32.2px;font-size:24px;line-height:24px;color:#c6ccd1;transform:scaleX(0.637);">0</span>
<svg class="b" style="left:1564.5px;top:35.0px" width="22" height="22" viewBox="0 0 30 30" fill="#8d9398" stroke="none" color="#8d9398"><path d="M2.5 15 Q8.5 6.5 12.5 9.5 Q15 11 17.5 9.5 Q21.5 6.5 27.5 15 Q21.5 23 15 23 Q8.5 23 2.5 15Z" fill="none" stroke="currentColor" stroke-width="3.4"/></svg>
<div class="b" style="left:1497.5px;top:31.0px;width:10.0px;height:11.0px;background:#4c5155;border-radius:2px"></div>
<svg class="b" style="left:1366px;top:36px" width="132" height="16" viewBox="0 0 132 16"><path d="M2 8 L6 6.5 L12 7 L20 6 L28 6.8 L36 5.5 L44 6.2 L52 5.8 L60 6.5 L68 6 L72 8 L76 5.5 L78 12 L81 6.5 L84 12 L90 11.5 L100 12 L112 11.8 L126 12" fill="none" stroke="#b9bfc4" stroke-width="1.6"/></svg>
<div class="b tbtn" style="left:1600.0px;top:7.5px;width:42.5px;height:46.0px"></div>
<svg class="b" style="left:1603.2px;top:13.0px" width="36" height="36" viewBox="0 0 30 30" fill="#c9cfd4" stroke="none" color="#c9cfd4"><path d="M15 7.5 A9 9 0 1 1 7.2 12" fill="none" stroke="currentColor" stroke-width="2.8"/><path d="M16.5 2.5 L16.5 12.5 L9.5 7.5Z"/></svg>
<div class="b tbtn" style="left:1649.5px;top:7.5px;width:42.5px;height:46.0px"></div>
<svg class="b" style="left:1652.2px;top:12.5px" width="37" height="37" viewBox="0 0 30 30" fill="#c9cfd4" stroke="none" color="#c9cfd4"><path d="M9.5 7 L19.5 18 M20.5 7 L10.5 18" fill="none" stroke="currentColor" stroke-width="2.2"/><circle cx="8.8" cy="5.2" r="2.2" fill="none" stroke="currentColor" stroke-width="1.5"/><circle cx="21.2" cy="5.2" r="2.2" fill="none" stroke="currentColor" stroke-width="1.5"/><path d="M15 17.5 L17.3 22.5 L15 27.5 L12.7 22.5Z"/><path d="M6 22.5 L9.5 20 V21.7 H12 V23.3 H9.5 V25Z M24 22.5 L20.5 20 V21.7 H18 V23.3 H20.5 V25Z"/></svg>
<div class="b tbtn" style="left:1699.5px;top:7.5px;width:42.5px;height:46.0px"></div>
<svg class="b" style="left:1699.7px;top:10.0px" width="42" height="42" viewBox="0 0 30 30" fill="#c9cfd4" stroke="none" color="#c9cfd4"><rect x="11" y="3" width="8" height="15" rx="4"/><path d="M11.5 7 h7 M11.5 9.5 h7 M11.5 12 h7" stroke="#393e41" stroke-width="1"/><path d="M8.5 12.5 V15 A6.5 6.5 0 0 0 21.5 15 V12.5" fill="none" stroke="currentColor" stroke-width="1.8"/><rect x="14.1" y="21" width="1.8" height="4"/><path d="M10.5 26.5 Q15 23 19.5 26.5Z"/></svg>
<div class="b tbtn" style="left:1748.5px;top:7.5px;width:42.5px;height:46.0px"></div>
<svg class="b" style="left:1752.7px;top:14.0px" width="34" height="34" viewBox="0 0 30 30" fill="#c9cfd4" stroke="none" color="#c9cfd4"></svg>
<span class="t" style="left:1761.5px;top:17.3px;font-size:31px;line-height:31px;color:#c9cfd4;transform:scaleX(0.898);font-weight:bold;">?</span>
<div class="b tbtn" style="left:1833.0px;top:18.0px;width:25.5px;height:25.5px"></div>
<div class="b tbtn" style="left:1864.0px;top:18.0px;width:25.5px;height:25.5px"></div>
<div class="b tbtn" style="left:1894.0px;top:18.0px;width:25.5px;height:25.5px"></div>
<div class="b" style="left:1840.0px;top:34.5px;width:11.0px;height:3.5px;background:#d5dade;"></div>
<svg class="b" style="left:1867px;top:21px" width="20" height="20" viewBox="0 0 20 20"><path d="M6.5 5 H15.5 V12" fill="none" stroke="#a9afb4" stroke-width="2"/><rect x="4" y="8" width="9" height="7.5" fill="none" stroke="#d5dade" stroke-width="2.2"/></svg>
<svg class="b" style="left:1897px;top:21px" width="20" height="20" viewBox="0 0 20 20"><path d="M4 4 L16 16 M16 4 L4 16" stroke="#d5dade" stroke-width="2.6"/></svg>
<div class="b" style="left:449.0px;top:90.0px;width:12.5px;height:6.0px;background:#9bd84a;border-radius:1px;box-shadow:0 0 3px rgba(150,220,60,.5)"></div>
<div class="b" style="left:472.0px;top:92.3px;width:232.0px;height:1.8px;background:#33373a;"></div>
<div class="b" style="left:462.0px;top:82.5px;width:20.0px;height:20.0px;background:radial-gradient(circle at 50% 45%,#3a3e41,#25282b 75%);border-radius:50%"></div>
<div class="b" style="left:471.0px;top:85.0px;width:1.8px;height:13.0px;background:#8fcf45;"></div>
<svg class="b" style="left:976.5px;top:84.0px" width="22" height="22" viewBox="0 0 30 30" fill="#83898f" stroke="none" color="#83898f"><path d="M3.5 26 V13.5 A11.5 11.5 0 0 1 26.5 13.5 V26 H18.5 V14 A3.5 3.5 0 0 0 11.5 14 V26Z"/><rect x="3" y="19" width="9" height="2" fill="#393e41"/><rect x="18" y="19" width="9" height="2" fill="#393e41"/></svg>
<div class="b" style="left:1005.0px;top:79.0px;width:89.0px;height:26.0px;background:#2c3033;border-radius:2px;box-shadow:inset 0 0 0 1px #262a2d"></div>
<span class="t" style="left:1008.5px;top:83.5px;font-size:16.5px;line-height:16.5px;color:#d3d8dc;transform:scaleX(0.929);font-weight:bold;">Line</span>
<svg class="b" style="left:1081px;top:85px" width="10" height="14"><path d="M2 2 L8 7 L2 12Z" fill="#555a5e"/></svg>
<div class="b" style="left:1111.0px;top:72.5px;width:24.5px;height:38.5px;background:#2f3336;border-radius:3px 0 0 3px"></div>
<svg class="b" style="left:1118px;top:84px" width="10" height="16"><path d="M1.5 1.5 L8.5 8 L1.5 14.5Z" fill="#c9cfd4"/></svg>
<div class="b" style="left:1135.5px;top:72.5px;width:141.0px;height:38.5px;background:linear-gradient(90deg,#5b6064,#666b6f 40%,#6d7276);"></div>
<span class="t" style="left:1181.5px;top:77.3px;font-size:27px;line-height:27px;color:#c3c9ce;transform:scaleX(0.730);">Pattern 1</span>
<svg class="b" style="left:1263px;top:80px" width="10" height="24"><path d="M1.5 9 L4.5 5 L7.5 9Z M1.5 14 L4.5 18 L7.5 14Z" fill="#50555a"/></svg>
<div class="b" style="left:1278.0px;top:72.5px;width:23.5px;height:38.5px;background:#303437;border-radius:0 3px 3px 0"></div>
<svg class="b" style="left:1282px;top:84px" width="16" height="16"><path d="M8 2.5 V13.5 M2.5 8 H13.5" stroke="#d0d5da" stroke-width="2.2"/></svg>
<div class="b" style="left:1306.5px;top:64.0px;width:1.5px;height:52.0px;background:#34383b;"></div>
<div class="b tbtn" style="left:1314.0px;top:68.5px;width:42.5px;height:46.5px"></div>
<svg class="b" style="left:1316.2px;top:73.0px" width="38" height="38" viewBox="0 0 30 30" fill="#c9cfd4" stroke="none" color="#c9cfd4"><path d="M11.5 3.5 h7 l-3.5 4z"/><path d="M4 10 h22 v15 h-22z M6 14.5 v8.5 h18 v-8.5z" fill-rule="evenodd"/><rect x="7.5" y="19.5" width="5" height="2"/><rect x="12.5" y="17.5" width="5" height="2"/><rect x="17.5" y="15.8" width="5" height="2"/></svg>
<div class="b tbtn" style="left:1363.2px;top:68.5px;width:42.5px;height:46.5px"></div>
<svg class="b" style="left:1365.4px;top:73.0px" width="38" height="38" viewBox="0 0 30 30" fill="#c9cfd4" stroke="none" color="#c9cfd4"><path d="M4 5 h8.5 v20 h-8.5z M4 9.5 h4.5 v3 h-4.5z M4 17 h4.5 v3 h-4.5z" fill-rule="evenodd"/><rect x="14.5" y="17.5" width="4.5" height="4.5"/><rect x="18.5" y="12.5" width="4.5" height="4.5"/><rect x="22.5" y="7.5" width="4.5" height="4.5"/></svg>
<div class="b tbtn" style="left:1412.4px;top:68.5px;width:42.5px;height:46.5px"></div>
<svg class="b" style="left:1415.6px;top:74.0px" width="36" height="36" viewBox="0 0 30 30" fill="#c9cfd4" stroke="none" color="#c9cfd4"><rect x="5" y="5" width="13.5" height="5" rx="1" fill="none" stroke="currentColor" stroke-width="1.9"/><rect x="5" y="12.5" width="13.5" height="5" rx="1" fill="none" stroke="currentColor" stroke-width="1.9"/><rect x="5" y="20" width="13.5" height="5" rx="1" fill="none" stroke="currentColor" stroke-width="1.9"/><rect x="21" y="4.5" width="3.8" height="6" rx="1" fill="#9fb8a4"/><rect x="21" y="12" width="3.8" height="6" rx="1" fill="#9fb8a4"/><rect x="21" y="19.5" width="3.8" height="6" rx="1" fill="#9fb8a4"/></svg>
<div class="b tbtn" style="left:1461.6px;top:68.5px;width:42.5px;height:46.5px"></div>
<svg class="b" style="left:1463.8px;top:73.0px" width="38" height="38" viewBox="0 0 30 30" fill="#c9cfd4" stroke="none" color="#c9cfd4"><rect x="9.5" y="3.5" width="2" height="23"/><rect x="18.5" y="3.5" width="2" height="23"/><rect x="6.8" y="12.5" width="7.4" height="6" fill="none" stroke="currentColor" stroke-width="1.8"/><rect x="15.8" y="12.5" width="7.4" height="6" fill="none" stroke="currentColor" stroke-width="1.8"/><rect x="8" y="14.7" width="5" height="1.6"/><rect x="17" y="14.7" width="5" height="1.6"/></svg>
<div class="b tbtn" style="left:1510.8px;top:68.5px;width:42.5px;height:46.5px"></div>
<svg class="b" style="left:1512.5px;top:72.5px" width="39" height="39" viewBox="0 0 30 30" fill="#c9cfd4" stroke="none" color="#c9cfd4"><path d="M4.5 9 V3.8 H8.5 L10 5.3 H13 V9Z" fill="none" stroke="currentColor" stroke-width="1.8"/><path d="M9 10 V24.5 H16 M9 17 H16" fill="none" stroke="currentColor" stroke-width="2"/><path d="M15.5 13.8 L21 17 L15.5 20.2Z M20 13.8 L25.5 17 L20 20.2Z M15.5 21.3 L21 24.5 L15.5 27.7Z M20 21.3 L25.5 24.5 L20 27.7Z"/></svg>
<div class="b tbtn" style="left:1560.0px;top:68.5px;width:42.5px;height:46.5px"></div>
<svg class="b" style="left:1562.2px;top:73.0px" width="38" height="38" viewBox="0 0 30 30" fill="#c9cfd4" stroke="none" color="#c9cfd4"><path d="M6 6 h9 v17 h-9z" fill="#aebcc0"/><path d="M9.5 8.5 h9 l4.5 4.5 v13 h-13.5z"/><path d="M18.5 8.5 v4.5 h4.5z" fill="#8d979b"/></svg>
<div class="b tbtn" style="left:1609.2px;top:68.5px;width:42.5px;height:46.5px"></div>
<svg class="b" style="left:1609.9px;top:71.5px" width="41" height="41" viewBox="0 0 30 30" fill="#c9cfd4" stroke="none" color="#c9cfd4"><rect x="10" y="2.5" width="2.6" height="6"/><rect x="17.4" y="2.5" width="2.6" height="6"/><path d="M7.5 8 h15 v4.5 Q22.5 18 18.5 20 L17.3 27.5 h-4.6 L11.5 20 Q7.5 18 7.5 12.5Z"/></svg>
<div class="b tbtn" style="left:1658.4px;top:68.5px;width:42.5px;height:46.5px"></div>
<svg class="b" style="left:1659.1px;top:71.5px" width="41" height="41" viewBox="0 0 30 30" fill="#c9cfd4" stroke="none" color="#c9cfd4"><rect x="17.5" y="2.5" width="6.5" height="5" rx="1.2" transform="rotate(28 20.7 5)"/><path d="M18.8 7.5 L12.5 17" fill="none" stroke="currentColor" stroke-width="2.2"/><path d="M8.5 15.5 Q11 13.5 13.5 15.5 L12.2 26 H7.8Z"/><path d="M13 19 L25.5 25.5 V27 H6 V25 H12Z"/></svg>
<div class="b tbtn" style="left:1707.6px;top:68.5px;width:42.5px;height:46.5px"></div>
<svg class="b" style="left:1711.3px;top:74.5px" width="35" height="35" viewBox="0 0 30 30" fill="#c9cfd4" stroke="none" color="#c9cfd4"><path d="M4.5 8.5 L8.5 6 L13.5 11.5 L16.5 10.5 Q19.5 10 21.5 12 L25.5 16.5 L20.5 23 L18 22.5 Q13 22 11.5 17 L7.5 14.5 L9.8 13Z"/><path d="M21 24 L26 17.5 L27.5 18.8 L22.5 25.3Z" fill="#aab0b5"/></svg>
<div class="b tbtn" style="left:1756.8px;top:68.5px;width:42.5px;height:46.5px"></div>
<svg class="b" style="left:1763.0px;top:77.0px" width="30" height="30" viewBox="0 0 30 30" fill="#9ba1a6" stroke="none" color="#9ba1a6"><path d="M4 6.5 H7.8 L10.8 19 H21.5" fill="none" stroke="currentColor" stroke-width="1.8"/><path d="M8.6 8.5 H24.5 L22.5 16.5 H10.5Z"/><path d="M12.5 8.5 v8 M16.2 8.5 v8 M20 8.5 v8 M9.5 12.3 h14" stroke="#393e41" stroke-width="1"/><circle cx="12.3" cy="22.7" r="1.9"/><circle cx="20.3" cy="22.7" r="1.9"/></svg>
<div class="b" style="left:1808.5px;top:65.5px;width:115.0px;height:51.0px;background:#34393c;border-radius:3px;box-shadow:inset 0 0 0 1px #2e3235"></div>
<span class="t" style="left:1814.5px;top:71.6px;font-size:17.01px;line-height:17.01px;color:#c3c9ce;transform:scaleX(0.985);font-weight:bold;"><span style="font-size:17px;color:#686e73;">04/09 </span>FL</span>
<span class="t" style="left:1814.5px;top:93.6px;font-size:17px;line-height:17px;color:#c3c9ce;transform:scaleX(0.849);font-weight:bold;">STUDIO | Ke..</span>
<!-- overlay -->
<svg class="b" style="left:1270px;top:300px" width="380" height="680" viewBox="1270 300 380 680"><defs><filter id="wb" x="-10%" y="-20%" width="120%" height="140%"><feGaussianBlur stdDeviation="4 16"/></filter><clipPath id="wc"><rect x="1270" y="328.5" width="380" height="622.5"/></clipPath></defs><g clip-path="url(#wc)"><g filter="url(#wb)"><rect x="1295.5" y="248.5" width="326.0" height="782.5" fill="#ededed"/><path d="M1410.5 240 L1426.5 240 L1424.9 330 L1418.5 445 L1412.1 330Z" fill="#8a8a8a" fill-opacity="0.5"/><path d="M1444.5 240 L1458.5 240 L1457.1 330 L1451.5 402 L1445.9 330Z" fill="#8a8a8a" fill-opacity="0.45"/><path d="M1395.5 240 L1403.5 240 L1402.7 330 L1399.5 372 L1396.3 330Z" fill="#999" fill-opacity="0.3"/><path d="M1561 240 L1579 240 L1577.2 330 L1570 482 L1562.8 330Z" fill="#8a8a8a" fill-opacity="0.36"/><path d="M1383 240 L1389 240 L1388.4 330 L1386 350 L1383.6 330Z" fill="#999" fill-opacity="0.25"/><path d="M1471 384 L1519 368 L1519 638.5 L1471 638.5Z" fill="#777" fill-opacity=".36"/><path d="M1474 470 L1519 450 L1519 638.5 L1474 638.5Z" fill="#666" fill-opacity=".22"/><path d="M1517 240 L1533 240 L1533 638.5 L1517 638.5Z" fill="#808080" fill-opacity=".42"/><path d="M1622 240 L1622 638.5 L1570 638.5 L1604 330Z" fill="#777" fill-opacity=".3"/><path d="M1622 420 L1622 638.5 L1590 638.5Z" fill="#777" fill-opacity=".25"/><path d="M1332 600 L1346 508 L1360 600Z" fill="#777" fill-opacity=".4"/><path d="M1363 600 L1372 545 L1381 600Z" fill="#777" fill-opacity=".4"/><path d="M1386.5 600 L1396.5 520 L1406.5 600Z" fill="#777" fill-opacity=".4"/><path d="M1408.5 600 L1418.5 512 L1428.5 600Z" fill="#777" fill-opacity=".4"/><path d="M1439.5 600 L1451.5 530 L1463.5 600Z" fill="#777" fill-opacity=".4"/><path d="M1527 600 L1541 524 L1555 600Z" fill="#777" fill-opacity=".4"/><path d="M1573 600 L1585 540 L1597 600Z" fill="#777" fill-opacity=".4"/><path d="M1295.5 540 H1621.5 V638.5 H1295.5Z" fill="#505050" fill-opacity="0.1"/><path d="M1295.5 556 H1621.5 V638.5 H1295.5Z" fill="#505050" fill-opacity="0.12"/><path d="M1295.5 572 H1621.5 V638.5 H1295.5Z" fill="#505050" fill-opacity="0.14"/><path d="M1295.5 588 H1621.5 V638.5 H1295.5Z" fill="#505050" fill-opacity="0.15"/><path d="M1295.5 602 H1621.5 V638.5 H1295.5Z" fill="#505050" fill-opacity="0.15"/><path d="M1295.5 614 H1621.5 V638.5 H1295.5Z" fill="#505050" fill-opacity="0.14"/><path d="M1295.5 625 H1621.5 V638.5 H1295.5Z" fill="#505050" fill-opacity="0.12"/><path d="M1410.5 1037.0 L1426.5 1037.0 L1424.9 947.0 L1418.5 832.0 L1412.1 947.0Z" fill="#8a8a8a" fill-opacity="0.5"/><path d="M1444.5 1037.0 L1458.5 1037.0 L1457.1 947.0 L1451.5 875.0 L1445.9 947.0Z" fill="#8a8a8a" fill-opacity="0.45"/><path d="M1395.5 1037.0 L1403.5 1037.0 L1402.7 947.0 L1399.5 905.0 L1396.3 947.0Z" fill="#999" fill-opacity="0.3"/><path d="M1561 1037.0 L1579 1037.0 L1577.2 947.0 L1570 795.0 L1562.8 947.0Z" fill="#8a8a8a" fill-opacity="0.36"/><path d="M1383 1037.0 L1389 1037.0 L1388.4 947.0 L1386 927.0 L1383.6 947.0Z" fill="#999" fill-opacity="0.25"/><path d="M1471 893.0 L1519 909.0 L1519 638.5 L1471 638.5Z" fill="#777" fill-opacity=".36"/><path d="M1474 807.0 L1519 827.0 L1519 638.5 L1474 638.5Z" fill="#666" fill-opacity=".22"/><path d="M1517 1037.0 L1533 1037.0 L1533 638.5 L1517 638.5Z" fill="#808080" fill-opacity=".42"/><path d="M1622 1037.0 L1622 638.5 L1570 638.5 L1604 947.0Z" fill="#777" fill-opacity=".3"/><path d="M1622 857.0 L1622 638.5 L1590 638.5Z" fill="#777" fill-opacity=".25"/><path d="M1332 677.0 L1346 769.0 L1360 677.0Z" fill="#777" fill-opacity=".4"/><path d="M1363 677.0 L1372 732.0 L1381 677.0Z" fill="#777" fill-opacity=".4"/><path d="M1386.5 677.0 L1396.5 757.0 L1406.5 677.0Z" fill="#777" fill-opacity=".4"/><path d="M1408.5 677.0 L1418.5 765.0 L1428.5 677.0Z" fill="#777" fill-opacity=".4"/><path d="M1439.5 677.0 L1451.5 747.0 L1463.5 677.0Z" fill="#777" fill-opacity=".4"/><path d="M1527 677.0 L1541 753.0 L1555 677.0Z" fill="#777" fill-opacity=".4"/><path d="M1573 677.0 L1585 737.0 L1597 677.0Z" fill="#777" fill-opacity=".4"/><path d="M1295.5 737.0 H1621.5 V638.5 H1295.5Z" fill="#505050" fill-opacity="0.1"/><path d="M1295.5 721.0 H1621.5 V638.5 H1295.5Z" fill="#505050" fill-opacity="0.12"/><path d="M1295.5 705.0 H1621.5 V638.5 H1295.5Z" fill="#505050" fill-opacity="0.14"/><path d="M1295.5 689.0 H1621.5 V638.5 H1295.5Z" fill="#505050" fill-opacity="0.15"/><path d="M1295.5 675.0 H1621.5 V638.5 H1295.5Z" fill="#505050" fill-opacity="0.15"/><path d="M1295.5 663.0 H1621.5 V638.5 H1295.5Z" fill="#505050" fill-opacity="0.14"/><path d="M1295.5 652.0 H1621.5 V638.5 H1295.5Z" fill="#505050" fill-opacity="0.12"/><path d="M1295.5 626 Q1458 668 1621.5 626" fill="none" stroke="#444" stroke-opacity=".33" stroke-width="13"/><rect x="1295.5" y="200" width="8" height="900" fill="#777" fill-opacity=".55"/><rect x="1312" y="200" width="12" height="900" fill="#777" fill-opacity=".5"/><rect x="1302" y="200" width="30" height="900" fill="#888" fill-opacity=".3"/><rect x="1610" y="200" width="12" height="900" fill="#777" fill-opacity=".45"/></g><rect x="1299" y="558.7" width="319" height="1.6" fill="#444" fill-opacity=".12"/><rect x="1299" y="728.7" width="319" height="1.6" fill="#444" fill-opacity=".08"/></g></svg>
<svg class="b" style="left:519px;top:168px" width="26" height="34" viewBox="0 0 26 34"><path d="M4.5 3.5 L4.5 25 L9.5 20.3 L13.2 29.2 L17 27.6 L13.2 18.8 L20.5 18.8Z" fill="#f4f4f4" stroke="#2a2a2a" stroke-width="1.5" stroke-linejoin="round"/></svg>
<svg class="b" style="left:1844px;top:998px" width="58" height="64" viewBox="0 0 58 64"><path d="M9.5 22 Q10 10 22 8" fill="none" stroke="#8a909c" stroke-width="2.6"/><path d="M9.5 22 Q10 10 22 8" fill="none" stroke="#23252b" stroke-width="1" stroke-dasharray="2 2"/><ellipse cx="9.8" cy="26" rx="4.6" ry="6.2" fill="#e8b41c" stroke="#23252b" stroke-width="1.6"/><ellipse cx="9.4" cy="26.2" rx="1.9" ry="3.2" fill="#6a4a12"/><path d="M13 21 L19 17 L17 31 L14.5 32Z" fill="#7c828e" stroke="#23252b" stroke-width=".8"/><path d="M18 17 L16.5 10.5 L21.5 12.5 L21 5.5 L26.5 10 L28.5 4.5 L32 9.5 L36.5 6 L36.5 12 L41 11.5 L38.5 18.5 L24 17.5Z" fill="#e8901c" stroke="#3a2408" stroke-width=".9"/><path d="M22.5 9 L26 14 M29 7.5 L30.5 13.5 M35 9 L34.5 14.5" stroke="#f9dc3a" stroke-width="1.6" fill="none"/><path d="M21 16.4 L39.6 19.6 L40 38.5 L22.7 40Z" fill="#f6d226" stroke="#3a2408" stroke-width=".9"/><path d="M21 16.4 L22.7 40 L14.9 38.7 L16 28.5Z" fill="#e8761a" stroke="#3a2408" stroke-width=".9"/><path d="M22 18.5 L38.5 21.2" stroke="#fbe86a" stroke-width="1.4"/><path d="M21.8 23 L40 25.2 L39.6 30.4 L35.8 31 L33.2 27.6 L31.2 31.2 L24.5 31 L22 28Z" fill="#1f2126"/><path d="M24 25 L29.5 25.8 L26 29.5Z" fill="#9aa3b2"/><path d="M34.5 26.6 L38.6 27.1 L36 29.6Z" fill="#9aa3b2"/><path d="M26.8 33 Q31.5 35.2 36.6 32.6 Q33.5 37.8 28.5 36.4Z" fill="#f5f5f0" stroke="#3a2408" stroke-width=".8"/><path d="M47.2 8.8 L52.6 40.8" stroke="#c8ced8" stroke-width="2.2"/><path d="M47.2 8.8 L52.6 40.8" stroke="#3c4048" stroke-width=".7" stroke-dasharray="1.5 2.5"/><path d="M41.5 10.8 L48 7.2 L50.5 8.4" fill="none" stroke="#d5dae2" stroke-width="2"/><path d="M44 27 Q46 24 49.5 25.5 L51 31.5 Q48 34.2 44.6 32.5Z" fill="#eef0f4" stroke="#3c4048" stroke-width=".9"/><path d="M40 33 L44.5 30.5 L45.5 33 L40.5 36Z" fill="#23252b"/><path d="M19.5 40 L38.5 39 L41 47 L36 50.5 L30 47.5 L22 51 L17.5 47Z" fill="#1d2230" stroke="#12141a" stroke-width=".8"/><path d="M27 40.5 L31.5 40.2 L33.5 48.5 L29.5 50 Z" fill="#f0b41c"/><path d="M23 41.5 L26 48 M35 41 L34 47" stroke="#e8901c" stroke-width="1.1"/><path d="M18.5 41 L12.5 41.5 L11.5 44" fill="none" stroke="#1d2230" stroke-width="2.6"/><path d="M6.2 41 Q8.5 38 12 39.6 L12.8 45 Q10 47.6 6.8 45.8Z" fill="#f2f3f5" stroke="#3c4048" stroke-width=".9"/><path d="M21.5 49.5 L17 53.5 M36.5 49.5 L39.5 52.5" stroke="#1d2230" stroke-width="3.2"/><path d="M11.5 53 L18.5 50.2 L21.2 55.5 L20.6 58 L8.6 59.6 L8.2 57Z" fill="#eeb01c" stroke="#23252b" stroke-width="1"/><path d="M8.3 57.6 L20.8 55.8 L20.8 58.2 L8.6 60Z" fill="#f4f4f2"/><path d="M35.5 50.5 L41.5 49.2 L45.6 54.5 L45.2 57 L33.6 58 L33 55.5Z" fill="#eeb01c" stroke="#23252b" stroke-width="1"/><path d="M33.2 56 L45.6 54.6 L45.4 57.2 L33.6 58.4Z" fill="#f4f4f2"/><path d="M13.5 54.5 L17.5 53.2 M37 52.6 L41 51.8" stroke="#b8741a" stroke-width="1.2"/></svg>
</div></body></html>
